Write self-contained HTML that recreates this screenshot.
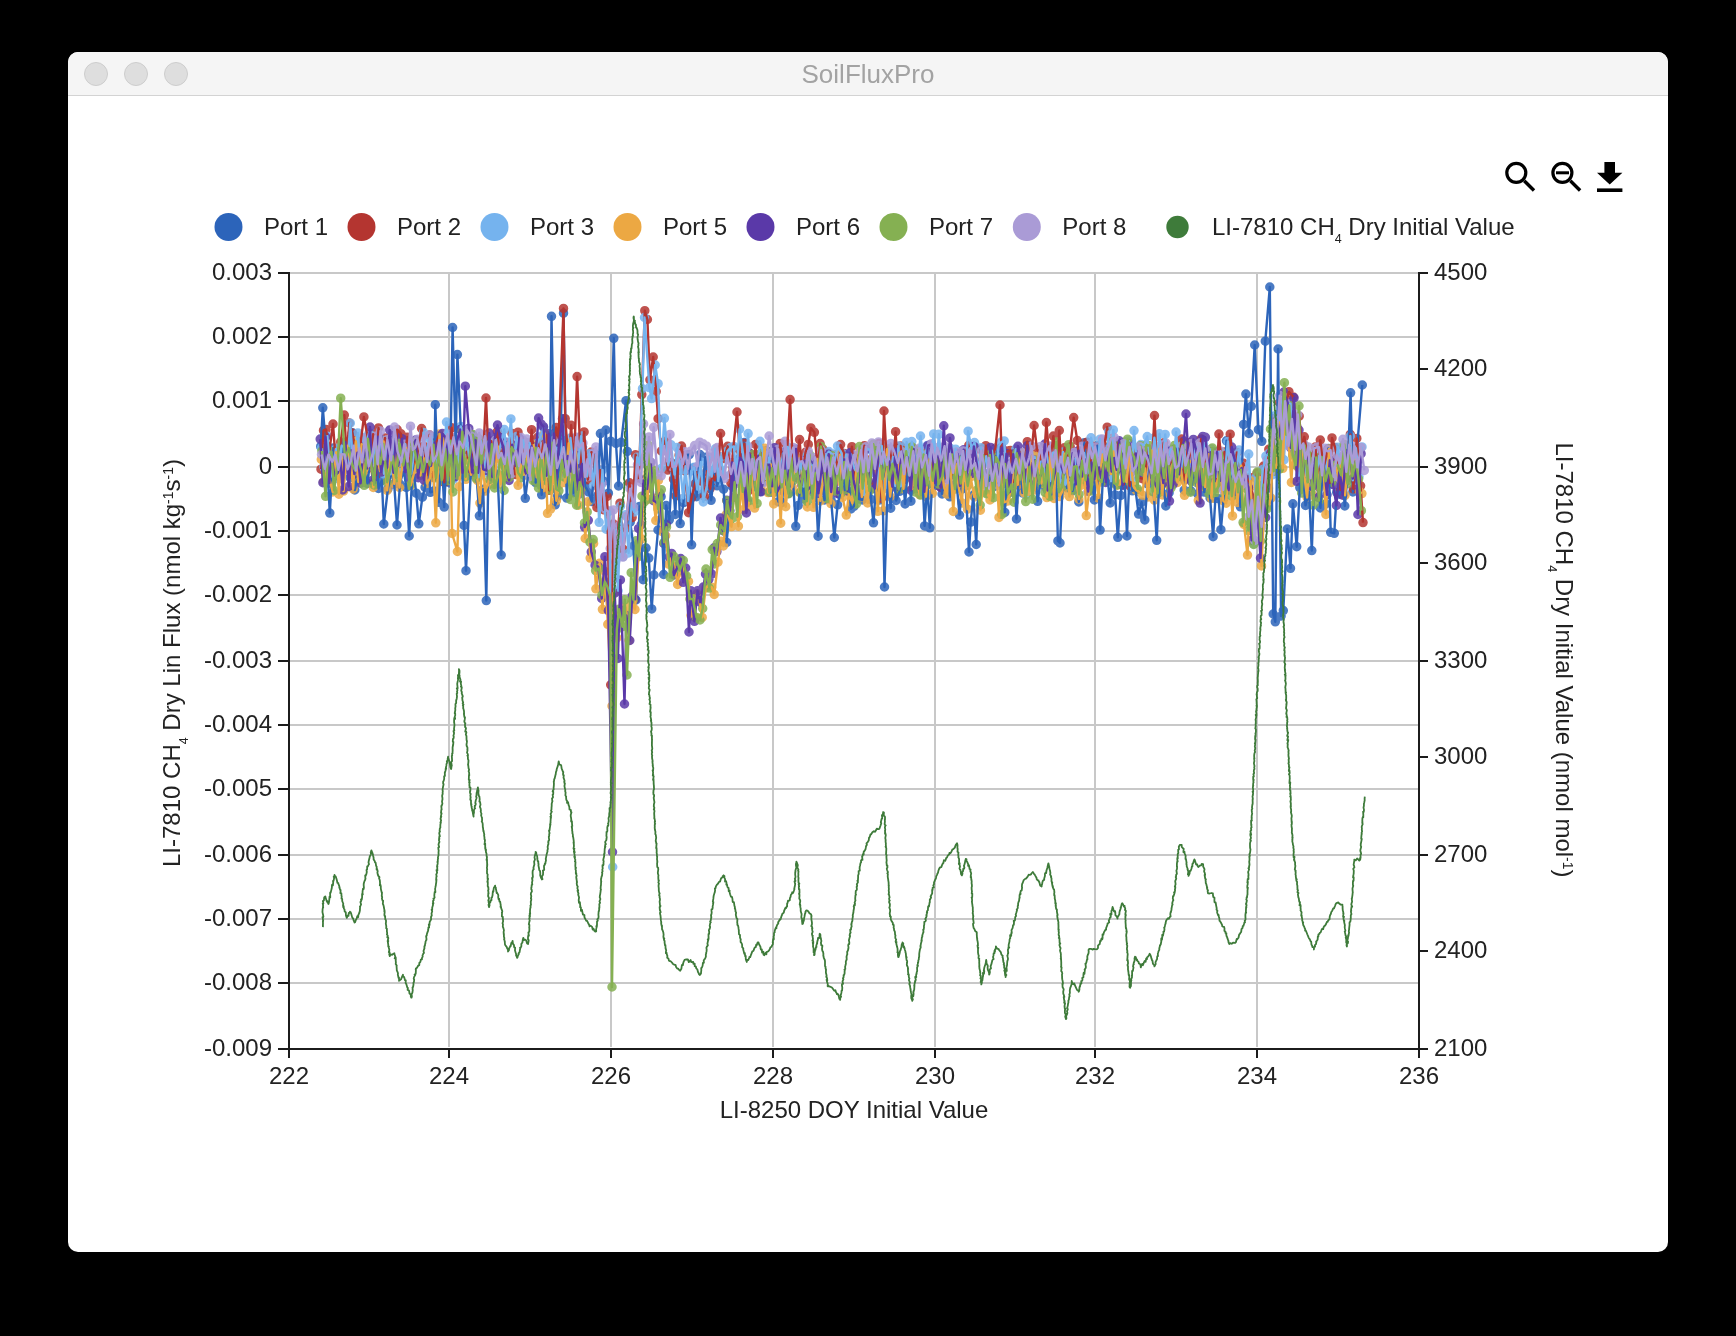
<!DOCTYPE html>
<html><head><meta charset="utf-8"><style>
html,body{margin:0;padding:0;background:#000;width:1736px;height:1336px;overflow:hidden}
#win{position:absolute;left:68px;top:52px;width:1600px;height:1200px;background:#fff;border-radius:10px;overflow:hidden}
#tb{position:absolute;left:0;top:0;width:1600px;height:43px;background:#f5f5f5;border-bottom:1px solid #d3d3d3;box-sizing:content-box}
.dot{position:absolute;top:10px;width:22px;height:22px;border-radius:50%;background:#dedede;border:1px solid #cdcdcd}
#title{position:absolute;left:0;width:1600px;top:7px;text-align:center;font:26px "Liberation Sans", sans-serif;color:#a3a3a3;line-height:30px;will-change:transform}
svg{position:absolute;left:0;top:0;will-change:transform}
text{font-family:"Liberation Sans", sans-serif}
</style></head><body>
<div id="win"><div id="tb"><div class="dot" style="left:16px"></div><div class="dot" style="left:56px"></div><div class="dot" style="left:96px"></div><div id="title">SoilFluxPro</div></div></div>
<svg width="1736" height="1336" viewBox="0 0 1736 1336">
<path d="M290 273H1418M290 337H1418M290 401H1418M290 467H1418M290 531H1418M290 595H1418M290 661H1418M290 725H1418M290 789H1418M290 855H1418M290 919H1418M290 983H1418M449 274V1047M611 274V1047M773 274V1047M935 274V1047M1095 274V1047M1257 274V1047" stroke="#c8c8c8" stroke-width="2" fill="none"/>
<path d="M320.7 446.4h0M322.8 407.8h0M326.6 454.6h0M329.8 513.1h0M333.4 447.9h0M337.1 475.9h0M340.0 460.9h0M343.2 447.3h0M346.9 463.4h0M350.1 477.6h0M352.4 432.8h0M354.8 490.0h0M357.1 480.5h0M360.9 466.1h0M363.7 461.6h0M367.5 483.4h0M370.6 456.3h0M374.0 483.5h0M376.2 450.9h0M378.5 488.5h0M381.9 480.5h0M383.8 524.0h0M387.9 488.9h0M391.3 470.3h0M394.2 483.8h0M397.0 525.0h0M400.0 484.3h0M403.6 469.2h0M406.3 487.4h0M409.2 536.0h0M412.8 464.0h0M416.2 493.2h0M418.8 523.8h0M422.4 497.2h0M425.1 487.4h0M427.8 450.1h0M430.3 492.3h0M433.8 491.1h0M435.3 404.7h0M438.8 502.3h0M441.5 452.1h0M444.2 507.1h0M447.0 448.8h0M449.9 483.0h0M452.6 327.5h0M455.7 445.8h0M457.4 354.6h0M461.8 450.8h0M464.0 525.5h0M466.0 570.7h0M470.7 474.3h0M473.0 435.2h0M476.6 477.4h0M479.4 515.8h0M483.2 489.2h0M486.3 600.6h0M488.8 445.6h0M491.3 475.5h0M494.6 457.8h0M497.7 478.1h0M501.2 555.1h0M503.2 478.2h0M506.1 442.3h0M509.1 471.6h0M512.7 455.7h0M516.2 471.1h0M519.6 457.3h0M522.7 465.5h0M525.3 498.3h0M528.9 468.3h0M532.3 446.0h0M535.7 482.6h0M538.5 447.6h0M541.7 494.8h0M544.1 443.8h0M547.0 481.2h0M550.1 455.6h0M551.5 316.3h0M555.2 504.8h0M557.6 496.3h0M560.4 445.4h0M563.5 313.2h0M566.7 498.1h0M569.8 451.1h0M573.4 492.8h0M576.6 454.5h0M578.9 494.2h0M582.5 447.1h0M585.1 486.4h0M588.4 491.9h0M591.8 501.6h0M595.2 454.0h0M597.7 495.5h0M600.4 433.6h0M603.7 481.2h0M605.9 430.0h0M608.4 493.2h0M610.7 441.2h0M613.8 338.3h0M616.0 443.4h0M618.6 486.0h0M621.2 442.3h0M626.0 400.7h0M627.3 451.4h0M630.2 522.2h0M633.4 546.0h0M636.0 600.0h0M639.7 506.4h0M643.1 579.7h0M646.0 548.0h0M648.8 558.1h0M651.7 608.9h0M654.0 575.0h0M658.0 530.0h0M661.1 496.7h0M663.6 574.5h0M666.2 505.5h0M669.3 519.8h0M672.2 469.7h0M675.3 514.4h0M677.6 462.8h0M680.2 523.6h0M683.5 502.6h0M686.4 454.9h0M689.3 454.6h0M691.6 544.8h0M694.2 467.7h0M696.6 496.7h0M699.9 454.6h0M702.6 494.0h0M705.3 457.2h0M708.8 486.0h0M711.1 500.3h0M714.8 470.0h0M717.1 485.8h0M720.0 476.8h0M723.6 489.2h0M726.7 542.4h0M729.6 503.6h0M732.6 486.7h0M735.5 466.2h0M737.9 464.2h0M741.6 481.5h0M744.3 442.6h0M747.3 500.6h0M749.8 454.7h0M753.5 486.9h0M757.3 466.7h0M760.6 491.4h0M764.4 465.6h0M766.7 450.5h0M770.5 492.3h0M772.9 454.4h0M776.0 470.8h0M778.4 501.7h0M782.1 502.5h0M785.1 464.1h0M788.5 493.4h0M792.1 465.3h0M795.8 526.3h0M798.2 505.4h0M801.2 479.0h0M804.4 498.9h0M807.5 461.6h0M811.3 491.2h0M814.5 461.3h0M818.1 536.2h0M821.7 480.9h0M824.5 500.0h0M827.8 474.9h0M831.1 500.0h0M834.3 537.5h0M837.6 504.8h0M840.0 494.6h0M842.5 458.9h0M844.7 490.1h0M847.6 465.6h0M850.9 508.9h0M853.9 506.4h0M857.0 476.7h0M859.3 499.1h0M862.2 500.0h0M865.3 476.2h0M868.5 466.5h0M871.0 499.4h0M873.5 522.8h0M876.1 483.9h0M879.6 499.9h0M882.2 472.5h0M884.5 587.0h0M887.8 476.5h0M890.7 508.2h0M893.4 469.3h0M896.1 500.5h0M899.5 491.3h0M902.5 472.2h0M905.1 503.9h0M908.7 458.1h0M910.9 501.2h0M913.5 465.8h0M916.2 487.0h0M919.3 475.0h0M921.8 463.7h0M924.6 525.9h0M927.3 484.4h0M929.8 527.8h0M933.2 463.5h0M935.7 485.4h0M939.1 458.4h0M942.1 493.9h0M944.7 462.8h0M947.5 461.9h0M949.9 496.8h0M953.0 461.6h0M956.6 483.1h0M959.5 515.1h0M961.8 489.2h0M964.6 466.3h0M969.0 552.0h0M970.7 522.1h0M973.3 495.3h0M976.2 544.5h0M979.3 465.7h0M982.1 483.6h0M985.8 474.0h0M989.4 480.7h0M992.0 470.2h0M994.3 486.5h0M997.7 449.9h0M1001.5 470.2h0M1004.8 512.4h0M1007.8 463.3h0M1010.7 489.8h0M1013.9 463.8h0M1016.5 519.0h0M1019.9 456.3h0M1022.4 492.9h0M1025.4 462.4h0M1028.6 454.3h0M1032.0 472.4h0M1035.1 469.9h0M1037.6 501.3h0M1041.2 477.6h0M1045.0 486.7h0M1048.7 459.5h0M1051.8 494.4h0M1055.5 451.2h0M1057.9 540.9h0M1060.0 543.0h0M1063.8 459.6h0M1067.0 487.8h0M1069.7 466.4h0M1072.6 490.7h0M1076.0 475.2h0M1078.8 502.0h0M1081.0 466.6h0M1084.4 442.8h0M1087.8 484.2h0M1091.4 475.2h0M1094.4 499.9h0M1097.4 445.7h0M1100.1 530.1h0M1103.8 461.8h0M1107.1 473.6h0M1110.2 503.0h0M1112.7 461.2h0M1115.1 494.9h0M1117.8 537.3h0M1120.7 495.5h0M1123.8 459.5h0M1127.0 536.0h0M1129.5 473.9h0M1132.4 490.8h0M1135.5 489.9h0M1138.6 514.1h0M1141.6 502.2h0M1144.8 519.9h0M1147.5 483.9h0M1150.6 460.4h0M1153.2 484.3h0M1156.7 540.3h0M1160.3 457.4h0M1163.0 482.0h0M1165.8 505.9h0M1169.1 492.8h0M1172.1 452.1h0M1174.6 475.8h0M1177.8 448.4h0M1181.4 451.4h0M1184.2 490.2h0M1187.7 463.6h0M1190.8 490.9h0M1194.4 465.3h0M1197.7 493.9h0M1200.6 456.1h0M1204.3 492.1h0M1207.5 467.1h0M1210.1 498.0h0M1213.1 536.7h0M1215.4 498.3h0M1218.6 498.7h0M1220.9 529.7h0M1223.6 498.7h0M1226.5 440.8h0M1230.0 483.7h0M1232.9 455.6h0M1235.5 494.8h0M1238.0 481.0h0M1240.4 506.8h0M1243.6 424.4h0M1245.9 394.1h0M1248.9 433.5h0M1251.3 406.3h0M1254.7 345.0h0M1258.4 429.7h0M1261.8 441.3h0M1265.3 341.2h0M1269.8 287.0h0M1273.2 614.0h0M1275.3 621.8h0M1278.1 349.0h0M1281.1 616.0h0M1283.3 610.6h0M1287.3 529.0h0M1290.5 568.3h0M1292.9 503.8h0M1296.7 546.7h0M1299.8 487.6h0M1302.9 471.4h0M1305.5 505.4h0M1309.1 492.0h0M1311.8 550.6h0M1314.3 479.4h0M1318.0 481.2h0M1320.4 507.9h0M1323.1 464.2h0M1325.8 503.9h0M1328.3 448.5h0M1330.7 532.3h0M1334.3 533.3h0M1336.7 492.3h0M1339.6 494.2h0M1342.0 473.8h0M1344.8 506.0h0M1347.3 478.1h0M1350.6 392.8h0M1352.9 492.0h0M1356.0 460.4h0M1362.3 385.0h0" stroke="#2c64ba" stroke-opacity="0.85" stroke-width="9.5" stroke-linecap="round" fill="none"/>
<path d="M321.0 469.2h0M323.5 430.4h0M326.0 429.4h0M329.3 451.2h0M333.0 424.0h0M335.4 456.4h0M338.1 451.0h0M340.7 441.9h0M344.3 415.1h0M346.6 454.4h0M349.3 423.0h0M352.3 433.3h0M354.8 445.1h0M357.8 474.2h0M360.8 441.6h0M363.9 416.9h0M367.7 437.2h0M370.5 467.4h0M373.1 434.2h0M376.0 474.9h0M378.5 427.9h0M381.8 463.1h0M385.0 438.0h0M388.5 458.1h0M391.3 443.6h0M394.4 474.1h0M397.2 429.6h0M401.0 433.8h0M403.6 465.2h0M407.2 437.3h0M409.6 467.7h0M412.5 447.4h0M415.9 465.3h0M418.5 445.9h0M421.6 428.5h0M424.3 446.5h0M427.0 475.6h0M429.6 435.0h0M433.3 477.5h0M436.2 442.6h0M438.6 435.9h0M441.0 437.3h0M444.3 482.3h0M446.5 445.2h0M449.3 475.6h0M451.6 427.8h0M454.5 469.1h0M457.4 449.2h0M461.0 439.1h0M464.0 453.3h0M467.0 451.8h0M470.2 472.6h0M473.9 443.9h0M477.3 464.8h0M479.6 444.2h0M482.7 463.2h0M486.0 398.0h0M489.0 465.6h0M491.3 441.3h0M493.9 475.2h0M497.3 431.6h0M500.4 458.8h0M503.6 446.2h0M507.3 465.9h0M509.8 443.1h0M512.0 433.4h0M515.2 474.5h0M518.0 432.2h0M521.0 460.4h0M523.3 448.3h0M525.7 463.6h0M529.3 466.4h0M531.6 429.7h0M534.2 458.5h0M537.5 437.5h0M540.7 461.3h0M543.7 440.6h0M546.6 435.2h0M549.2 490.3h0M552.9 469.0h0M556.2 427.4h0M558.6 438.0h0M563.5 308.4h0M565.2 418.7h0M568.8 463.9h0M571.1 425.2h0M573.8 467.8h0M577.1 376.6h0M580.8 464.2h0M584.1 431.9h0M587.8 479.7h0M591.4 452.1h0M594.1 455.4h0M596.9 507.4h0M600.3 470.3h0M603.9 509.8h0M607.1 496.4h0M610.7 684.8h0M613.5 524.1h0M616.8 549.4h0M620.0 503.2h0M623.3 549.3h0M626.0 528.4h0M629.5 482.8h0M632.1 517.6h0M635.6 454.7h0M638.9 478.1h0M641.8 394.6h0M644.8 310.7h0M647.4 319.5h0M649.9 379.8h0M653.2 357.0h0M656.2 391.5h0M658.1 418.7h0M661.3 451.0h0M664.8 441.3h0M667.7 470.1h0M671.0 462.5h0M673.5 479.2h0M675.9 496.0h0M679.1 455.2h0M681.5 446.0h0M685.0 471.0h0M688.6 512.7h0M691.5 497.9h0M695.1 483.8h0M697.9 475.2h0M701.4 481.2h0M704.5 496.3h0M707.0 471.3h0M710.0 488.7h0M712.2 474.2h0M714.8 480.3h0M718.1 468.1h0M720.6 433.5h0M723.9 458.6h0M727.7 446.3h0M730.9 482.9h0M733.3 448.0h0M737.0 412.0h0M739.6 450.1h0M742.2 471.6h0M744.4 443.6h0M748.0 491.2h0M750.2 453.5h0M753.0 472.9h0M755.6 444.4h0M758.2 481.5h0M761.8 453.1h0M765.3 479.7h0M768.6 458.8h0M770.9 481.2h0M774.2 450.9h0M777.6 475.1h0M780.2 443.4h0M783.3 472.1h0M787.0 453.3h0M790.1 399.6h0M792.9 467.9h0M795.9 466.9h0M799.6 439.6h0M802.5 479.0h0M805.5 452.3h0M808.3 444.4h0M810.9 427.9h0M814.4 432.3h0M817.7 468.1h0M820.1 443.5h0M823.0 449.3h0M826.6 481.1h0M829.0 453.3h0M832.1 464.7h0M835.3 455.0h0M838.2 471.2h0M840.6 444.6h0M844.1 453.4h0M846.7 479.2h0M849.5 474.5h0M851.9 446.7h0M854.8 484.3h0M858.3 455.4h0M860.8 470.8h0M864.4 445.7h0M867.1 477.7h0M870.5 459.7h0M873.0 450.6h0M875.7 483.8h0M878.8 443.5h0M881.5 498.3h0M884.0 411.0h0M887.2 468.7h0M890.0 450.2h0M892.8 470.0h0M895.6 431.7h0M898.1 474.7h0M900.6 446.0h0M904.3 479.9h0M907.8 457.3h0M910.5 462.4h0M914.0 477.0h0M917.8 462.8h0M920.1 486.3h0M922.7 458.0h0M925.3 492.4h0M927.8 450.0h0M931.3 473.5h0M933.8 453.3h0M936.0 479.2h0M938.7 451.2h0M941.0 487.5h0M943.9 453.2h0M946.6 478.7h0M949.3 464.4h0M952.9 474.6h0M956.5 455.1h0M958.8 474.3h0M962.1 484.1h0M965.7 451.5h0M968.8 445.3h0M971.7 446.5h0M975.4 447.4h0M978.0 471.5h0M980.9 449.3h0M983.5 481.6h0M985.8 445.7h0M989.3 474.4h0M992.9 454.9h0M995.4 448.2h0M1000.0 405.0h0M1001.4 449.0h0M1004.6 470.0h0M1007.6 451.1h0M1010.5 450.4h0M1013.4 481.7h0M1015.7 455.4h0M1017.9 484.9h0M1020.1 452.4h0M1023.8 468.6h0M1027.3 441.7h0M1030.5 463.0h0M1034.1 425.5h0M1037.0 449.4h0M1039.4 452.2h0M1042.9 475.3h0M1046.4 422.5h0M1049.8 463.2h0M1053.4 436.1h0M1056.7 473.2h0M1059.3 430.5h0M1061.8 475.8h0M1064.4 447.8h0M1067.5 460.7h0M1070.2 446.7h0M1073.7 417.6h0M1077.3 440.5h0M1080.2 471.6h0M1083.8 449.8h0M1087.0 442.2h0M1089.3 476.0h0M1092.1 446.0h0M1094.6 452.7h0M1097.9 480.6h0M1101.1 444.5h0M1104.2 446.4h0M1107.2 427.2h0M1110.4 472.0h0M1112.6 459.4h0M1115.5 467.9h0M1118.3 442.7h0M1120.9 456.1h0M1123.8 484.3h0M1127.4 446.0h0M1129.8 485.8h0M1132.9 448.9h0M1136.0 469.4h0M1139.0 477.8h0M1142.4 478.7h0M1144.9 479.7h0M1147.8 448.6h0M1151.4 474.1h0M1154.5 415.6h0M1157.1 472.3h0M1160.6 470.7h0M1163.7 442.8h0M1167.2 479.7h0M1170.8 454.6h0M1173.2 469.9h0M1176.0 449.8h0M1179.3 464.3h0M1181.5 439.1h0M1184.5 479.9h0M1188.3 442.7h0M1191.9 474.5h0M1194.9 450.5h0M1197.6 468.3h0M1201.2 438.9h0M1204.1 471.5h0M1206.7 452.7h0M1210.0 477.4h0M1212.6 451.6h0M1215.7 487.7h0M1218.9 434.1h0M1222.2 470.0h0M1224.5 452.0h0M1227.2 470.1h0M1230.2 434.2h0M1233.6 472.1h0M1237.0 452.5h0M1240.4 467.1h0M1243.5 463.3h0M1246.7 484.0h0M1249.8 477.5h0M1253.5 503.5h0M1257.0 473.3h0M1260.7 512.5h0M1263.6 466.1h0M1266.2 502.2h0M1268.8 449.3h0M1271.0 461.7h0M1274.0 418.8h0M1277.1 457.1h0M1279.7 402.7h0M1282.3 431.5h0M1286.1 403.1h0M1288.9 391.7h0M1293.4 397.0h0M1296.7 435.4h0M1299.2 416.2h0M1301.7 446.2h0M1304.3 436.8h0M1308.1 458.2h0M1311.7 455.6h0M1315.3 447.0h0M1318.0 473.3h0M1320.3 440.1h0M1323.7 469.4h0M1327.4 450.3h0M1329.7 482.9h0M1332.0 437.9h0M1335.1 447.6h0M1337.3 457.4h0M1340.5 490.0h0M1344.2 447.6h0M1346.8 480.8h0M1350.3 434.4h0M1353.3 488.8h0M1356.8 438.4h0M1360.6 485.8h0M1363.0 522.6h0" stroke="#b43530" stroke-opacity="0.85" stroke-width="9.5" stroke-linecap="round" fill="none"/>
<path d="M321.4 448.1h0M323.9 466.9h0M327.4 436.2h0M330.4 477.1h0M333.2 467.0h0M335.9 448.9h0M338.5 478.8h0M341.6 445.7h0M345.1 447.1h0M347.5 463.7h0M350.3 423.2h0M353.1 468.9h0M355.3 447.3h0M357.9 432.9h0M361.5 477.3h0M364.0 437.5h0M366.5 442.9h0M369.1 432.9h0M372.6 463.0h0M375.4 440.0h0M379.0 464.5h0M381.7 439.9h0M384.1 473.9h0M387.5 441.6h0M390.7 474.3h0M394.2 439.7h0M397.9 475.6h0M400.2 469.0h0M402.5 470.0h0M405.3 444.3h0M407.9 467.7h0M411.3 473.5h0M414.7 447.1h0M418.2 466.7h0M420.5 473.0h0M423.5 432.4h0M426.1 455.3h0M429.3 438.2h0M431.5 437.3h0M435.1 469.5h0M438.4 454.5h0M441.3 437.4h0M443.5 451.1h0M446.5 422.1h0M449.9 468.1h0M453.6 479.1h0M457.2 461.0h0M460.8 426.4h0M463.7 456.9h0M466.4 434.7h0M469.0 456.3h0M471.6 438.5h0M474.9 444.1h0M478.5 477.4h0M480.7 440.6h0M484.3 472.4h0M487.8 441.8h0M490.9 459.4h0M493.2 465.0h0M495.9 439.1h0M498.5 453.8h0M500.9 443.4h0M504.3 429.5h0M507.2 466.6h0M510.9 418.9h0M513.6 463.5h0M516.7 436.5h0M519.5 467.7h0M522.9 440.2h0M526.2 457.3h0M529.6 442.8h0M533.4 459.7h0M537.1 443.5h0M540.6 436.2h0M543.6 427.9h0M546.8 476.8h0M549.7 451.0h0M553.4 464.8h0M556.7 451.5h0M560.2 462.2h0M562.8 440.4h0M565.1 469.8h0M567.9 464.6h0M570.5 438.0h0M573.2 466.1h0M575.9 450.9h0M578.2 463.1h0M581.1 436.1h0M584.4 472.0h0M587.1 476.4h0M589.7 453.8h0M593.5 485.5h0M595.9 455.0h0M599.2 522.3h0M602.5 469.9h0M606.1 529.2h0M609.4 511.1h0M612.7 867.0h0M614.9 529.9h0M618.1 590.8h0M620.5 506.2h0M623.2 556.6h0M625.7 514.7h0M628.6 553.0h0M631.7 502.8h0M634.2 512.0h0M637.1 457.2h0M639.4 465.0h0M642.5 388.7h0M644.5 317.5h0M649.4 387.6h0M651.6 398.6h0M655.2 365.0h0M658.1 383.7h0M661.2 468.6h0M664.4 418.3h0M668.2 465.2h0M670.9 444.7h0M674.5 474.5h0M677.1 447.6h0M680.5 470.5h0M683.2 498.4h0M685.5 466.2h0M688.0 501.0h0M691.2 471.0h0M694.2 467.2h0M697.3 489.5h0M700.8 461.9h0M703.3 501.9h0M706.8 485.9h0M709.4 457.3h0M711.7 476.5h0M715.5 448.7h0M718.3 481.1h0M720.8 456.7h0M723.9 475.4h0M727.5 451.1h0M730.6 447.6h0M733.9 446.4h0M736.1 473.8h0M739.6 429.1h0M743.1 454.1h0M745.7 482.7h0M748.1 433.6h0M750.3 478.9h0M753.3 457.0h0M756.3 475.6h0M760.0 441.3h0M762.6 450.5h0M765.6 479.4h0M769.1 457.7h0M771.5 483.0h0M774.0 450.4h0M776.3 472.3h0M779.8 479.7h0M783.0 453.5h0M785.4 485.1h0M787.7 447.0h0M791.5 477.8h0M795.0 454.6h0M797.6 475.3h0M800.8 462.3h0M803.7 486.6h0M807.3 455.2h0M810.4 485.5h0M813.7 465.9h0M816.1 482.4h0M819.1 463.3h0M822.6 482.9h0M826.0 456.0h0M828.9 451.5h0M831.5 453.6h0M834.6 460.9h0M837.5 446.1h0M841.2 452.7h0M843.4 475.3h0M846.1 454.6h0M848.6 478.8h0M851.2 454.5h0M854.2 468.4h0M857.2 472.7h0M860.4 460.4h0M863.7 495.0h0M866.1 448.4h0M869.7 449.8h0M873.2 472.5h0M875.6 451.8h0M878.5 487.8h0M881.7 445.9h0M885.3 488.3h0M887.9 448.8h0M890.7 475.8h0M893.0 456.9h0M895.2 486.0h0M898.4 445.9h0M900.7 486.3h0M904.4 473.7h0M906.6 442.2h0M909.3 474.3h0M911.8 441.6h0M914.4 454.6h0M917.5 467.2h0M920.5 436.0h0M924.1 463.6h0M927.3 445.4h0M930.2 461.7h0M933.7 433.9h0M936.5 467.2h0M938.8 434.3h0M942.4 470.6h0M944.7 452.9h0M947.9 471.9h0M950.6 448.6h0M953.3 465.3h0M955.6 449.2h0M958.6 467.3h0M962.3 454.3h0M965.1 481.1h0M968.1 431.2h0M971.7 448.8h0M974.5 442.5h0M978.3 471.4h0M981.0 447.8h0M983.3 484.1h0M986.2 456.1h0M988.9 473.6h0M992.0 450.8h0M995.7 478.4h0M998.5 446.1h0M1001.3 442.0h0M1004.2 440.9h0M1006.6 478.8h0M1009.8 466.8h0M1012.4 478.3h0M1015.8 449.1h0M1019.5 475.9h0M1023.2 458.0h0M1025.7 495.0h0M1028.8 453.0h0M1031.3 469.8h0M1034.6 456.9h0M1038.2 477.8h0M1041.2 461.5h0M1043.9 480.0h0M1046.7 453.6h0M1050.3 481.0h0M1052.6 453.0h0M1056.0 451.2h0M1059.6 482.8h0M1063.0 451.9h0M1065.4 484.7h0M1068.0 478.3h0M1070.7 460.7h0M1073.6 482.3h0M1076.1 459.1h0M1078.9 471.2h0M1081.6 476.4h0M1084.1 452.9h0M1087.6 473.5h0M1091.0 437.8h0M1094.2 454.3h0M1097.5 467.6h0M1100.1 439.2h0M1102.3 454.8h0M1105.5 480.8h0M1108.7 431.4h0M1111.0 481.2h0M1113.3 429.9h0M1116.5 472.0h0M1120.2 452.4h0M1122.6 469.1h0M1126.1 441.5h0M1128.9 440.9h0M1131.3 480.1h0M1134.0 430.6h0M1137.5 471.4h0M1140.8 444.5h0M1144.2 445.1h0M1147.2 436.5h0M1150.9 471.0h0M1154.4 437.7h0M1157.3 463.7h0M1159.5 433.8h0M1161.8 472.5h0M1165.2 434.4h0M1167.4 460.4h0M1170.8 449.2h0M1173.5 464.3h0M1176.1 432.1h0M1178.6 465.9h0M1181.3 468.3h0M1183.6 448.4h0M1187.2 467.0h0M1189.9 469.4h0M1193.4 448.0h0M1195.8 460.3h0M1198.3 447.2h0M1200.5 469.2h0M1203.5 443.8h0M1206.3 453.5h0M1208.9 477.7h0M1211.2 449.1h0M1213.7 467.0h0M1216.1 476.9h0M1218.3 451.8h0M1221.8 453.2h0M1224.6 475.6h0M1227.9 441.4h0M1230.6 474.9h0M1233.8 453.1h0M1236.1 475.0h0M1239.0 450.0h0M1242.1 482.2h0M1245.4 471.4h0M1248.7 454.1h0M1253.6 544.0h0M1255.6 477.8h0M1259.3 514.7h0M1262.8 469.4h0M1265.9 456.2h0M1269.0 453.3h0M1272.4 474.8h0M1275.0 415.7h0M1277.5 447.0h0M1281.3 401.6h0M1284.0 459.8h0M1286.8 405.3h0M1290.5 403.5h0M1293.9 443.5h0M1296.9 426.5h0M1299.8 475.5h0M1302.8 448.1h0M1305.7 475.7h0M1309.1 459.5h0M1311.4 483.9h0M1314.0 466.6h0M1316.5 473.9h0M1319.2 455.7h0M1322.2 474.9h0M1325.5 470.3h0M1328.2 458.4h0M1331.7 472.6h0M1334.5 473.1h0M1337.8 447.3h0M1341.0 478.7h0M1344.5 447.3h0M1348.0 473.0h0M1350.3 436.0h0M1352.8 480.3h0M1355.9 448.1h0M1359.0 476.8h0M1362.0 446.9h0" stroke="#75b3ee" stroke-opacity="0.85" stroke-width="9.5" stroke-linecap="round" fill="none"/>
<path d="M321.3 459.5h0M323.5 481.8h0M327.0 471.1h0M330.1 481.7h0M332.7 491.9h0M336.1 452.3h0M338.9 494.2h0M341.3 454.8h0M343.6 491.1h0M347.3 445.7h0M350.9 463.1h0M353.2 488.9h0M355.8 441.3h0M358.2 482.0h0M361.6 444.1h0M364.7 477.1h0M367.5 469.0h0M370.1 453.7h0M373.3 487.4h0M376.5 450.8h0M380.0 471.1h0M383.6 441.4h0M387.2 490.3h0M390.9 452.0h0M394.2 483.9h0M396.8 448.0h0M399.5 487.5h0M403.2 458.2h0M406.0 447.9h0M408.2 461.5h0M411.0 485.3h0M413.7 474.2h0M417.4 460.8h0M420.1 475.5h0M423.6 458.3h0M427.0 483.5h0M429.9 478.4h0M432.8 456.5h0M435.8 522.8h0M439.5 433.9h0M442.2 478.9h0M444.5 436.1h0M447.6 466.0h0M450.4 453.2h0M452.1 533.5h0M457.4 551.5h0M459.2 486.7h0M462.7 439.9h0M465.9 479.3h0M468.3 459.8h0M471.0 474.7h0M474.0 457.8h0M477.4 480.3h0M479.9 503.1h0M482.4 459.8h0M485.2 491.1h0M488.1 484.8h0M490.6 454.3h0M494.3 484.4h0M497.8 446.4h0M500.6 484.1h0M504.1 465.7h0M507.4 477.7h0M511.0 448.9h0M514.6 451.7h0M518.1 485.3h0M520.9 464.1h0M523.9 474.8h0M527.5 455.6h0M530.7 475.4h0M533.6 445.1h0M536.7 477.3h0M539.6 459.2h0M542.5 487.8h0M544.7 433.5h0M547.5 513.3h0M550.6 509.1h0M553.5 467.3h0M556.4 500.7h0M559.0 485.3h0M562.4 462.5h0M565.3 482.6h0M568.7 443.3h0M572.3 480.7h0M575.8 448.4h0M578.6 505.2h0M582.4 472.9h0M585.2 538.5h0M587.9 501.7h0M590.2 558.1h0M593.6 543.5h0M595.9 588.8h0M599.6 563.2h0M602.4 609.3h0M605.0 571.5h0M607.8 624.3h0M612.0 706.0h0M613.5 592.9h0M616.8 637.9h0M619.7 616.3h0M622.9 608.5h0M625.9 607.4h0M629.0 640.3h0M631.5 602.2h0M635.0 609.5h0M638.5 555.7h0M641.7 538.9h0M645.4 456.6h0M647.6 499.5h0M650.2 466.3h0M653.4 498.3h0M655.8 520.5h0M658.4 480.5h0M661.9 531.4h0M665.6 535.7h0M668.6 564.2h0M671.6 556.8h0M674.9 568.2h0M677.6 584.4h0M681.1 563.3h0M684.8 575.3h0M688.5 581.4h0M691.0 615.5h0M694.3 616.9h0M696.9 593.8h0M699.4 600.2h0M702.2 617.4h0M705.7 588.0h0M708.5 585.5h0M711.7 587.2h0M714.2 594.4h0M718.0 562.1h0M720.8 541.3h0M723.4 546.0h0M726.2 514.6h0M728.4 516.6h0M731.5 526.6h0M734.7 482.8h0M738.4 526.2h0M741.3 484.3h0M743.7 509.6h0M746.0 476.8h0M748.5 506.1h0M751.0 468.8h0M754.6 508.1h0M757.7 468.3h0M761.0 487.2h0M764.7 448.3h0M768.1 492.6h0M770.8 464.4h0M773.7 503.9h0M777.4 457.3h0M780.7 523.2h0M783.5 455.1h0M785.7 506.7h0M789.5 471.8h0M792.3 487.2h0M796.1 457.0h0M799.5 492.5h0M802.6 471.8h0M805.1 462.4h0M807.4 507.0h0M810.4 470.4h0M813.6 507.3h0M817.2 459.0h0M820.4 500.9h0M823.7 474.0h0M827.2 475.6h0M830.9 503.6h0M833.7 471.4h0M837.3 481.3h0M839.8 454.8h0M842.6 497.5h0M846.3 515.1h0M848.8 494.3h0M852.4 503.4h0M855.4 478.9h0M858.8 453.6h0M861.9 497.0h0M864.7 464.4h0M867.6 503.0h0M870.7 462.9h0M874.3 459.8h0M877.8 511.3h0M880.4 467.9h0M883.4 510.8h0M887.0 449.2h0M890.1 496.6h0M893.6 470.4h0M896.0 483.3h0M899.7 452.6h0M903.5 488.8h0M905.8 457.4h0M908.8 470.4h0M912.1 489.1h0M914.3 464.5h0M917.1 480.9h0M919.6 494.6h0M922.3 461.8h0M925.9 496.7h0M929.5 459.7h0M932.4 493.3h0M934.8 463.1h0M938.6 480.2h0M941.0 465.5h0M944.4 488.2h0M946.8 494.1h0M949.9 456.1h0M953.3 511.4h0M956.0 464.2h0M958.8 487.7h0M962.0 502.9h0M964.3 457.7h0M967.5 509.2h0M970.5 476.8h0M974.3 497.0h0M977.6 477.7h0M980.4 510.2h0M984.0 476.1h0M987.4 493.5h0M990.0 499.9h0M993.1 467.7h0M996.5 470.7h0M999.0 517.4h0M1001.4 461.3h0M1004.0 502.4h0M1007.5 501.1h0M1010.7 491.7h0M1014.1 463.5h0M1017.8 484.7h0M1020.5 452.8h0M1024.0 492.8h0M1026.9 451.7h0M1029.3 491.4h0M1032.0 455.4h0M1034.6 490.1h0M1037.8 456.5h0M1041.5 483.5h0M1043.7 473.6h0M1046.9 497.6h0M1050.6 453.4h0M1054.0 498.4h0M1056.3 454.6h0M1059.8 496.6h0M1062.3 491.4h0M1064.5 453.8h0M1067.1 468.8h0M1069.4 496.6h0M1072.9 466.6h0M1075.2 476.6h0M1078.9 499.1h0M1081.3 485.2h0M1084.1 464.9h0M1086.3 515.6h0M1089.8 485.8h0M1092.9 463.3h0M1095.8 475.0h0M1098.5 498.1h0M1102.0 454.5h0M1105.2 479.7h0M1108.3 446.8h0M1111.0 474.1h0M1113.7 451.5h0M1116.6 485.2h0M1119.9 484.5h0M1122.9 465.9h0M1126.4 482.0h0M1129.8 453.7h0M1133.4 486.2h0M1136.2 490.3h0M1138.7 491.6h0M1142.4 495.1h0M1145.2 468.5h0M1148.0 497.0h0M1151.6 450.5h0M1154.3 500.1h0M1156.7 482.1h0M1159.6 448.7h0M1162.4 494.9h0M1164.8 452.0h0M1168.2 484.6h0M1171.6 466.1h0M1174.0 461.4h0M1177.5 482.5h0M1180.9 468.3h0M1184.5 495.3h0M1187.8 458.3h0M1190.2 462.1h0M1192.6 460.2h0M1195.5 462.1h0M1198.3 500.3h0M1201.7 455.7h0M1205.1 487.1h0M1208.8 454.3h0M1211.4 498.5h0M1214.0 472.9h0M1216.4 488.5h0M1220.0 466.0h0M1223.3 500.9h0M1226.2 503.2h0M1228.8 462.5h0M1232.5 515.9h0M1235.0 466.5h0M1237.4 502.5h0M1241.2 465.7h0M1244.0 524.3h0M1247.5 555.1h0M1250.6 481.0h0M1252.0 528.0h0M1256.3 486.7h0M1259.0 480.5h0M1261.5 565.9h0M1264.8 495.7h0M1268.2 505.9h0M1271.0 498.1h0M1273.6 431.5h0M1276.4 467.9h0M1279.8 422.4h0M1282.8 468.3h0M1285.3 393.6h0M1288.7 443.2h0M1291.4 482.4h0M1294.3 424.5h0M1298.0 467.1h0M1301.2 449.2h0M1303.5 469.1h0M1307.1 497.5h0M1310.1 457.7h0M1312.7 495.1h0M1315.7 458.8h0M1319.3 487.5h0M1323.0 458.1h0M1325.9 514.4h0M1329.0 449.0h0M1331.8 480.6h0M1335.2 464.1h0M1338.5 476.8h0M1341.4 461.7h0M1345.0 495.4h0M1348.7 459.0h0M1352.2 475.8h0M1356.0 458.3h0M1359.6 491.5h0M1361.9 493.6h0" stroke="#eca843" stroke-opacity="0.85" stroke-width="9.5" stroke-linecap="round" fill="none"/>
<path d="M320.2 439.1h0M322.9 482.7h0M325.6 436.9h0M329.3 483.2h0M331.5 454.0h0M334.3 475.8h0M338.0 472.7h0M340.4 460.7h0M342.7 489.9h0M345.4 442.2h0M348.7 486.5h0M351.6 450.5h0M354.4 474.1h0M357.4 452.8h0M360.6 483.2h0M363.8 445.8h0M367.1 468.5h0M370.0 427.0h0M372.4 480.6h0M375.6 473.2h0M378.2 436.8h0M381.1 472.1h0M384.0 457.6h0M387.0 467.7h0M389.7 430.1h0M393.4 472.7h0M395.9 436.0h0M398.3 465.7h0M402.0 438.7h0M404.8 472.1h0M407.2 451.8h0M409.6 478.7h0M412.1 447.7h0M415.7 440.1h0M418.2 477.7h0M421.2 452.4h0M424.0 480.1h0M427.3 453.3h0M431.0 465.9h0M434.8 442.6h0M437.2 453.9h0M439.5 465.5h0M442.5 433.5h0M445.3 437.3h0M449.0 466.8h0M451.8 445.0h0M454.6 476.8h0M456.9 441.8h0M460.1 429.5h0M462.5 472.9h0M465.3 386.2h0M468.8 428.4h0M472.0 472.5h0M475.6 440.3h0M478.2 472.9h0M480.9 447.1h0M483.2 469.3h0M486.5 470.5h0M489.2 433.1h0M492.3 477.0h0M494.8 437.7h0M497.5 425.1h0M500.1 437.6h0M503.1 446.6h0M506.4 472.0h0M509.1 480.4h0M512.2 444.7h0M515.9 466.0h0M519.5 438.3h0M522.4 462.6h0M525.8 473.5h0M529.1 461.9h0M531.6 446.1h0M535.2 458.5h0M538.6 418.1h0M541.2 424.1h0M543.5 426.7h0M546.5 475.8h0M548.9 433.8h0M551.7 463.1h0M554.1 433.5h0M556.4 480.0h0M559.0 442.2h0M562.5 418.7h0M564.7 472.4h0M567.8 455.9h0M571.2 471.7h0M574.6 450.0h0M578.1 490.2h0M581.8 464.0h0M584.6 527.1h0M588.3 520.3h0M591.3 551.9h0M595.1 565.2h0M598.2 566.5h0M601.7 598.5h0M604.9 556.7h0M608.3 610.6h0M612.5 852.0h0M614.7 593.2h0M617.9 658.5h0M620.4 579.9h0M624.5 704.0h0M626.4 615.5h0M629.8 640.5h0M632.2 596.0h0M635.1 599.3h0M638.6 528.4h0M641.1 524.8h0M643.4 480.5h0M647.1 489.0h0M650.7 462.3h0M653.6 500.7h0M657.2 502.7h0M659.9 493.3h0M663.7 543.5h0M666.4 524.3h0M669.3 556.9h0M671.6 553.4h0M674.0 575.0h0M677.8 566.0h0M680.7 558.6h0M683.2 582.3h0M685.7 568.0h0M689.0 632.0h0M690.7 590.7h0M694.4 621.3h0M697.5 590.8h0M700.1 602.2h0M703.3 587.0h0M705.5 574.1h0M708.9 579.3h0M711.7 574.1h0M714.1 547.8h0M716.9 551.6h0M720.6 518.0h0M722.9 530.7h0M726.7 500.3h0M729.9 510.8h0M732.1 462.4h0M734.4 497.6h0M737.0 478.5h0M740.1 457.7h0M742.9 462.1h0M746.4 513.0h0M748.6 452.7h0M752.4 459.1h0M755.0 480.3h0M758.3 455.7h0M760.9 491.8h0M764.0 476.8h0M766.7 464.7h0M769.3 464.6h0M772.1 486.3h0M774.6 447.7h0M777.3 491.8h0M780.7 485.0h0M784.0 452.2h0M786.5 484.8h0M790.0 462.6h0M792.8 471.7h0M796.0 448.9h0M798.3 478.3h0M801.8 485.2h0M804.4 460.6h0M807.8 489.7h0M811.6 486.1h0M814.9 460.1h0M818.4 493.3h0M822.2 463.5h0M825.6 490.2h0M828.6 454.3h0M831.1 492.0h0M834.5 466.1h0M837.3 493.5h0M841.0 490.7h0M844.4 459.4h0M847.5 491.0h0M850.1 452.7h0M853.4 479.4h0M857.1 496.3h0M860.1 459.8h0M863.3 480.8h0M865.6 449.4h0M868.4 480.7h0M871.9 447.7h0M874.8 488.7h0M877.9 460.2h0M880.6 453.0h0M883.2 477.0h0M885.8 462.2h0M889.3 461.4h0M892.3 486.7h0M895.7 448.8h0M898.0 489.9h0M901.6 451.5h0M904.1 459.7h0M907.4 456.8h0M911.0 490.3h0M913.6 448.9h0M915.9 474.2h0M918.8 488.5h0M921.3 463.7h0M924.3 491.9h0M927.8 445.7h0M930.0 444.8h0M932.6 452.4h0M935.2 483.3h0M938.3 455.6h0M940.6 487.1h0M943.8 425.8h0M946.8 475.3h0M950.0 437.9h0M953.8 465.6h0M957.4 453.6h0M960.0 485.9h0M963.8 449.7h0M966.9 473.4h0M969.2 454.3h0M971.6 473.4h0M973.9 446.4h0M977.6 468.8h0M980.9 476.8h0M983.4 458.7h0M987.0 482.4h0M990.5 447.4h0M993.0 482.0h0M995.6 456.5h0M998.5 483.0h0M1001.7 447.6h0M1004.0 483.4h0M1006.5 453.6h0M1009.7 492.2h0M1013.2 454.1h0M1015.8 475.1h0M1018.0 446.3h0M1021.4 460.0h0M1024.5 482.1h0M1027.3 445.8h0M1030.4 481.5h0M1032.7 462.8h0M1034.9 460.2h0M1038.3 480.7h0M1041.7 472.8h0M1044.9 444.1h0M1047.5 490.5h0M1050.9 488.7h0M1053.1 480.2h0M1056.9 464.5h0M1060.2 462.1h0M1064.0 474.9h0M1067.3 457.6h0M1070.2 476.8h0M1072.6 453.3h0M1075.8 484.5h0M1078.5 450.7h0M1082.0 476.5h0M1084.5 459.1h0M1088.2 491.5h0M1091.5 462.4h0M1094.4 479.1h0M1097.4 458.1h0M1100.9 477.9h0M1103.6 464.0h0M1105.8 482.4h0M1108.8 447.3h0M1111.6 471.6h0M1114.1 458.0h0M1116.7 469.9h0M1119.1 440.7h0M1122.7 485.5h0M1126.1 455.9h0M1129.6 443.4h0M1132.7 468.1h0M1135.9 453.4h0M1138.7 473.3h0M1141.3 449.3h0M1144.7 460.6h0M1148.0 455.7h0M1151.3 477.9h0M1154.9 483.1h0M1158.0 490.3h0M1160.5 462.2h0M1163.3 483.1h0M1166.7 450.2h0M1169.5 501.1h0M1173.1 484.3h0M1175.5 448.5h0M1179.2 474.3h0M1181.6 448.7h0M1183.9 441.1h0M1186.0 414.0h0M1189.0 466.9h0M1191.2 481.1h0M1193.4 439.4h0M1197.0 453.8h0M1200.1 503.1h0M1202.8 436.4h0M1205.4 437.3h0M1208.7 472.1h0M1211.0 452.1h0M1214.8 481.4h0M1217.1 452.0h0M1220.0 480.8h0M1223.0 460.2h0M1225.9 480.9h0M1228.7 489.9h0M1231.7 447.0h0M1234.4 458.4h0M1237.9 472.9h0M1241.6 467.9h0M1245.2 479.0h0M1248.4 487.3h0M1251.6 540.4h0M1254.5 515.8h0M1257.9 519.1h0M1260.5 558.1h0M1263.4 487.8h0M1265.7 517.5h0M1268.4 488.1h0M1270.6 453.6h0M1274.2 463.0h0M1277.0 419.1h0M1280.7 438.8h0M1283.9 392.0h0M1287.6 402.3h0M1290.8 447.8h0M1294.1 397.8h0M1296.8 481.3h0M1299.0 430.0h0M1302.5 479.7h0M1305.5 454.1h0M1309.0 466.2h0M1312.3 486.5h0M1315.2 458.3h0M1318.3 497.5h0M1320.8 473.0h0M1323.3 460.7h0M1327.0 494.8h0M1329.8 460.1h0M1333.1 484.6h0M1336.4 505.4h0M1339.5 469.1h0M1342.7 495.2h0M1345.9 454.8h0M1349.0 450.1h0M1352.8 478.6h0M1355.7 461.3h0M1357.9 514.5h0M1361.1 453.7h0" stroke="#5a39a8" stroke-opacity="0.85" stroke-width="9.5" stroke-linecap="round" fill="none"/>
<path d="M321.9 451.0h0M325.6 496.3h0M327.8 456.3h0M331.5 451.7h0M334.1 490.5h0M337.8 462.0h0M340.7 398.2h0M345.0 458.7h0M348.8 448.1h0M352.5 465.1h0M355.5 470.9h0M358.2 460.1h0M361.5 471.0h0M364.2 485.3h0M367.9 438.7h0M371.6 466.8h0M374.0 484.9h0M376.6 446.2h0M380.4 464.0h0M383.5 444.0h0M387.1 482.2h0M389.6 472.4h0M392.8 456.2h0M396.0 477.7h0M399.6 443.6h0M403.2 465.5h0M406.1 449.9h0M409.7 485.5h0M412.1 442.1h0M415.2 452.8h0M417.8 467.7h0M420.2 455.0h0M423.1 472.0h0M426.5 456.8h0M429.9 465.5h0M433.5 444.6h0M436.1 477.8h0M438.9 450.4h0M441.7 480.3h0M445.3 448.9h0M447.9 480.5h0M450.5 440.6h0M452.9 492.0h0M455.4 451.7h0M458.8 475.3h0M462.3 431.7h0M465.7 476.7h0M468.9 460.9h0M472.7 434.6h0M476.0 478.3h0M478.3 438.4h0M481.3 463.6h0M483.6 443.3h0M487.3 453.2h0M489.6 479.5h0M491.9 444.1h0M494.6 487.9h0M498.4 474.7h0M500.9 453.0h0M504.1 490.4h0M506.3 456.7h0M509.1 477.5h0M511.8 447.2h0M515.3 453.8h0M518.0 472.6h0M521.4 477.7h0M524.6 458.7h0M527.9 473.1h0M530.5 458.1h0M533.2 480.7h0M535.8 447.8h0M538.5 487.9h0M541.0 454.1h0M544.3 480.1h0M546.8 448.5h0M550.3 490.0h0M552.7 442.6h0M556.1 488.9h0M558.9 490.8h0M561.8 459.6h0M564.6 477.1h0M567.1 461.3h0M570.7 499.6h0M573.4 460.6h0M576.6 505.2h0M579.6 482.3h0M582.0 487.6h0M584.5 522.9h0M587.2 511.9h0M590.0 542.2h0M593.2 539.6h0M595.6 570.6h0M599.0 568.6h0M601.9 595.0h0M604.9 581.6h0M607.2 586.4h0M610.3 596.4h0M612.0 987.0h0M616.8 629.6h0M619.0 609.2h0M622.4 626.7h0M624.8 599.8h0M627.0 675.0h0M631.2 572.7h0M633.4 599.9h0M636.2 540.8h0M638.5 556.7h0M642.0 496.2h0M644.6 501.6h0M648.2 445.2h0M651.6 499.0h0M654.5 470.2h0M658.0 508.9h0M661.3 489.7h0M664.0 542.3h0M666.5 527.2h0M670.1 577.3h0M673.7 556.3h0M677.1 561.4h0M679.8 570.6h0M683.3 560.4h0M686.6 576.0h0M689.9 599.0h0M692.9 598.9h0M696.5 617.4h0M700.0 620.0h0M702.7 608.5h0M706.0 569.1h0M709.4 588.1h0M712.2 549.6h0M714.5 563.9h0M717.3 543.6h0M720.7 524.9h0M724.3 531.1h0M727.0 500.7h0M729.8 515.7h0M732.2 518.5h0M734.6 482.3h0M737.4 516.7h0M740.2 465.6h0M742.7 491.9h0M746.3 473.2h0M749.2 500.7h0M752.6 454.5h0M754.9 482.2h0M757.1 503.4h0M760.3 453.5h0M763.6 481.4h0M766.0 463.1h0M769.3 492.0h0M772.0 468.3h0M775.7 492.1h0M778.2 463.1h0M781.7 487.3h0M785.1 470.7h0M788.5 493.8h0M791.2 457.9h0M793.5 480.3h0M797.1 471.2h0M800.4 492.3h0M804.0 466.0h0M806.9 501.3h0M809.4 454.4h0M812.4 498.5h0M814.9 474.0h0M818.6 469.9h0M820.9 446.4h0M824.4 469.5h0M827.1 498.4h0M829.3 468.7h0M831.6 455.6h0M834.9 490.9h0M838.2 466.0h0M841.2 493.0h0M844.3 461.9h0M846.8 489.6h0M849.4 465.0h0M852.7 491.1h0M856.4 504.0h0M859.5 446.5h0M862.7 488.7h0M865.9 460.6h0M869.5 491.1h0M873.3 444.3h0M876.1 459.2h0M879.7 447.5h0M882.5 479.3h0M886.2 457.1h0M889.4 480.1h0M892.4 463.8h0M896.2 477.8h0M898.6 489.5h0M901.7 465.0h0M904.0 467.2h0M906.2 451.2h0M908.9 475.1h0M911.8 446.9h0M915.5 492.1h0M918.2 450.0h0M920.6 495.1h0M923.6 454.5h0M927.0 485.3h0M929.8 459.6h0M932.8 480.7h0M936.2 458.3h0M938.8 484.1h0M942.3 476.5h0M945.3 452.6h0M948.4 476.7h0M952.0 454.4h0M955.1 489.1h0M958.4 459.9h0M960.7 483.6h0M964.1 460.7h0M967.7 485.7h0M971.3 466.4h0M974.0 466.6h0M976.5 490.5h0M980.2 505.0h0M983.3 455.4h0M986.3 493.7h0M989.8 454.9h0M993.6 497.7h0M995.9 456.9h0M999.6 463.9h0M1001.9 514.3h0M1005.1 464.0h0M1008.0 493.8h0M1011.3 484.6h0M1014.0 502.2h0M1016.8 453.1h0M1020.1 479.7h0M1022.6 455.9h0M1025.7 501.6h0M1029.5 466.8h0M1032.5 499.2h0M1035.7 460.6h0M1039.2 483.9h0M1042.4 464.0h0M1045.0 492.5h0M1047.3 464.4h0M1050.0 496.3h0M1052.7 482.5h0M1056.2 441.9h0M1058.9 492.3h0M1062.4 486.6h0M1065.7 455.2h0M1068.7 444.7h0M1071.8 490.0h0M1074.0 466.7h0M1076.8 466.3h0M1079.1 494.3h0M1081.9 460.6h0M1085.6 480.2h0M1088.4 455.1h0M1091.3 490.9h0M1095.0 454.4h0M1098.0 478.5h0M1101.6 482.1h0M1104.7 455.9h0M1108.2 470.7h0M1110.5 438.7h0M1114.1 483.2h0M1117.4 484.9h0M1120.1 444.8h0M1123.8 481.7h0M1127.6 439.2h0M1130.8 450.7h0M1134.3 457.3h0M1137.5 488.9h0M1140.5 445.8h0M1143.1 472.0h0M1146.5 444.9h0M1149.9 445.8h0M1152.7 491.6h0M1155.2 453.3h0M1157.6 493.5h0M1160.7 450.1h0M1163.9 478.1h0M1167.4 455.0h0M1171.0 488.0h0M1174.4 445.5h0M1177.2 477.2h0M1179.9 454.2h0M1182.8 444.9h0M1185.4 472.7h0M1188.2 460.2h0M1190.5 492.2h0M1193.5 462.3h0M1196.3 482.4h0M1199.8 452.9h0M1203.0 485.2h0M1205.9 463.4h0M1209.0 493.7h0M1212.4 448.0h0M1214.6 493.4h0M1218.4 486.3h0M1221.8 452.5h0M1225.0 494.0h0M1228.6 459.4h0M1231.9 496.2h0M1235.3 463.0h0M1238.0 492.4h0M1240.9 469.8h0M1243.1 522.4h0M1246.1 488.4h0M1248.4 530.6h0M1250.8 500.3h0M1253.7 544.4h0M1257.2 472.0h0M1260.7 541.0h0M1263.7 484.7h0M1267.2 508.6h0M1270.5 429.2h0M1273.8 471.3h0M1277.0 418.6h0M1279.4 469.1h0M1284.4 382.7h0M1286.1 434.8h0M1289.2 405.4h0M1292.7 455.2h0M1295.7 465.1h0M1299.0 406.0h0M1301.7 493.1h0M1304.8 445.5h0M1307.8 482.4h0M1310.0 454.3h0M1313.3 505.1h0M1316.2 457.5h0M1318.9 500.7h0M1321.8 457.0h0M1325.5 481.2h0M1328.7 468.1h0M1331.7 482.3h0M1334.0 465.7h0M1337.5 465.0h0M1341.2 475.3h0M1344.2 444.4h0M1347.4 483.6h0M1349.7 446.0h0M1352.4 476.3h0M1355.8 461.5h0M1358.6 479.0h0M1361.4 510.7h0" stroke="#85b052" stroke-opacity="0.85" stroke-width="9.5" stroke-linecap="round" fill="none"/>
<path d="M321.5 454.5h0M324.8 468.7h0M328.5 454.4h0M332.2 461.7h0M335.3 455.1h0M338.4 469.8h0M341.6 454.1h0M344.6 454.4h0M347.6 469.4h0M351.0 460.7h0M353.6 445.7h0M355.9 470.5h0M359.4 448.2h0M362.1 462.4h0M365.0 438.3h0M368.7 466.5h0M372.4 454.4h0M375.3 436.3h0M377.6 464.2h0M380.5 430.9h0M384.2 459.6h0M387.3 439.7h0M391.1 460.4h0M394.5 427.0h0M397.5 451.4h0M401.2 462.2h0M404.3 444.2h0M407.6 461.6h0M410.5 426.2h0M412.8 450.0h0M415.4 447.3h0M417.6 439.2h0M421.2 455.3h0M423.5 435.7h0M427.1 461.8h0M430.2 435.1h0M433.2 461.5h0M436.8 455.0h0M439.3 440.2h0M441.6 465.2h0M444.3 448.3h0M447.5 434.1h0M450.5 453.3h0M453.5 437.2h0M456.8 454.3h0M459.8 441.6h0M463.2 447.8h0M467.0 429.9h0M470.8 436.0h0M473.3 450.2h0M476.5 465.0h0M479.2 432.9h0M481.5 453.6h0M484.9 436.1h0M488.7 468.7h0M492.0 464.5h0M495.5 440.2h0M498.5 458.3h0M501.4 452.9h0M504.6 464.1h0M507.6 442.7h0M511.2 473.6h0M513.6 458.1h0M516.0 450.7h0M519.0 465.9h0M521.2 437.6h0M523.4 464.3h0M526.8 439.0h0M529.6 476.4h0M531.9 447.6h0M535.2 466.6h0M538.4 448.3h0M542.0 458.2h0M545.4 444.3h0M548.0 459.9h0M550.7 474.9h0M554.1 440.3h0M557.1 468.0h0M560.0 459.4h0M563.6 447.2h0M567.3 475.3h0M570.5 451.1h0M573.9 473.1h0M576.1 437.3h0M579.7 447.0h0M582.9 443.0h0M585.1 477.0h0M587.4 459.2h0M590.0 476.1h0M593.3 453.8h0M595.9 446.9h0M599.4 503.1h0M602.3 483.4h0M605.4 509.1h0M607.8 511.6h0M610.2 548.6h0M613.5 509.9h0M615.7 561.7h0M619.4 525.4h0M622.9 557.1h0M626.3 516.4h0M630.1 488.7h0M633.9 507.6h0M637.5 464.5h0M641.1 482.5h0M643.6 423.9h0M646.7 464.8h0M649.0 436.9h0M651.3 462.4h0M653.7 427.3h0M657.5 474.9h0M661.2 475.8h0M664.1 445.9h0M666.9 461.2h0M670.0 434.4h0M672.4 467.0h0M676.2 466.1h0M679.3 451.2h0M683.0 464.0h0M685.2 451.7h0M687.9 468.8h0M690.9 451.1h0M694.6 445.6h0M697.6 466.3h0M699.8 442.2h0M703.2 443.8h0M706.4 445.9h0M709.1 471.5h0M712.6 452.7h0M714.8 471.9h0M717.2 447.5h0M720.9 474.5h0M724.1 478.7h0M727.3 456.3h0M731.0 474.0h0M733.9 462.9h0M737.4 483.2h0M740.9 461.9h0M744.4 486.1h0M747.7 446.2h0M750.1 473.7h0M752.4 458.9h0M754.6 479.8h0M756.9 460.1h0M760.1 457.0h0M763.0 483.0h0M766.4 458.1h0M769.1 436.0h0M772.0 452.8h0M775.5 474.3h0M778.2 449.2h0M781.9 482.2h0M785.1 441.2h0M788.5 468.3h0M790.8 454.7h0M793.4 447.5h0M795.8 471.9h0M799.1 461.9h0M802.4 461.2h0M805.6 469.2h0M808.3 451.2h0M811.9 483.5h0M815.1 457.4h0M818.2 479.8h0M821.2 450.1h0M824.8 471.4h0M827.2 457.4h0M830.1 476.3h0M833.1 457.6h0M836.9 473.8h0M840.4 456.7h0M843.7 478.3h0M846.9 458.0h0M850.2 470.1h0M853.9 455.0h0M857.4 471.3h0M861.1 450.3h0M863.4 472.4h0M865.9 446.7h0M868.4 471.2h0M871.8 443.1h0M874.9 468.9h0M878.5 441.9h0M881.4 463.8h0M883.7 452.0h0M887.1 464.8h0M890.8 443.4h0M894.3 451.5h0M897.8 462.9h0M901.3 451.4h0M904.0 474.1h0M906.6 457.1h0M909.5 475.6h0M913.3 451.2h0M915.7 473.1h0M919.1 448.2h0M922.1 467.5h0M925.9 454.9h0M929.2 475.8h0M931.6 443.7h0M935.1 462.4h0M937.3 447.8h0M941.1 460.5h0M944.6 446.1h0M947.5 483.4h0M950.2 453.6h0M953.1 472.9h0M956.5 451.9h0M960.0 474.9h0M963.0 450.9h0M965.4 469.8h0M969.0 449.8h0M971.4 468.5h0M975.0 463.0h0M978.6 479.1h0M981.2 450.9h0M983.6 462.9h0M986.2 486.0h0M988.8 457.9h0M992.4 480.8h0M995.7 464.0h0M998.8 485.6h0M1002.2 456.5h0M1006.0 477.7h0M1008.8 462.3h0M1012.3 472.8h0M1015.9 458.9h0M1019.5 473.3h0M1022.4 452.7h0M1025.9 467.5h0M1029.2 457.3h0M1031.6 446.0h0M1034.5 476.2h0M1037.2 464.0h0M1040.6 446.4h0M1044.0 466.5h0M1046.3 453.6h0M1049.4 445.9h0M1052.9 467.3h0M1055.6 450.2h0M1058.0 471.4h0M1060.9 456.7h0M1064.4 472.7h0M1068.0 457.8h0M1070.2 475.6h0M1073.8 452.6h0M1076.2 453.0h0M1078.5 465.3h0M1082.1 446.2h0M1085.9 473.2h0M1089.3 444.5h0M1092.1 458.2h0M1095.2 447.0h0M1098.9 465.3h0M1102.5 439.0h0M1105.3 460.3h0M1108.0 449.0h0M1110.9 438.8h0M1114.3 437.5h0M1117.3 467.4h0M1120.6 446.1h0M1123.4 443.7h0M1125.7 468.4h0M1129.4 446.9h0M1132.7 471.0h0M1136.4 465.7h0M1139.7 446.5h0M1142.2 463.2h0M1144.6 452.3h0M1147.9 460.2h0M1151.5 473.3h0M1154.5 447.9h0M1157.8 472.2h0M1160.5 445.1h0M1163.1 466.2h0M1166.0 443.0h0M1168.8 464.0h0M1172.4 451.1h0M1175.5 468.0h0M1178.6 465.8h0M1182.3 446.1h0M1185.6 465.5h0M1189.0 453.2h0M1191.2 443.6h0M1193.9 470.8h0M1196.9 454.1h0M1199.7 443.1h0M1202.9 467.0h0M1205.3 448.5h0M1208.9 474.5h0M1212.3 473.6h0M1215.1 454.9h0M1217.8 470.0h0M1220.5 451.1h0M1223.2 490.0h0M1225.6 463.5h0M1228.1 461.8h0M1230.7 454.3h0M1233.2 474.0h0M1235.7 482.0h0M1238.9 471.5h0M1242.3 484.4h0M1245.1 467.1h0M1248.7 516.7h0M1251.9 500.1h0M1254.7 540.5h0M1258.1 496.8h0M1261.6 526.9h0M1264.7 491.2h0M1267.0 460.1h0M1270.3 472.7h0M1273.8 419.7h0M1276.2 444.4h0M1279.7 395.6h0M1282.3 439.2h0M1285.1 401.3h0M1288.6 445.8h0M1291.9 418.9h0M1295.2 449.7h0M1297.8 414.5h0M1300.2 448.8h0M1303.3 443.4h0M1305.5 458.9h0M1308.2 446.9h0M1310.6 478.2h0M1314.1 448.4h0M1316.5 447.3h0M1319.0 447.1h0M1322.1 475.3h0M1325.0 448.3h0M1327.5 451.4h0M1330.6 450.1h0M1333.6 476.7h0M1337.0 455.0h0M1339.8 463.7h0M1343.0 439.3h0M1346.3 471.9h0M1349.3 444.8h0M1352.5 463.0h0M1354.9 446.5h0M1357.3 467.4h0M1361.1 447.4h0M1364.3 470.4h0" stroke="#aa9bd6" stroke-opacity="0.85" stroke-width="9.5" stroke-linecap="round" fill="none"/>
<path d="M320.7 446.4L322.8 407.8L326.6 454.6L329.8 513.1L333.4 447.9L337.1 475.9L340.0 460.9L343.2 447.3L346.9 463.4L350.1 477.6L352.4 432.8L354.8 490.0L357.1 480.5L360.9 466.1L363.7 461.6L367.5 483.4L370.6 456.3L374.0 483.5L376.2 450.9L378.5 488.5L381.9 480.5L383.8 524.0L387.9 488.9L391.3 470.3L394.2 483.8L397.0 525.0L400.0 484.3L403.6 469.2L406.3 487.4L409.2 536.0L412.8 464.0L416.2 493.2L418.8 523.8L422.4 497.2L425.1 487.4L427.8 450.1L430.3 492.3L433.8 491.1L435.3 404.7L438.8 502.3L441.5 452.1L444.2 507.1L447.0 448.8L449.9 483.0L452.6 327.5L455.7 445.8L457.4 354.6L461.8 450.8L464.0 525.5L466.0 570.7L470.7 474.3L473.0 435.2L476.6 477.4L479.4 515.8L483.2 489.2L486.3 600.6L488.8 445.6L491.3 475.5L494.6 457.8L497.7 478.1L501.2 555.1L503.2 478.2L506.1 442.3L509.1 471.6L512.7 455.7L516.2 471.1L519.6 457.3L522.7 465.5L525.3 498.3L528.9 468.3L532.3 446.0L535.7 482.6L538.5 447.6L541.7 494.8L544.1 443.8L547.0 481.2L550.1 455.6L551.5 316.3L555.2 504.8L557.6 496.3L560.4 445.4L563.5 313.2L566.7 498.1L569.8 451.1L573.4 492.8L576.6 454.5L578.9 494.2L582.5 447.1L585.1 486.4L588.4 491.9L591.8 501.6L595.2 454.0L597.7 495.5L600.4 433.6L603.7 481.2L605.9 430.0L608.4 493.2L610.7 441.2L613.8 338.3L616.0 443.4L618.6 486.0L621.2 442.3L626.0 400.7L627.3 451.4L630.2 522.2L633.4 546.0L636.0 600.0L639.7 506.4L643.1 579.7L646.0 548.0L648.8 558.1L651.7 608.9L654.0 575.0L658.0 530.0L661.1 496.7L663.6 574.5L666.2 505.5L669.3 519.8L672.2 469.7L675.3 514.4L677.6 462.8L680.2 523.6L683.5 502.6L686.4 454.9L689.3 454.6L691.6 544.8L694.2 467.7L696.6 496.7L699.9 454.6L702.6 494.0L705.3 457.2L708.8 486.0L711.1 500.3L714.8 470.0L717.1 485.8L720.0 476.8L723.6 489.2L726.7 542.4L729.6 503.6L732.6 486.7L735.5 466.2L737.9 464.2L741.6 481.5L744.3 442.6L747.3 500.6L749.8 454.7L753.5 486.9L757.3 466.7L760.6 491.4L764.4 465.6L766.7 450.5L770.5 492.3L772.9 454.4L776.0 470.8L778.4 501.7L782.1 502.5L785.1 464.1L788.5 493.4L792.1 465.3L795.8 526.3L798.2 505.4L801.2 479.0L804.4 498.9L807.5 461.6L811.3 491.2L814.5 461.3L818.1 536.2L821.7 480.9L824.5 500.0L827.8 474.9L831.1 500.0L834.3 537.5L837.6 504.8L840.0 494.6L842.5 458.9L844.7 490.1L847.6 465.6L850.9 508.9L853.9 506.4L857.0 476.7L859.3 499.1L862.2 500.0L865.3 476.2L868.5 466.5L871.0 499.4L873.5 522.8L876.1 483.9L879.6 499.9L882.2 472.5L884.5 587.0L887.8 476.5L890.7 508.2L893.4 469.3L896.1 500.5L899.5 491.3L902.5 472.2L905.1 503.9L908.7 458.1L910.9 501.2L913.5 465.8L916.2 487.0L919.3 475.0L921.8 463.7L924.6 525.9L927.3 484.4L929.8 527.8L933.2 463.5L935.7 485.4L939.1 458.4L942.1 493.9L944.7 462.8L947.5 461.9L949.9 496.8L953.0 461.6L956.6 483.1L959.5 515.1L961.8 489.2L964.6 466.3L969.0 552.0L970.7 522.1L973.3 495.3L976.2 544.5L979.3 465.7L982.1 483.6L985.8 474.0L989.4 480.7L992.0 470.2L994.3 486.5L997.7 449.9L1001.5 470.2L1004.8 512.4L1007.8 463.3L1010.7 489.8L1013.9 463.8L1016.5 519.0L1019.9 456.3L1022.4 492.9L1025.4 462.4L1028.6 454.3L1032.0 472.4L1035.1 469.9L1037.6 501.3L1041.2 477.6L1045.0 486.7L1048.7 459.5L1051.8 494.4L1055.5 451.2L1057.9 540.9L1060.0 543.0L1063.8 459.6L1067.0 487.8L1069.7 466.4L1072.6 490.7L1076.0 475.2L1078.8 502.0L1081.0 466.6L1084.4 442.8L1087.8 484.2L1091.4 475.2L1094.4 499.9L1097.4 445.7L1100.1 530.1L1103.8 461.8L1107.1 473.6L1110.2 503.0L1112.7 461.2L1115.1 494.9L1117.8 537.3L1120.7 495.5L1123.8 459.5L1127.0 536.0L1129.5 473.9L1132.4 490.8L1135.5 489.9L1138.6 514.1L1141.6 502.2L1144.8 519.9L1147.5 483.9L1150.6 460.4L1153.2 484.3L1156.7 540.3L1160.3 457.4L1163.0 482.0L1165.8 505.9L1169.1 492.8L1172.1 452.1L1174.6 475.8L1177.8 448.4L1181.4 451.4L1184.2 490.2L1187.7 463.6L1190.8 490.9L1194.4 465.3L1197.7 493.9L1200.6 456.1L1204.3 492.1L1207.5 467.1L1210.1 498.0L1213.1 536.7L1215.4 498.3L1218.6 498.7L1220.9 529.7L1223.6 498.7L1226.5 440.8L1230.0 483.7L1232.9 455.6L1235.5 494.8L1238.0 481.0L1240.4 506.8L1243.6 424.4L1245.9 394.1L1248.9 433.5L1251.3 406.3L1254.7 345.0L1258.4 429.7L1261.8 441.3L1265.3 341.2L1269.8 287.0L1273.2 614.0L1275.3 621.8L1278.1 349.0L1281.1 616.0L1283.3 610.6L1287.3 529.0L1290.5 568.3L1292.9 503.8L1296.7 546.7L1299.8 487.6L1302.9 471.4L1305.5 505.4L1309.1 492.0L1311.8 550.6L1314.3 479.4L1318.0 481.2L1320.4 507.9L1323.1 464.2L1325.8 503.9L1328.3 448.5L1330.7 532.3L1334.3 533.3L1336.7 492.3L1339.6 494.2L1342.0 473.8L1344.8 506.0L1347.3 478.1L1350.6 392.8L1352.9 492.0L1356.0 460.4L1362.3 385.0" stroke="#2c64ba" stroke-width="2.4" fill="none" stroke-linejoin="round"/>
<path d="M321.0 469.2L323.5 430.4L326.0 429.4L329.3 451.2L333.0 424.0L335.4 456.4L338.1 451.0L340.7 441.9L344.3 415.1L346.6 454.4L349.3 423.0L352.3 433.3L354.8 445.1L357.8 474.2L360.8 441.6L363.9 416.9L367.7 437.2L370.5 467.4L373.1 434.2L376.0 474.9L378.5 427.9L381.8 463.1L385.0 438.0L388.5 458.1L391.3 443.6L394.4 474.1L397.2 429.6L401.0 433.8L403.6 465.2L407.2 437.3L409.6 467.7L412.5 447.4L415.9 465.3L418.5 445.9L421.6 428.5L424.3 446.5L427.0 475.6L429.6 435.0L433.3 477.5L436.2 442.6L438.6 435.9L441.0 437.3L444.3 482.3L446.5 445.2L449.3 475.6L451.6 427.8L454.5 469.1L457.4 449.2L461.0 439.1L464.0 453.3L467.0 451.8L470.2 472.6L473.9 443.9L477.3 464.8L479.6 444.2L482.7 463.2L486.0 398.0L489.0 465.6L491.3 441.3L493.9 475.2L497.3 431.6L500.4 458.8L503.6 446.2L507.3 465.9L509.8 443.1L512.0 433.4L515.2 474.5L518.0 432.2L521.0 460.4L523.3 448.3L525.7 463.6L529.3 466.4L531.6 429.7L534.2 458.5L537.5 437.5L540.7 461.3L543.7 440.6L546.6 435.2L549.2 490.3L552.9 469.0L556.2 427.4L558.6 438.0L563.5 308.4L565.2 418.7L568.8 463.9L571.1 425.2L573.8 467.8L577.1 376.6L580.8 464.2L584.1 431.9L587.8 479.7L591.4 452.1L594.1 455.4L596.9 507.4L600.3 470.3L603.9 509.8L607.1 496.4L610.7 684.8L613.5 524.1L616.8 549.4L620.0 503.2L623.3 549.3L626.0 528.4L629.5 482.8L632.1 517.6L635.6 454.7L638.9 478.1L641.8 394.6L644.8 310.7L647.4 319.5L649.9 379.8L653.2 357.0L656.2 391.5L658.1 418.7L661.3 451.0L664.8 441.3L667.7 470.1L671.0 462.5L673.5 479.2L675.9 496.0L679.1 455.2L681.5 446.0L685.0 471.0L688.6 512.7L691.5 497.9L695.1 483.8L697.9 475.2L701.4 481.2L704.5 496.3L707.0 471.3L710.0 488.7L712.2 474.2L714.8 480.3L718.1 468.1L720.6 433.5L723.9 458.6L727.7 446.3L730.9 482.9L733.3 448.0L737.0 412.0L739.6 450.1L742.2 471.6L744.4 443.6L748.0 491.2L750.2 453.5L753.0 472.9L755.6 444.4L758.2 481.5L761.8 453.1L765.3 479.7L768.6 458.8L770.9 481.2L774.2 450.9L777.6 475.1L780.2 443.4L783.3 472.1L787.0 453.3L790.1 399.6L792.9 467.9L795.9 466.9L799.6 439.6L802.5 479.0L805.5 452.3L808.3 444.4L810.9 427.9L814.4 432.3L817.7 468.1L820.1 443.5L823.0 449.3L826.6 481.1L829.0 453.3L832.1 464.7L835.3 455.0L838.2 471.2L840.6 444.6L844.1 453.4L846.7 479.2L849.5 474.5L851.9 446.7L854.8 484.3L858.3 455.4L860.8 470.8L864.4 445.7L867.1 477.7L870.5 459.7L873.0 450.6L875.7 483.8L878.8 443.5L881.5 498.3L884.0 411.0L887.2 468.7L890.0 450.2L892.8 470.0L895.6 431.7L898.1 474.7L900.6 446.0L904.3 479.9L907.8 457.3L910.5 462.4L914.0 477.0L917.8 462.8L920.1 486.3L922.7 458.0L925.3 492.4L927.8 450.0L931.3 473.5L933.8 453.3L936.0 479.2L938.7 451.2L941.0 487.5L943.9 453.2L946.6 478.7L949.3 464.4L952.9 474.6L956.5 455.1L958.8 474.3L962.1 484.1L965.7 451.5L968.8 445.3L971.7 446.5L975.4 447.4L978.0 471.5L980.9 449.3L983.5 481.6L985.8 445.7L989.3 474.4L992.9 454.9L995.4 448.2L1000.0 405.0L1001.4 449.0L1004.6 470.0L1007.6 451.1L1010.5 450.4L1013.4 481.7L1015.7 455.4L1017.9 484.9L1020.1 452.4L1023.8 468.6L1027.3 441.7L1030.5 463.0L1034.1 425.5L1037.0 449.4L1039.4 452.2L1042.9 475.3L1046.4 422.5L1049.8 463.2L1053.4 436.1L1056.7 473.2L1059.3 430.5L1061.8 475.8L1064.4 447.8L1067.5 460.7L1070.2 446.7L1073.7 417.6L1077.3 440.5L1080.2 471.6L1083.8 449.8L1087.0 442.2L1089.3 476.0L1092.1 446.0L1094.6 452.7L1097.9 480.6L1101.1 444.5L1104.2 446.4L1107.2 427.2L1110.4 472.0L1112.6 459.4L1115.5 467.9L1118.3 442.7L1120.9 456.1L1123.8 484.3L1127.4 446.0L1129.8 485.8L1132.9 448.9L1136.0 469.4L1139.0 477.8L1142.4 478.7L1144.9 479.7L1147.8 448.6L1151.4 474.1L1154.5 415.6L1157.1 472.3L1160.6 470.7L1163.7 442.8L1167.2 479.7L1170.8 454.6L1173.2 469.9L1176.0 449.8L1179.3 464.3L1181.5 439.1L1184.5 479.9L1188.3 442.7L1191.9 474.5L1194.9 450.5L1197.6 468.3L1201.2 438.9L1204.1 471.5L1206.7 452.7L1210.0 477.4L1212.6 451.6L1215.7 487.7L1218.9 434.1L1222.2 470.0L1224.5 452.0L1227.2 470.1L1230.2 434.2L1233.6 472.1L1237.0 452.5L1240.4 467.1L1243.5 463.3L1246.7 484.0L1249.8 477.5L1253.5 503.5L1257.0 473.3L1260.7 512.5L1263.6 466.1L1266.2 502.2L1268.8 449.3L1271.0 461.7L1274.0 418.8L1277.1 457.1L1279.7 402.7L1282.3 431.5L1286.1 403.1L1288.9 391.7L1293.4 397.0L1296.7 435.4L1299.2 416.2L1301.7 446.2L1304.3 436.8L1308.1 458.2L1311.7 455.6L1315.3 447.0L1318.0 473.3L1320.3 440.1L1323.7 469.4L1327.4 450.3L1329.7 482.9L1332.0 437.9L1335.1 447.6L1337.3 457.4L1340.5 490.0L1344.2 447.6L1346.8 480.8L1350.3 434.4L1353.3 488.8L1356.8 438.4L1360.6 485.8L1363.0 522.6" stroke="#b43530" stroke-width="2.4" fill="none" stroke-linejoin="round"/>
<path d="M321.4 448.1L323.9 466.9L327.4 436.2L330.4 477.1L333.2 467.0L335.9 448.9L338.5 478.8L341.6 445.7L345.1 447.1L347.5 463.7L350.3 423.2L353.1 468.9L355.3 447.3L357.9 432.9L361.5 477.3L364.0 437.5L366.5 442.9L369.1 432.9L372.6 463.0L375.4 440.0L379.0 464.5L381.7 439.9L384.1 473.9L387.5 441.6L390.7 474.3L394.2 439.7L397.9 475.6L400.2 469.0L402.5 470.0L405.3 444.3L407.9 467.7L411.3 473.5L414.7 447.1L418.2 466.7L420.5 473.0L423.5 432.4L426.1 455.3L429.3 438.2L431.5 437.3L435.1 469.5L438.4 454.5L441.3 437.4L443.5 451.1L446.5 422.1L449.9 468.1L453.6 479.1L457.2 461.0L460.8 426.4L463.7 456.9L466.4 434.7L469.0 456.3L471.6 438.5L474.9 444.1L478.5 477.4L480.7 440.6L484.3 472.4L487.8 441.8L490.9 459.4L493.2 465.0L495.9 439.1L498.5 453.8L500.9 443.4L504.3 429.5L507.2 466.6L510.9 418.9L513.6 463.5L516.7 436.5L519.5 467.7L522.9 440.2L526.2 457.3L529.6 442.8L533.4 459.7L537.1 443.5L540.6 436.2L543.6 427.9L546.8 476.8L549.7 451.0L553.4 464.8L556.7 451.5L560.2 462.2L562.8 440.4L565.1 469.8L567.9 464.6L570.5 438.0L573.2 466.1L575.9 450.9L578.2 463.1L581.1 436.1L584.4 472.0L587.1 476.4L589.7 453.8L593.5 485.5L595.9 455.0L599.2 522.3L602.5 469.9L606.1 529.2L609.4 511.1L612.7 867.0L614.9 529.9L618.1 590.8L620.5 506.2L623.2 556.6L625.7 514.7L628.6 553.0L631.7 502.8L634.2 512.0L637.1 457.2L639.4 465.0L642.5 388.7L644.5 317.5L649.4 387.6L651.6 398.6L655.2 365.0L658.1 383.7L661.2 468.6L664.4 418.3L668.2 465.2L670.9 444.7L674.5 474.5L677.1 447.6L680.5 470.5L683.2 498.4L685.5 466.2L688.0 501.0L691.2 471.0L694.2 467.2L697.3 489.5L700.8 461.9L703.3 501.9L706.8 485.9L709.4 457.3L711.7 476.5L715.5 448.7L718.3 481.1L720.8 456.7L723.9 475.4L727.5 451.1L730.6 447.6L733.9 446.4L736.1 473.8L739.6 429.1L743.1 454.1L745.7 482.7L748.1 433.6L750.3 478.9L753.3 457.0L756.3 475.6L760.0 441.3L762.6 450.5L765.6 479.4L769.1 457.7L771.5 483.0L774.0 450.4L776.3 472.3L779.8 479.7L783.0 453.5L785.4 485.1L787.7 447.0L791.5 477.8L795.0 454.6L797.6 475.3L800.8 462.3L803.7 486.6L807.3 455.2L810.4 485.5L813.7 465.9L816.1 482.4L819.1 463.3L822.6 482.9L826.0 456.0L828.9 451.5L831.5 453.6L834.6 460.9L837.5 446.1L841.2 452.7L843.4 475.3L846.1 454.6L848.6 478.8L851.2 454.5L854.2 468.4L857.2 472.7L860.4 460.4L863.7 495.0L866.1 448.4L869.7 449.8L873.2 472.5L875.6 451.8L878.5 487.8L881.7 445.9L885.3 488.3L887.9 448.8L890.7 475.8L893.0 456.9L895.2 486.0L898.4 445.9L900.7 486.3L904.4 473.7L906.6 442.2L909.3 474.3L911.8 441.6L914.4 454.6L917.5 467.2L920.5 436.0L924.1 463.6L927.3 445.4L930.2 461.7L933.7 433.9L936.5 467.2L938.8 434.3L942.4 470.6L944.7 452.9L947.9 471.9L950.6 448.6L953.3 465.3L955.6 449.2L958.6 467.3L962.3 454.3L965.1 481.1L968.1 431.2L971.7 448.8L974.5 442.5L978.3 471.4L981.0 447.8L983.3 484.1L986.2 456.1L988.9 473.6L992.0 450.8L995.7 478.4L998.5 446.1L1001.3 442.0L1004.2 440.9L1006.6 478.8L1009.8 466.8L1012.4 478.3L1015.8 449.1L1019.5 475.9L1023.2 458.0L1025.7 495.0L1028.8 453.0L1031.3 469.8L1034.6 456.9L1038.2 477.8L1041.2 461.5L1043.9 480.0L1046.7 453.6L1050.3 481.0L1052.6 453.0L1056.0 451.2L1059.6 482.8L1063.0 451.9L1065.4 484.7L1068.0 478.3L1070.7 460.7L1073.6 482.3L1076.1 459.1L1078.9 471.2L1081.6 476.4L1084.1 452.9L1087.6 473.5L1091.0 437.8L1094.2 454.3L1097.5 467.6L1100.1 439.2L1102.3 454.8L1105.5 480.8L1108.7 431.4L1111.0 481.2L1113.3 429.9L1116.5 472.0L1120.2 452.4L1122.6 469.1L1126.1 441.5L1128.9 440.9L1131.3 480.1L1134.0 430.6L1137.5 471.4L1140.8 444.5L1144.2 445.1L1147.2 436.5L1150.9 471.0L1154.4 437.7L1157.3 463.7L1159.5 433.8L1161.8 472.5L1165.2 434.4L1167.4 460.4L1170.8 449.2L1173.5 464.3L1176.1 432.1L1178.6 465.9L1181.3 468.3L1183.6 448.4L1187.2 467.0L1189.9 469.4L1193.4 448.0L1195.8 460.3L1198.3 447.2L1200.5 469.2L1203.5 443.8L1206.3 453.5L1208.9 477.7L1211.2 449.1L1213.7 467.0L1216.1 476.9L1218.3 451.8L1221.8 453.2L1224.6 475.6L1227.9 441.4L1230.6 474.9L1233.8 453.1L1236.1 475.0L1239.0 450.0L1242.1 482.2L1245.4 471.4L1248.7 454.1L1253.6 544.0L1255.6 477.8L1259.3 514.7L1262.8 469.4L1265.9 456.2L1269.0 453.3L1272.4 474.8L1275.0 415.7L1277.5 447.0L1281.3 401.6L1284.0 459.8L1286.8 405.3L1290.5 403.5L1293.9 443.5L1296.9 426.5L1299.8 475.5L1302.8 448.1L1305.7 475.7L1309.1 459.5L1311.4 483.9L1314.0 466.6L1316.5 473.9L1319.2 455.7L1322.2 474.9L1325.5 470.3L1328.2 458.4L1331.7 472.6L1334.5 473.1L1337.8 447.3L1341.0 478.7L1344.5 447.3L1348.0 473.0L1350.3 436.0L1352.8 480.3L1355.9 448.1L1359.0 476.8L1362.0 446.9" stroke="#75b3ee" stroke-width="2.4" fill="none" stroke-linejoin="round"/>
<path d="M321.3 459.5L323.5 481.8L327.0 471.1L330.1 481.7L332.7 491.9L336.1 452.3L338.9 494.2L341.3 454.8L343.6 491.1L347.3 445.7L350.9 463.1L353.2 488.9L355.8 441.3L358.2 482.0L361.6 444.1L364.7 477.1L367.5 469.0L370.1 453.7L373.3 487.4L376.5 450.8L380.0 471.1L383.6 441.4L387.2 490.3L390.9 452.0L394.2 483.9L396.8 448.0L399.5 487.5L403.2 458.2L406.0 447.9L408.2 461.5L411.0 485.3L413.7 474.2L417.4 460.8L420.1 475.5L423.6 458.3L427.0 483.5L429.9 478.4L432.8 456.5L435.8 522.8L439.5 433.9L442.2 478.9L444.5 436.1L447.6 466.0L450.4 453.2L452.1 533.5L457.4 551.5L459.2 486.7L462.7 439.9L465.9 479.3L468.3 459.8L471.0 474.7L474.0 457.8L477.4 480.3L479.9 503.1L482.4 459.8L485.2 491.1L488.1 484.8L490.6 454.3L494.3 484.4L497.8 446.4L500.6 484.1L504.1 465.7L507.4 477.7L511.0 448.9L514.6 451.7L518.1 485.3L520.9 464.1L523.9 474.8L527.5 455.6L530.7 475.4L533.6 445.1L536.7 477.3L539.6 459.2L542.5 487.8L544.7 433.5L547.5 513.3L550.6 509.1L553.5 467.3L556.4 500.7L559.0 485.3L562.4 462.5L565.3 482.6L568.7 443.3L572.3 480.7L575.8 448.4L578.6 505.2L582.4 472.9L585.2 538.5L587.9 501.7L590.2 558.1L593.6 543.5L595.9 588.8L599.6 563.2L602.4 609.3L605.0 571.5L607.8 624.3L612.0 706.0L613.5 592.9L616.8 637.9L619.7 616.3L622.9 608.5L625.9 607.4L629.0 640.3L631.5 602.2L635.0 609.5L638.5 555.7L641.7 538.9L645.4 456.6L647.6 499.5L650.2 466.3L653.4 498.3L655.8 520.5L658.4 480.5L661.9 531.4L665.6 535.7L668.6 564.2L671.6 556.8L674.9 568.2L677.6 584.4L681.1 563.3L684.8 575.3L688.5 581.4L691.0 615.5L694.3 616.9L696.9 593.8L699.4 600.2L702.2 617.4L705.7 588.0L708.5 585.5L711.7 587.2L714.2 594.4L718.0 562.1L720.8 541.3L723.4 546.0L726.2 514.6L728.4 516.6L731.5 526.6L734.7 482.8L738.4 526.2L741.3 484.3L743.7 509.6L746.0 476.8L748.5 506.1L751.0 468.8L754.6 508.1L757.7 468.3L761.0 487.2L764.7 448.3L768.1 492.6L770.8 464.4L773.7 503.9L777.4 457.3L780.7 523.2L783.5 455.1L785.7 506.7L789.5 471.8L792.3 487.2L796.1 457.0L799.5 492.5L802.6 471.8L805.1 462.4L807.4 507.0L810.4 470.4L813.6 507.3L817.2 459.0L820.4 500.9L823.7 474.0L827.2 475.6L830.9 503.6L833.7 471.4L837.3 481.3L839.8 454.8L842.6 497.5L846.3 515.1L848.8 494.3L852.4 503.4L855.4 478.9L858.8 453.6L861.9 497.0L864.7 464.4L867.6 503.0L870.7 462.9L874.3 459.8L877.8 511.3L880.4 467.9L883.4 510.8L887.0 449.2L890.1 496.6L893.6 470.4L896.0 483.3L899.7 452.6L903.5 488.8L905.8 457.4L908.8 470.4L912.1 489.1L914.3 464.5L917.1 480.9L919.6 494.6L922.3 461.8L925.9 496.7L929.5 459.7L932.4 493.3L934.8 463.1L938.6 480.2L941.0 465.5L944.4 488.2L946.8 494.1L949.9 456.1L953.3 511.4L956.0 464.2L958.8 487.7L962.0 502.9L964.3 457.7L967.5 509.2L970.5 476.8L974.3 497.0L977.6 477.7L980.4 510.2L984.0 476.1L987.4 493.5L990.0 499.9L993.1 467.7L996.5 470.7L999.0 517.4L1001.4 461.3L1004.0 502.4L1007.5 501.1L1010.7 491.7L1014.1 463.5L1017.8 484.7L1020.5 452.8L1024.0 492.8L1026.9 451.7L1029.3 491.4L1032.0 455.4L1034.6 490.1L1037.8 456.5L1041.5 483.5L1043.7 473.6L1046.9 497.6L1050.6 453.4L1054.0 498.4L1056.3 454.6L1059.8 496.6L1062.3 491.4L1064.5 453.8L1067.1 468.8L1069.4 496.6L1072.9 466.6L1075.2 476.6L1078.9 499.1L1081.3 485.2L1084.1 464.9L1086.3 515.6L1089.8 485.8L1092.9 463.3L1095.8 475.0L1098.5 498.1L1102.0 454.5L1105.2 479.7L1108.3 446.8L1111.0 474.1L1113.7 451.5L1116.6 485.2L1119.9 484.5L1122.9 465.9L1126.4 482.0L1129.8 453.7L1133.4 486.2L1136.2 490.3L1138.7 491.6L1142.4 495.1L1145.2 468.5L1148.0 497.0L1151.6 450.5L1154.3 500.1L1156.7 482.1L1159.6 448.7L1162.4 494.9L1164.8 452.0L1168.2 484.6L1171.6 466.1L1174.0 461.4L1177.5 482.5L1180.9 468.3L1184.5 495.3L1187.8 458.3L1190.2 462.1L1192.6 460.2L1195.5 462.1L1198.3 500.3L1201.7 455.7L1205.1 487.1L1208.8 454.3L1211.4 498.5L1214.0 472.9L1216.4 488.5L1220.0 466.0L1223.3 500.9L1226.2 503.2L1228.8 462.5L1232.5 515.9L1235.0 466.5L1237.4 502.5L1241.2 465.7L1244.0 524.3L1247.5 555.1L1250.6 481.0L1252.0 528.0L1256.3 486.7L1259.0 480.5L1261.5 565.9L1264.8 495.7L1268.2 505.9L1271.0 498.1L1273.6 431.5L1276.4 467.9L1279.8 422.4L1282.8 468.3L1285.3 393.6L1288.7 443.2L1291.4 482.4L1294.3 424.5L1298.0 467.1L1301.2 449.2L1303.5 469.1L1307.1 497.5L1310.1 457.7L1312.7 495.1L1315.7 458.8L1319.3 487.5L1323.0 458.1L1325.9 514.4L1329.0 449.0L1331.8 480.6L1335.2 464.1L1338.5 476.8L1341.4 461.7L1345.0 495.4L1348.7 459.0L1352.2 475.8L1356.0 458.3L1359.6 491.5L1361.9 493.6" stroke="#eca843" stroke-width="2.4" fill="none" stroke-linejoin="round"/>
<path d="M320.2 439.1L322.9 482.7L325.6 436.9L329.3 483.2L331.5 454.0L334.3 475.8L338.0 472.7L340.4 460.7L342.7 489.9L345.4 442.2L348.7 486.5L351.6 450.5L354.4 474.1L357.4 452.8L360.6 483.2L363.8 445.8L367.1 468.5L370.0 427.0L372.4 480.6L375.6 473.2L378.2 436.8L381.1 472.1L384.0 457.6L387.0 467.7L389.7 430.1L393.4 472.7L395.9 436.0L398.3 465.7L402.0 438.7L404.8 472.1L407.2 451.8L409.6 478.7L412.1 447.7L415.7 440.1L418.2 477.7L421.2 452.4L424.0 480.1L427.3 453.3L431.0 465.9L434.8 442.6L437.2 453.9L439.5 465.5L442.5 433.5L445.3 437.3L449.0 466.8L451.8 445.0L454.6 476.8L456.9 441.8L460.1 429.5L462.5 472.9L465.3 386.2L468.8 428.4L472.0 472.5L475.6 440.3L478.2 472.9L480.9 447.1L483.2 469.3L486.5 470.5L489.2 433.1L492.3 477.0L494.8 437.7L497.5 425.1L500.1 437.6L503.1 446.6L506.4 472.0L509.1 480.4L512.2 444.7L515.9 466.0L519.5 438.3L522.4 462.6L525.8 473.5L529.1 461.9L531.6 446.1L535.2 458.5L538.6 418.1L541.2 424.1L543.5 426.7L546.5 475.8L548.9 433.8L551.7 463.1L554.1 433.5L556.4 480.0L559.0 442.2L562.5 418.7L564.7 472.4L567.8 455.9L571.2 471.7L574.6 450.0L578.1 490.2L581.8 464.0L584.6 527.1L588.3 520.3L591.3 551.9L595.1 565.2L598.2 566.5L601.7 598.5L604.9 556.7L608.3 610.6L612.5 852.0L614.7 593.2L617.9 658.5L620.4 579.9L624.5 704.0L626.4 615.5L629.8 640.5L632.2 596.0L635.1 599.3L638.6 528.4L641.1 524.8L643.4 480.5L647.1 489.0L650.7 462.3L653.6 500.7L657.2 502.7L659.9 493.3L663.7 543.5L666.4 524.3L669.3 556.9L671.6 553.4L674.0 575.0L677.8 566.0L680.7 558.6L683.2 582.3L685.7 568.0L689.0 632.0L690.7 590.7L694.4 621.3L697.5 590.8L700.1 602.2L703.3 587.0L705.5 574.1L708.9 579.3L711.7 574.1L714.1 547.8L716.9 551.6L720.6 518.0L722.9 530.7L726.7 500.3L729.9 510.8L732.1 462.4L734.4 497.6L737.0 478.5L740.1 457.7L742.9 462.1L746.4 513.0L748.6 452.7L752.4 459.1L755.0 480.3L758.3 455.7L760.9 491.8L764.0 476.8L766.7 464.7L769.3 464.6L772.1 486.3L774.6 447.7L777.3 491.8L780.7 485.0L784.0 452.2L786.5 484.8L790.0 462.6L792.8 471.7L796.0 448.9L798.3 478.3L801.8 485.2L804.4 460.6L807.8 489.7L811.6 486.1L814.9 460.1L818.4 493.3L822.2 463.5L825.6 490.2L828.6 454.3L831.1 492.0L834.5 466.1L837.3 493.5L841.0 490.7L844.4 459.4L847.5 491.0L850.1 452.7L853.4 479.4L857.1 496.3L860.1 459.8L863.3 480.8L865.6 449.4L868.4 480.7L871.9 447.7L874.8 488.7L877.9 460.2L880.6 453.0L883.2 477.0L885.8 462.2L889.3 461.4L892.3 486.7L895.7 448.8L898.0 489.9L901.6 451.5L904.1 459.7L907.4 456.8L911.0 490.3L913.6 448.9L915.9 474.2L918.8 488.5L921.3 463.7L924.3 491.9L927.8 445.7L930.0 444.8L932.6 452.4L935.2 483.3L938.3 455.6L940.6 487.1L943.8 425.8L946.8 475.3L950.0 437.9L953.8 465.6L957.4 453.6L960.0 485.9L963.8 449.7L966.9 473.4L969.2 454.3L971.6 473.4L973.9 446.4L977.6 468.8L980.9 476.8L983.4 458.7L987.0 482.4L990.5 447.4L993.0 482.0L995.6 456.5L998.5 483.0L1001.7 447.6L1004.0 483.4L1006.5 453.6L1009.7 492.2L1013.2 454.1L1015.8 475.1L1018.0 446.3L1021.4 460.0L1024.5 482.1L1027.3 445.8L1030.4 481.5L1032.7 462.8L1034.9 460.2L1038.3 480.7L1041.7 472.8L1044.9 444.1L1047.5 490.5L1050.9 488.7L1053.1 480.2L1056.9 464.5L1060.2 462.1L1064.0 474.9L1067.3 457.6L1070.2 476.8L1072.6 453.3L1075.8 484.5L1078.5 450.7L1082.0 476.5L1084.5 459.1L1088.2 491.5L1091.5 462.4L1094.4 479.1L1097.4 458.1L1100.9 477.9L1103.6 464.0L1105.8 482.4L1108.8 447.3L1111.6 471.6L1114.1 458.0L1116.7 469.9L1119.1 440.7L1122.7 485.5L1126.1 455.9L1129.6 443.4L1132.7 468.1L1135.9 453.4L1138.7 473.3L1141.3 449.3L1144.7 460.6L1148.0 455.7L1151.3 477.9L1154.9 483.1L1158.0 490.3L1160.5 462.2L1163.3 483.1L1166.7 450.2L1169.5 501.1L1173.1 484.3L1175.5 448.5L1179.2 474.3L1181.6 448.7L1183.9 441.1L1186.0 414.0L1189.0 466.9L1191.2 481.1L1193.4 439.4L1197.0 453.8L1200.1 503.1L1202.8 436.4L1205.4 437.3L1208.7 472.1L1211.0 452.1L1214.8 481.4L1217.1 452.0L1220.0 480.8L1223.0 460.2L1225.9 480.9L1228.7 489.9L1231.7 447.0L1234.4 458.4L1237.9 472.9L1241.6 467.9L1245.2 479.0L1248.4 487.3L1251.6 540.4L1254.5 515.8L1257.9 519.1L1260.5 558.1L1263.4 487.8L1265.7 517.5L1268.4 488.1L1270.6 453.6L1274.2 463.0L1277.0 419.1L1280.7 438.8L1283.9 392.0L1287.6 402.3L1290.8 447.8L1294.1 397.8L1296.8 481.3L1299.0 430.0L1302.5 479.7L1305.5 454.1L1309.0 466.2L1312.3 486.5L1315.2 458.3L1318.3 497.5L1320.8 473.0L1323.3 460.7L1327.0 494.8L1329.8 460.1L1333.1 484.6L1336.4 505.4L1339.5 469.1L1342.7 495.2L1345.9 454.8L1349.0 450.1L1352.8 478.6L1355.7 461.3L1357.9 514.5L1361.1 453.7" stroke="#5a39a8" stroke-width="2.4" fill="none" stroke-linejoin="round"/>
<path d="M321.9 451.0L325.6 496.3L327.8 456.3L331.5 451.7L334.1 490.5L337.8 462.0L340.7 398.2L345.0 458.7L348.8 448.1L352.5 465.1L355.5 470.9L358.2 460.1L361.5 471.0L364.2 485.3L367.9 438.7L371.6 466.8L374.0 484.9L376.6 446.2L380.4 464.0L383.5 444.0L387.1 482.2L389.6 472.4L392.8 456.2L396.0 477.7L399.6 443.6L403.2 465.5L406.1 449.9L409.7 485.5L412.1 442.1L415.2 452.8L417.8 467.7L420.2 455.0L423.1 472.0L426.5 456.8L429.9 465.5L433.5 444.6L436.1 477.8L438.9 450.4L441.7 480.3L445.3 448.9L447.9 480.5L450.5 440.6L452.9 492.0L455.4 451.7L458.8 475.3L462.3 431.7L465.7 476.7L468.9 460.9L472.7 434.6L476.0 478.3L478.3 438.4L481.3 463.6L483.6 443.3L487.3 453.2L489.6 479.5L491.9 444.1L494.6 487.9L498.4 474.7L500.9 453.0L504.1 490.4L506.3 456.7L509.1 477.5L511.8 447.2L515.3 453.8L518.0 472.6L521.4 477.7L524.6 458.7L527.9 473.1L530.5 458.1L533.2 480.7L535.8 447.8L538.5 487.9L541.0 454.1L544.3 480.1L546.8 448.5L550.3 490.0L552.7 442.6L556.1 488.9L558.9 490.8L561.8 459.6L564.6 477.1L567.1 461.3L570.7 499.6L573.4 460.6L576.6 505.2L579.6 482.3L582.0 487.6L584.5 522.9L587.2 511.9L590.0 542.2L593.2 539.6L595.6 570.6L599.0 568.6L601.9 595.0L604.9 581.6L607.2 586.4L610.3 596.4L612.0 987.0L616.8 629.6L619.0 609.2L622.4 626.7L624.8 599.8L627.0 675.0L631.2 572.7L633.4 599.9L636.2 540.8L638.5 556.7L642.0 496.2L644.6 501.6L648.2 445.2L651.6 499.0L654.5 470.2L658.0 508.9L661.3 489.7L664.0 542.3L666.5 527.2L670.1 577.3L673.7 556.3L677.1 561.4L679.8 570.6L683.3 560.4L686.6 576.0L689.9 599.0L692.9 598.9L696.5 617.4L700.0 620.0L702.7 608.5L706.0 569.1L709.4 588.1L712.2 549.6L714.5 563.9L717.3 543.6L720.7 524.9L724.3 531.1L727.0 500.7L729.8 515.7L732.2 518.5L734.6 482.3L737.4 516.7L740.2 465.6L742.7 491.9L746.3 473.2L749.2 500.7L752.6 454.5L754.9 482.2L757.1 503.4L760.3 453.5L763.6 481.4L766.0 463.1L769.3 492.0L772.0 468.3L775.7 492.1L778.2 463.1L781.7 487.3L785.1 470.7L788.5 493.8L791.2 457.9L793.5 480.3L797.1 471.2L800.4 492.3L804.0 466.0L806.9 501.3L809.4 454.4L812.4 498.5L814.9 474.0L818.6 469.9L820.9 446.4L824.4 469.5L827.1 498.4L829.3 468.7L831.6 455.6L834.9 490.9L838.2 466.0L841.2 493.0L844.3 461.9L846.8 489.6L849.4 465.0L852.7 491.1L856.4 504.0L859.5 446.5L862.7 488.7L865.9 460.6L869.5 491.1L873.3 444.3L876.1 459.2L879.7 447.5L882.5 479.3L886.2 457.1L889.4 480.1L892.4 463.8L896.2 477.8L898.6 489.5L901.7 465.0L904.0 467.2L906.2 451.2L908.9 475.1L911.8 446.9L915.5 492.1L918.2 450.0L920.6 495.1L923.6 454.5L927.0 485.3L929.8 459.6L932.8 480.7L936.2 458.3L938.8 484.1L942.3 476.5L945.3 452.6L948.4 476.7L952.0 454.4L955.1 489.1L958.4 459.9L960.7 483.6L964.1 460.7L967.7 485.7L971.3 466.4L974.0 466.6L976.5 490.5L980.2 505.0L983.3 455.4L986.3 493.7L989.8 454.9L993.6 497.7L995.9 456.9L999.6 463.9L1001.9 514.3L1005.1 464.0L1008.0 493.8L1011.3 484.6L1014.0 502.2L1016.8 453.1L1020.1 479.7L1022.6 455.9L1025.7 501.6L1029.5 466.8L1032.5 499.2L1035.7 460.6L1039.2 483.9L1042.4 464.0L1045.0 492.5L1047.3 464.4L1050.0 496.3L1052.7 482.5L1056.2 441.9L1058.9 492.3L1062.4 486.6L1065.7 455.2L1068.7 444.7L1071.8 490.0L1074.0 466.7L1076.8 466.3L1079.1 494.3L1081.9 460.6L1085.6 480.2L1088.4 455.1L1091.3 490.9L1095.0 454.4L1098.0 478.5L1101.6 482.1L1104.7 455.9L1108.2 470.7L1110.5 438.7L1114.1 483.2L1117.4 484.9L1120.1 444.8L1123.8 481.7L1127.6 439.2L1130.8 450.7L1134.3 457.3L1137.5 488.9L1140.5 445.8L1143.1 472.0L1146.5 444.9L1149.9 445.8L1152.7 491.6L1155.2 453.3L1157.6 493.5L1160.7 450.1L1163.9 478.1L1167.4 455.0L1171.0 488.0L1174.4 445.5L1177.2 477.2L1179.9 454.2L1182.8 444.9L1185.4 472.7L1188.2 460.2L1190.5 492.2L1193.5 462.3L1196.3 482.4L1199.8 452.9L1203.0 485.2L1205.9 463.4L1209.0 493.7L1212.4 448.0L1214.6 493.4L1218.4 486.3L1221.8 452.5L1225.0 494.0L1228.6 459.4L1231.9 496.2L1235.3 463.0L1238.0 492.4L1240.9 469.8L1243.1 522.4L1246.1 488.4L1248.4 530.6L1250.8 500.3L1253.7 544.4L1257.2 472.0L1260.7 541.0L1263.7 484.7L1267.2 508.6L1270.5 429.2L1273.8 471.3L1277.0 418.6L1279.4 469.1L1284.4 382.7L1286.1 434.8L1289.2 405.4L1292.7 455.2L1295.7 465.1L1299.0 406.0L1301.7 493.1L1304.8 445.5L1307.8 482.4L1310.0 454.3L1313.3 505.1L1316.2 457.5L1318.9 500.7L1321.8 457.0L1325.5 481.2L1328.7 468.1L1331.7 482.3L1334.0 465.7L1337.5 465.0L1341.2 475.3L1344.2 444.4L1347.4 483.6L1349.7 446.0L1352.4 476.3L1355.8 461.5L1358.6 479.0L1361.4 510.7" stroke="#85b052" stroke-width="2.4" fill="none" stroke-linejoin="round"/>
<path d="M321.5 454.5L324.8 468.7L328.5 454.4L332.2 461.7L335.3 455.1L338.4 469.8L341.6 454.1L344.6 454.4L347.6 469.4L351.0 460.7L353.6 445.7L355.9 470.5L359.4 448.2L362.1 462.4L365.0 438.3L368.7 466.5L372.4 454.4L375.3 436.3L377.6 464.2L380.5 430.9L384.2 459.6L387.3 439.7L391.1 460.4L394.5 427.0L397.5 451.4L401.2 462.2L404.3 444.2L407.6 461.6L410.5 426.2L412.8 450.0L415.4 447.3L417.6 439.2L421.2 455.3L423.5 435.7L427.1 461.8L430.2 435.1L433.2 461.5L436.8 455.0L439.3 440.2L441.6 465.2L444.3 448.3L447.5 434.1L450.5 453.3L453.5 437.2L456.8 454.3L459.8 441.6L463.2 447.8L467.0 429.9L470.8 436.0L473.3 450.2L476.5 465.0L479.2 432.9L481.5 453.6L484.9 436.1L488.7 468.7L492.0 464.5L495.5 440.2L498.5 458.3L501.4 452.9L504.6 464.1L507.6 442.7L511.2 473.6L513.6 458.1L516.0 450.7L519.0 465.9L521.2 437.6L523.4 464.3L526.8 439.0L529.6 476.4L531.9 447.6L535.2 466.6L538.4 448.3L542.0 458.2L545.4 444.3L548.0 459.9L550.7 474.9L554.1 440.3L557.1 468.0L560.0 459.4L563.6 447.2L567.3 475.3L570.5 451.1L573.9 473.1L576.1 437.3L579.7 447.0L582.9 443.0L585.1 477.0L587.4 459.2L590.0 476.1L593.3 453.8L595.9 446.9L599.4 503.1L602.3 483.4L605.4 509.1L607.8 511.6L610.2 548.6L613.5 509.9L615.7 561.7L619.4 525.4L622.9 557.1L626.3 516.4L630.1 488.7L633.9 507.6L637.5 464.5L641.1 482.5L643.6 423.9L646.7 464.8L649.0 436.9L651.3 462.4L653.7 427.3L657.5 474.9L661.2 475.8L664.1 445.9L666.9 461.2L670.0 434.4L672.4 467.0L676.2 466.1L679.3 451.2L683.0 464.0L685.2 451.7L687.9 468.8L690.9 451.1L694.6 445.6L697.6 466.3L699.8 442.2L703.2 443.8L706.4 445.9L709.1 471.5L712.6 452.7L714.8 471.9L717.2 447.5L720.9 474.5L724.1 478.7L727.3 456.3L731.0 474.0L733.9 462.9L737.4 483.2L740.9 461.9L744.4 486.1L747.7 446.2L750.1 473.7L752.4 458.9L754.6 479.8L756.9 460.1L760.1 457.0L763.0 483.0L766.4 458.1L769.1 436.0L772.0 452.8L775.5 474.3L778.2 449.2L781.9 482.2L785.1 441.2L788.5 468.3L790.8 454.7L793.4 447.5L795.8 471.9L799.1 461.9L802.4 461.2L805.6 469.2L808.3 451.2L811.9 483.5L815.1 457.4L818.2 479.8L821.2 450.1L824.8 471.4L827.2 457.4L830.1 476.3L833.1 457.6L836.9 473.8L840.4 456.7L843.7 478.3L846.9 458.0L850.2 470.1L853.9 455.0L857.4 471.3L861.1 450.3L863.4 472.4L865.9 446.7L868.4 471.2L871.8 443.1L874.9 468.9L878.5 441.9L881.4 463.8L883.7 452.0L887.1 464.8L890.8 443.4L894.3 451.5L897.8 462.9L901.3 451.4L904.0 474.1L906.6 457.1L909.5 475.6L913.3 451.2L915.7 473.1L919.1 448.2L922.1 467.5L925.9 454.9L929.2 475.8L931.6 443.7L935.1 462.4L937.3 447.8L941.1 460.5L944.6 446.1L947.5 483.4L950.2 453.6L953.1 472.9L956.5 451.9L960.0 474.9L963.0 450.9L965.4 469.8L969.0 449.8L971.4 468.5L975.0 463.0L978.6 479.1L981.2 450.9L983.6 462.9L986.2 486.0L988.8 457.9L992.4 480.8L995.7 464.0L998.8 485.6L1002.2 456.5L1006.0 477.7L1008.8 462.3L1012.3 472.8L1015.9 458.9L1019.5 473.3L1022.4 452.7L1025.9 467.5L1029.2 457.3L1031.6 446.0L1034.5 476.2L1037.2 464.0L1040.6 446.4L1044.0 466.5L1046.3 453.6L1049.4 445.9L1052.9 467.3L1055.6 450.2L1058.0 471.4L1060.9 456.7L1064.4 472.7L1068.0 457.8L1070.2 475.6L1073.8 452.6L1076.2 453.0L1078.5 465.3L1082.1 446.2L1085.9 473.2L1089.3 444.5L1092.1 458.2L1095.2 447.0L1098.9 465.3L1102.5 439.0L1105.3 460.3L1108.0 449.0L1110.9 438.8L1114.3 437.5L1117.3 467.4L1120.6 446.1L1123.4 443.7L1125.7 468.4L1129.4 446.9L1132.7 471.0L1136.4 465.7L1139.7 446.5L1142.2 463.2L1144.6 452.3L1147.9 460.2L1151.5 473.3L1154.5 447.9L1157.8 472.2L1160.5 445.1L1163.1 466.2L1166.0 443.0L1168.8 464.0L1172.4 451.1L1175.5 468.0L1178.6 465.8L1182.3 446.1L1185.6 465.5L1189.0 453.2L1191.2 443.6L1193.9 470.8L1196.9 454.1L1199.7 443.1L1202.9 467.0L1205.3 448.5L1208.9 474.5L1212.3 473.6L1215.1 454.9L1217.8 470.0L1220.5 451.1L1223.2 490.0L1225.6 463.5L1228.1 461.8L1230.7 454.3L1233.2 474.0L1235.7 482.0L1238.9 471.5L1242.3 484.4L1245.1 467.1L1248.7 516.7L1251.9 500.1L1254.7 540.5L1258.1 496.8L1261.6 526.9L1264.7 491.2L1267.0 460.1L1270.3 472.7L1273.8 419.7L1276.2 444.4L1279.7 395.6L1282.3 439.2L1285.1 401.3L1288.6 445.8L1291.9 418.9L1295.2 449.7L1297.8 414.5L1300.2 448.8L1303.3 443.4L1305.5 458.9L1308.2 446.9L1310.6 478.2L1314.1 448.4L1316.5 447.3L1319.0 447.1L1322.1 475.3L1325.0 448.3L1327.5 451.4L1330.6 450.1L1333.6 476.7L1337.0 455.0L1339.8 463.7L1343.0 439.3L1346.3 471.9L1349.3 444.8L1352.5 463.0L1354.9 446.5L1357.3 467.4L1361.1 447.4L1364.3 470.4" stroke="#aa9bd6" stroke-width="2.4" fill="none" stroke-linejoin="round"/>
<path d="M322.9 927.1L323.0 925.7L322.9 925.6L323.0 923.2L322.9 921.1L323.2 920.9L322.7 918.2L323.2 916.9L322.4 917.2L323.4 916.6L323.0 914.5L322.4 911.9L322.5 911.5L322.6 909.3L322.9 907.6L323.2 907.4L323.0 906.3L323.1 904.9L322.7 903.5L323.4 903.6L322.9 901.0L323.9 900.4L324.2 897.5L325.3 896.4L325.4 897.1L326.2 899.6L326.7 901.1L327.7 902.7L327.6 901.4L328.4 904.0L328.6 903.7L328.9 902.6L329.4 898.9L329.3 899.4L329.6 896.3L330.3 897.3L330.1 893.7L330.2 892.4L330.6 892.9L331.1 890.9L331.7 888.6L331.9 887.2L331.9 885.8L332.1 884.7L332.9 885.4L333.2 882.3L333.0 880.8L333.5 881.1L334.2 877.8L333.7 876.8L334.1 876.9L334.5 874.9L334.6 875.7L335.7 876.5L336.3 878.2L336.8 879.9L337.4 882.8L338.3 883.1L338.2 883.4L339.1 885.6L339.7 887.9L339.3 887.5L340.3 890.1L340.6 889.9L340.5 893.0L340.3 893.1L341.4 893.4L341.4 895.2L341.7 896.5L341.5 898.7L342.2 898.9L342.2 901.0L342.3 901.2L343.3 903.8L343.0 905.2L343.3 907.3L343.7 906.2L343.9 908.7L344.5 909.3L344.7 911.6L345.8 912.3L345.9 915.2L346.2 915.8L346.0 915.7L346.8 917.9L347.8 915.4L348.5 915.9L348.8 912.9L349.5 912.9L349.9 911.7L350.9 912.4L351.0 913.0L351.8 915.9L352.1 917.1L352.9 918.5L353.2 918.5L353.8 921.1L354.3 921.1L354.5 922.5L355.2 922.1L355.7 920.2L356.6 918.8L357.3 916.2L358.2 917.2L358.3 915.2L359.1 913.3L359.4 912.6L359.9 910.5L360.0 908.3L360.1 906.8L359.9 906.7L360.4 905.9L361.1 904.4L360.4 902.1L361.2 900.9L361.0 899.3L361.7 899.8L362.1 897.3L362.1 895.7L362.1 894.0L362.8 894.3L362.5 893.2L362.6 891.1L363.0 888.6L363.6 889.1L363.9 887.5L363.7 885.6L363.7 883.7L364.0 882.9L364.5 880.9L364.8 880.7L365.5 878.6L365.4 879.0L365.2 875.3L365.5 876.1L366.3 874.4L366.8 872.0L366.5 870.0L366.6 869.8L367.1 869.5L367.2 866.4L367.9 866.3L368.4 865.0L369.0 864.2L368.5 862.5L368.8 860.7L369.4 858.2L369.4 858.7L369.8 856.2L370.3 856.0L370.8 854.5L371.1 852.6L370.7 852.7L371.4 850.3L372.0 852.7L372.1 851.9L372.9 854.5L373.0 855.2L373.6 857.8L373.6 859.3L373.8 859.8L374.8 861.3L375.0 862.4L375.6 862.6L376.1 865.9L376.3 866.1L376.7 866.8L376.6 869.5L377.0 868.8L377.7 871.3L377.4 872.5L377.8 874.6L378.3 875.9L379.0 876.4L379.5 877.3L379.0 878.0L379.8 880.3L380.0 882.4L380.0 884.0L379.8 885.3L380.4 884.7L380.8 886.2L380.8 888.3L381.1 890.2L381.1 890.1L381.8 892.7L382.0 892.4L381.8 895.6L381.7 895.9L382.2 897.1L381.9 898.6L382.6 900.8L383.1 900.6L383.0 902.3L382.8 903.9L383.3 904.8L384.0 907.2L383.8 906.7L383.9 907.6L384.6 910.7L384.2 911.1L384.7 911.6L384.4 914.8L384.5 915.7L385.2 916.3L385.1 916.8L385.3 919.4L385.8 919.9L386.0 920.6L386.0 922.0L385.8 923.6L386.2 925.7L386.3 926.6L386.2 928.3L386.9 928.8L386.9 931.3L387.2 933.2L386.9 934.5L387.7 935.5L387.3 937.3L388.1 937.1L388.3 938.2L387.6 941.2L388.3 940.9L387.9 942.3L388.3 945.1L388.2 946.3L388.9 946.6L388.6 947.0L389.4 950.0L388.8 952.1L389.6 952.2L389.7 953.5L389.2 954.1L389.8 956.2L390.5 954.4L392.1 954.8L392.9 954.1L394.4 953.2L394.3 953.7L395.3 956.7L394.7 958.3L395.7 957.3L395.8 959.7L395.7 960.6L395.9 962.4L395.7 964.0L396.7 965.6L396.5 965.5L396.7 968.3L396.7 968.2L396.8 970.3L397.8 972.6L398.0 973.4L397.8 974.6L398.1 975.8L398.6 978.1L399.0 977.5L399.1 980.1L399.0 980.8L399.7 980.4L401.0 979.4L401.7 977.6L402.1 976.6L403.0 974.7L403.0 976.6L403.9 976.8L404.2 977.3L405.0 980.2L405.8 980.4L405.6 982.8L406.3 984.1L406.6 985.0L407.3 987.5L407.9 988.0L407.6 990.0L408.8 990.3L408.9 990.7L409.2 991.4L409.5 993.5L410.8 994.5L410.8 996.6L411.3 997.7L411.6 997.6L411.9 996.3L411.5 994.5L412.4 992.6L412.8 989.9L412.5 988.9L412.8 987.5L412.5 987.4L413.1 986.9L413.5 984.5L413.4 982.8L413.9 982.2L414.2 979.9L413.7 978.6L414.0 977.1L414.9 975.6L415.3 974.9L414.6 974.5L415.7 973.8L415.9 970.0L415.7 969.6L415.9 968.5L416.4 968.6L417.9 966.3L418.2 965.6L419.3 965.1L419.3 963.0L420.4 961.9L420.8 959.7L422.0 959.3L421.9 958.1L422.7 956.6L422.5 955.4L423.0 954.4L423.3 953.6L424.0 952.9L423.5 951.0L424.5 948.1L424.4 948.6L424.4 946.2L424.9 945.8L425.1 944.0L425.5 942.9L425.4 942.0L426.5 939.4L426.6 939.8L426.1 936.2L426.8 935.5L426.7 935.1L427.0 933.6L427.9 931.1L428.1 930.9L428.3 929.2L428.4 927.4L429.2 927.5L428.8 924.4L429.6 925.0L429.5 923.6L429.8 921.4L430.2 921.1L431.1 919.3L431.0 917.2L431.2 916.3L431.8 915.6L431.5 913.4L432.2 911.2L431.6 909.9L432.2 909.8L432.2 908.8L432.2 907.7L433.0 904.9L432.8 903.2L433.4 903.5L433.0 901.1L433.8 899.9L433.4 898.6L434.1 898.2L434.6 897.4L434.3 896.0L434.4 894.4L434.7 891.8L435.4 892.1L435.1 888.9L435.3 887.9L435.5 886.7L435.8 885.6L436.0 883.5L436.0 883.8L436.2 882.6L436.5 879.5L436.1 880.1L436.4 876.5L436.6 876.6L436.7 876.4L436.2 874.6L437.1 872.7L436.5 870.1L437.4 870.5L437.2 867.5L437.4 866.4L437.0 866.4L437.6 864.0L437.7 863.4L437.4 861.8L437.8 862.0L437.8 859.5L438.1 858.7L437.9 857.9L438.2 856.4L438.5 855.2L438.6 853.8L438.5 852.8L438.7 850.4L438.5 849.8L438.3 847.5L439.2 847.0L438.5 844.8L438.9 843.0L439.5 841.9L438.9 840.0L439.4 838.9L439.0 839.3L439.4 836.1L439.9 836.2L439.2 833.4L439.4 832.5L440.0 831.4L439.6 831.0L439.8 828.6L440.4 827.3L440.3 826.3L440.3 826.3L440.4 824.2L440.9 822.3L440.4 822.7L441.1 820.4L440.5 818.9L441.3 816.5L440.8 817.2L441.1 815.2L441.6 813.2L441.0 812.9L441.3 809.9L441.7 809.5L441.6 809.1L441.3 806.4L441.5 805.5L441.8 805.6L442.4 803.7L442.0 801.4L442.4 799.8L442.5 798.1L442.6 799.0L442.1 795.8L442.1 796.1L442.5 794.2L442.7 794.1L442.6 792.6L442.8 791.1L442.5 790.1L442.7 788.6L443.1 786.5L443.6 784.2L443.1 783.3L443.2 781.4L443.5 781.2L444.0 779.8L444.2 778.3L444.1 776.3L444.9 775.9L444.9 775.6L444.8 772.2L444.9 772.7L445.4 771.1L446.2 768.3L445.6 769.1L446.0 767.3L446.4 765.4L446.5 763.9L447.1 762.9L446.8 761.2L447.2 761.2L447.7 760.4L447.7 758.6L448.1 756.7L448.0 758.9L448.4 758.5L449.3 761.3L449.4 761.3L449.9 764.4L449.9 763.8L450.1 765.4L450.4 767.4L451.2 769.0L451.2 768.8L451.5 766.4L451.8 765.7L451.4 763.4L451.2 762.2L451.9 760.8L452.1 761.0L452.0 758.9L451.8 755.9L452.2 755.4L452.1 753.5L452.6 753.2L452.5 752.7L452.7 749.7L452.6 750.3L452.6 747.5L452.9 745.7L452.8 746.6L453.2 744.5L453.4 741.9L452.8 741.7L452.9 738.9L453.4 738.9L453.8 736.9L453.4 735.7L454.0 733.8L454.0 732.5L453.7 732.2L453.5 731.0L454.3 730.5L454.0 729.0L454.4 725.9L454.5 725.0L454.3 723.5L454.3 722.9L454.1 722.5L454.1 720.4L454.3 717.8L455.2 718.9L454.7 716.8L455.2 715.5L455.2 713.4L454.7 713.2L455.3 710.3L455.3 708.9L455.2 708.7L455.4 707.2L455.6 706.1L455.4 704.9L455.6 703.7L456.2 703.1L456.1 700.6L456.5 699.6L456.7 698.7L457.0 696.7L457.0 696.3L456.7 693.8L457.3 692.9L457.0 691.5L457.5 690.0L456.8 688.4L457.7 688.1L457.5 686.8L457.4 685.6L457.2 683.9L457.7 681.3L457.8 681.0L458.2 678.5L457.9 678.4L458.1 676.6L457.9 675.1L458.9 675.5L458.9 673.6L459.0 671.6L459.0 669.8L458.9 669.2L459.5 670.7L459.5 670.9L459.5 672.3L459.1 675.8L459.6 675.3L459.5 676.9L460.5 679.7L460.2 679.8L460.0 681.6L461.1 681.5L460.8 683.6L461.5 686.6L460.9 686.7L461.8 687.6L461.2 690.5L461.6 691.7L461.9 692.2L461.7 693.4L462.7 695.8L462.4 695.4L462.8 696.7L462.2 697.6L462.5 700.7L463.2 702.5L462.6 703.3L463.5 704.6L462.8 705.2L463.2 706.0L463.2 708.6L463.3 708.5L464.0 711.1L464.0 711.6L464.1 714.3L463.9 713.9L464.4 717.0L464.5 716.6L465.0 717.5L464.7 719.7L464.3 721.3L464.7 722.8L465.4 723.2L465.0 724.1L465.1 727.1L465.5 727.2L466.0 728.3L465.2 731.7L466.1 731.6L466.4 732.7L465.8 734.3L466.4 735.8L466.5 736.6L466.5 738.3L466.6 740.3L467.0 740.9L466.8 742.7L466.5 744.7L466.6 745.5L466.8 746.4L467.4 747.2L467.5 749.4L467.3 749.3L467.5 750.6L467.0 752.6L467.8 754.1L468.0 755.4L467.4 755.6L467.9 756.5L467.9 758.9L468.3 759.8L468.5 760.6L468.3 763.1L468.0 765.0L468.2 764.6L468.3 765.7L468.6 768.5L468.8 768.8L469.1 769.7L468.6 771.2L469.1 772.5L469.3 775.5L469.0 774.8L468.9 776.9L468.8 779.8L469.7 779.8L469.1 782.4L469.8 782.3L469.4 782.5L469.4 786.0L469.6 786.1L469.5 787.4L470.5 787.7L470.3 790.9L470.0 790.8L470.0 793.0L470.8 794.0L470.3 795.1L470.7 798.0L470.6 796.8L470.3 799.7L471.0 800.2L471.0 802.9L471.0 804.2L471.5 804.2L471.2 805.8L471.8 806.8L471.6 807.7L472.1 809.0L472.1 810.3L472.7 811.7L472.9 813.3L473.5 816.4L473.6 816.5L473.5 816.1L473.6 813.6L474.0 813.0L473.9 810.6L474.3 809.1L475.2 808.3L474.7 807.8L474.8 805.6L475.2 805.7L475.8 804.0L475.3 803.0L475.8 800.2L476.5 798.2L476.6 797.5L476.1 796.7L476.5 795.1L476.6 792.8L476.6 792.9L477.2 790.9L477.1 790.2L477.5 789.3L477.9 787.4L478.2 789.3L477.9 789.1L478.6 790.7L478.4 792.3L478.5 794.8L478.7 794.6L478.6 795.7L479.4 796.5L479.7 799.3L479.4 801.6L480.1 802.1L480.1 802.2L480.5 804.7L479.9 806.5L480.0 807.2L480.4 808.0L480.6 808.3L480.9 810.3L480.7 811.5L481.2 813.1L481.5 813.8L481.1 815.3L481.6 816.8L482.0 817.6L482.1 820.4L481.7 821.7L482.2 822.2L482.4 822.6L482.7 823.9L482.8 826.6L482.8 827.2L483.0 827.7L483.4 831.3L483.7 830.9L483.7 832.0L484.3 834.4L484.1 835.1L484.5 837.9L484.5 838.4L484.4 839.1L485.0 840.0L484.7 842.9L484.5 844.3L485.2 843.6L485.2 845.3L485.2 848.4L485.4 847.6L485.6 850.2L486.0 849.7L485.9 852.0L486.5 853.6L486.5 854.9L486.7 856.3L487.0 857.7L486.5 860.0L487.1 859.7L487.0 860.9L487.1 863.2L487.3 865.2L487.1 864.5L487.1 866.6L486.9 867.6L487.2 869.9L487.0 869.9L487.0 871.4L487.0 873.2L487.0 873.3L487.7 874.7L487.5 876.1L487.6 879.1L488.1 878.8L487.3 882.0L487.8 881.7L487.8 884.4L487.7 885.5L487.8 886.8L488.3 887.1L488.5 889.7L488.1 890.3L488.4 892.0L488.6 893.6L488.3 893.1L488.2 895.8L488.0 895.8L489.0 898.2L488.3 900.5L488.6 901.1L488.6 902.2L489.3 904.3L489.1 903.3L488.5 904.8L489.0 907.1L489.6 905.3L489.3 905.9L489.6 902.9L490.4 902.2L490.6 900.4L491.5 900.3L491.4 897.7L492.1 897.3L492.1 897.0L492.6 895.0L492.6 894.0L492.9 891.1L493.4 891.8L493.6 889.4L493.9 887.7L494.4 887.0L495.1 885.6L495.2 887.2L495.8 887.5L495.9 889.1L496.1 889.6L496.7 893.1L496.9 892.3L498.1 894.6L498.3 895.2L498.2 897.2L498.6 899.3L499.1 898.7L499.5 901.5L500.2 901.9L500.6 904.7L500.8 904.9L500.5 906.9L500.9 906.4L501.1 907.9L501.9 910.2L502.3 911.1L502.1 912.3L502.0 912.8L501.9 916.6L502.8 916.8L502.8 918.8L503.0 919.0L503.1 921.5L502.5 923.2L503.0 924.4L502.9 925.0L502.8 926.9L503.1 927.3L503.4 928.1L503.9 930.1L503.9 930.6L503.6 931.9L503.8 934.7L503.9 933.8L503.9 936.8L504.4 938.1L504.1 939.3L504.2 939.1L504.6 941.0L504.8 941.4L504.9 944.0L505.2 945.0L506.4 946.6L506.8 947.0L507.2 948.6L508.0 949.3L508.0 951.6L509.0 950.1L509.1 948.2L509.4 948.1L510.5 945.7L510.7 946.1L511.3 942.8L511.7 943.5L512.6 940.9L512.8 942.6L513.0 943.9L514.0 945.1L514.1 947.0L514.4 947.4L515.1 947.7L515.0 950.5L515.4 951.7L515.5 952.3L516.2 954.2L516.0 955.2L516.8 956.8L517.2 957.8L517.7 956.8L517.6 956.4L518.8 954.0L518.5 953.4L519.6 952.2L519.9 950.0L520.4 948.1L520.0 947.8L520.8 947.4L521.3 946.4L521.4 944.8L521.3 944.1L522.4 942.5L522.8 939.7L523.0 938.9L523.3 937.8L523.9 940.0L525.3 939.7L526.2 940.4L527.1 943.5L528.0 944.0L528.4 942.0L528.4 942.3L528.7 940.2L528.0 939.5L528.0 937.1L528.4 934.9L528.9 935.8L528.4 932.5L529.1 931.9L529.3 931.2L529.4 928.5L529.2 927.5L529.3 928.0L529.4 924.9L528.8 924.2L529.2 922.6L529.2 922.1L529.7 920.7L529.2 918.3L529.7 918.3L529.4 915.5L530.0 916.3L529.7 913.5L530.2 913.9L530.0 911.9L530.1 909.5L530.4 907.7L530.7 907.1L530.4 905.8L531.0 904.7L530.8 903.0L530.8 901.4L531.2 900.2L531.3 898.9L530.9 898.6L531.0 898.0L531.3 896.2L530.8 894.1L531.1 892.7L531.9 891.5L531.7 889.8L531.3 889.5L531.3 887.5L531.5 887.4L531.7 884.9L532.3 884.6L532.0 882.7L532.5 880.1L532.0 878.8L532.5 878.2L532.2 877.7L532.9 877.0L532.6 873.4L532.6 873.3L532.6 871.9L532.8 870.5L533.3 869.7L533.8 869.2L533.4 867.9L533.9 866.1L534.4 864.5L534.1 861.5L534.4 861.0L535.0 859.2L534.5 857.8L534.7 856.3L534.6 856.5L535.4 853.7L535.7 853.6L535.6 851.9L536.2 852.6L536.5 855.1L536.5 854.9L537.1 855.9L537.5 859.6L537.2 858.5L537.7 861.2L538.3 861.4L538.3 863.2L538.6 864.1L538.4 865.4L538.9 867.7L539.2 869.7L539.3 870.1L540.0 870.9L540.3 873.1L540.2 875.2L540.6 876.5L541.2 878.1L541.6 877.9L541.8 879.5L542.5 879.2L541.8 876.7L542.9 874.8L543.0 875.0L543.1 872.2L542.9 870.6L544.0 870.0L544.2 869.6L544.0 866.8L544.1 865.6L545.0 864.4L544.8 863.7L545.5 863.3L545.4 862.8L546.0 860.3L545.7 858.8L545.9 858.4L546.3 856.1L546.5 855.1L546.8 853.7L547.5 851.5L547.4 850.2L547.5 850.2L547.9 848.8L547.6 846.8L547.9 845.9L548.0 844.9L548.4 844.2L548.4 841.0L548.1 842.2L549.2 839.9L548.9 838.1L548.8 836.8L549.2 836.1L549.2 834.0L549.6 833.2L549.0 830.7L549.3 830.0L549.6 830.1L549.7 828.9L550.1 826.1L550.5 824.3L550.0 825.0L550.6 822.3L550.5 822.2L550.7 819.0L550.7 817.7L551.1 817.7L550.4 816.7L551.2 816.1L550.6 813.9L551.1 813.0L551.8 811.6L551.0 810.9L551.5 809.2L551.5 807.9L551.7 805.8L551.7 803.6L551.6 803.9L552.5 801.0L552.3 801.1L552.0 798.4L552.9 797.6L553.0 797.0L552.6 794.7L553.2 794.3L553.3 791.9L552.6 791.5L553.1 790.1L553.7 789.5L553.6 787.7L553.8 786.1L553.9 784.1L553.9 782.9L553.7 781.7L554.0 781.2L554.2 779.0L554.6 778.8L555.0 776.9L555.1 776.8L555.5 774.8L555.7 774.5L555.9 772.4L556.7 770.0L556.6 769.5L557.5 766.8L557.7 766.3L557.9 765.1L558.5 764.1L558.3 763.7L558.7 761.3L559.0 762.6L559.5 764.6L560.8 764.8L561.2 765.4L561.6 768.2L561.8 768.9L563.0 771.8L563.3 772.0L563.0 774.1L563.3 775.4L563.8 775.2L563.5 777.6L564.1 779.3L564.6 781.0L564.2 781.7L564.7 783.7L564.9 783.3L564.5 785.8L564.4 785.9L564.8 787.9L564.9 788.6L565.3 789.5L565.2 791.2L565.6 792.5L565.4 795.4L566.2 796.7L566.1 797.3L566.2 799.0L566.3 799.7L567.2 801.3L567.0 802.9L568.1 802.2L568.4 804.2L568.6 805.1L569.3 806.7L569.5 809.4L569.8 809.6L570.9 810.0L570.9 811.9L571.5 812.2L570.7 814.9L570.8 816.9L571.0 817.3L571.3 819.8L571.1 820.8L571.2 821.5L571.9 821.2L572.1 825.0L572.3 826.0L571.7 826.4L571.9 827.8L572.2 829.1L572.1 830.3L572.5 832.2L572.3 832.9L572.8 834.2L573.0 836.8L572.8 836.0L573.3 837.8L573.7 840.7L573.8 842.0L573.9 843.1L573.5 842.2L573.9 845.0L573.9 846.4L573.5 848.6L574.5 848.8L573.7 848.8L574.7 852.3L573.9 851.5L574.6 854.9L574.6 855.4L575.0 857.3L574.3 856.7L575.4 860.0L574.9 861.5L575.0 861.5L575.5 862.0L575.4 863.9L575.3 865.9L575.5 867.6L576.0 867.8L575.4 869.0L575.9 870.5L575.8 873.2L576.3 873.1L576.2 874.4L576.7 875.8L576.2 876.9L576.4 878.5L576.8 880.9L576.8 882.4L577.1 881.9L576.7 883.6L577.1 885.6L577.8 886.7L577.3 888.0L578.2 890.7L577.5 890.7L578.3 893.1L578.5 893.2L578.2 894.7L578.8 896.6L579.1 897.6L579.0 897.8L578.7 900.1L579.0 902.8L579.9 902.3L580.2 905.6L580.3 905.3L580.1 907.1L580.9 907.4L580.9 910.8L582.0 909.9L582.6 913.1L582.9 914.5L583.1 914.3L584.5 915.3L584.3 916.0L584.7 918.0L585.4 919.1L586.3 920.9L587.2 921.0L588.2 923.2L589.1 924.8L589.6 926.4L590.5 925.6L592.1 926.9L592.7 929.6L593.5 928.7L594.4 930.8L595.5 931.7L596.2 931.2L596.1 929.0L596.2 928.7L597.0 925.8L596.3 926.5L597.0 924.7L597.0 921.6L597.8 920.6L597.3 919.4L598.4 918.1L598.5 917.6L598.6 916.3L598.4 914.9L598.6 912.4L598.7 911.1L598.9 911.3L599.2 909.6L599.1 907.8L599.4 908.0L599.4 905.4L599.3 904.2L599.3 904.1L600.1 902.8L599.5 901.3L600.4 899.0L599.7 897.1L599.8 896.9L599.9 895.2L600.1 894.9L600.6 891.3L600.6 890.6L601.0 889.7L600.6 888.4L600.8 885.7L601.0 885.1L601.0 884.7L601.1 882.0L601.3 881.7L601.1 881.6L601.0 878.9L601.2 878.5L601.6 876.4L602.0 875.9L602.3 873.1L602.0 872.5L602.6 871.3L602.3 869.8L602.8 868.0L602.5 867.2L602.5 865.1L603.2 865.4L603.5 864.5L603.5 862.4L603.7 861.2L603.2 860.1L603.5 858.8L604.2 856.0L604.0 854.1L604.4 853.6L604.7 853.0L604.5 852.6L604.7 849.0L604.7 848.8L605.4 846.5L604.9 847.1L605.4 844.0L605.9 844.2L605.2 842.5L605.3 841.5L606.2 840.5L606.5 839.0L606.7 837.1L606.4 836.0L606.5 834.0L606.5 831.8L606.7 832.4L607.4 830.8L607.3 829.5L607.3 827.2L607.8 825.6L608.3 825.6L608.4 823.3L608.0 823.5L608.5 822.3L608.8 821.0L608.5 818.1L608.9 817.2L609.4 814.7L609.2 814.6L609.2 813.9L609.7 811.1L609.6 809.9L609.5 808.2L610.1 807.6L610.4 807.8L610.4 805.1L610.6 803.3L610.8 802.7L610.4 802.6L611.0 799.9L610.9 799.5L611.3 797.9L610.7 797.2L611.5 795.0L610.7 793.7L610.6 793.0L611.1 790.1L611.3 789.1L610.9 789.0L611.3 787.8L611.1 786.3L610.8 784.3L611.7 783.1L610.8 782.9L611.0 779.5L611.2 779.8L611.2 777.0L611.6 776.9L611.5 775.1L611.5 774.6L611.6 771.6L611.0 770.5L611.0 770.1L611.4 767.8L611.1 767.5L611.9 767.5L611.7 765.0L612.1 763.2L611.4 761.4L612.0 760.4L611.6 759.8L612.1 758.2L612.0 756.6L611.7 756.4L611.7 754.3L611.6 753.2L611.7 752.3L612.1 750.2L611.9 749.3L611.9 749.1L612.3 746.5L612.3 746.7L612.2 743.9L611.8 743.5L612.5 742.2L612.2 740.7L612.3 738.8L612.4 737.0L612.6 736.5L612.4 734.7L612.1 732.5L612.0 733.2L612.0 731.5L612.8 729.6L612.7 727.8L612.4 726.2L612.7 726.8L612.5 724.4L612.7 724.0L612.5 722.7L612.7 720.2L612.5 719.7L612.2 719.5L612.4 717.6L613.0 716.2L612.7 713.7L612.6 713.1L612.8 710.8L612.9 711.4L613.0 708.6L612.4 707.6L612.7 706.8L613.3 705.3L613.3 704.1L613.1 702.2L612.7 700.2L612.9 700.0L613.1 699.2L612.8 698.2L612.8 695.5L612.4 694.9L613.1 693.1L612.7 691.2L613.3 691.8L612.6 688.9L612.5 687.2L613.1 687.6L612.9 685.0L612.4 684.8L613.3 683.8L613.1 680.9L612.7 680.8L612.6 680.0L612.7 677.6L613.2 676.2L613.0 675.3L612.6 675.0L613.0 671.7L613.4 670.2L612.8 669.4L613.2 668.3L613.1 668.3L612.8 665.0L612.6 665.1L613.3 664.3L612.8 661.3L613.1 660.0L613.1 658.2L613.2 656.9L613.0 656.8L612.4 654.4L613.4 653.7L613.3 653.0L612.5 650.3L613.1 648.9L612.7 648.0L613.1 648.0L612.9 645.8L613.0 644.4L612.8 643.2L612.7 641.6L612.4 640.4L613.0 639.2L612.5 637.8L612.9 637.9L612.7 635.8L613.2 635.4L613.1 633.4L612.9 632.3L612.8 630.3L612.9 629.2L612.9 627.9L613.3 627.3L612.4 624.5L612.4 623.4L613.0 623.4L612.6 620.8L612.9 620.0L613.3 619.7L613.2 617.9L613.1 616.7L613.2 614.5L613.7 614.5L613.7 613.3L613.1 609.8L613.5 610.8L613.3 608.3L613.6 607.9L613.2 606.9L613.2 605.6L613.7 602.1L613.5 602.1L614.4 600.6L614.3 599.0L614.2 598.1L614.1 595.7L614.4 596.3L614.2 593.2L614.2 592.7L614.6 591.5L614.2 588.8L614.3 589.1L614.9 586.3L615.2 585.7L614.4 585.0L614.6 583.9L615.1 583.0L614.5 581.6L615.4 578.4L614.8 577.4L615.2 577.0L615.0 574.5L615.8 574.3L615.2 572.6L615.3 572.6L615.8 570.8L615.3 570.3L615.8 568.0L615.7 567.4L615.7 565.8L616.6 563.9L616.0 562.0L616.5 562.4L616.1 558.9L616.3 558.1L616.8 558.3L616.9 557.4L616.7 555.2L616.9 554.1L617.0 551.1L617.1 550.6L616.7 548.4L617.2 549.6L617.4 547.0L617.2 545.2L618.1 544.6L617.8 542.2L618.2 541.7L617.7 540.5L618.4 538.2L618.6 536.6L618.1 535.1L618.8 534.9L618.9 534.0L619.0 533.0L619.2 529.9L618.6 528.8L618.6 527.2L619.1 528.0L618.9 524.6L619.6 525.3L619.1 524.1L619.7 521.7L619.8 519.3L619.9 518.2L620.7 516.8L620.5 515.4L620.9 515.0L621.4 512.6L621.5 512.2L621.4 510.7L621.8 509.7L621.9 507.6L622.7 506.7L622.9 506.4L622.9 503.8L622.6 503.9L623.2 501.1L623.3 499.7L622.7 499.8L623.1 496.8L623.7 496.7L623.9 495.3L623.4 492.6L623.9 493.0L624.2 489.8L624.1 490.1L624.0 487.8L624.3 488.0L624.4 485.7L624.5 485.4L624.2 482.8L624.7 481.9L624.2 479.2L623.9 479.0L623.9 478.3L624.1 476.6L624.5 474.5L624.3 472.8L624.9 473.2L624.3 470.4L624.2 470.2L624.2 469.3L624.4 467.2L624.1 464.4L624.4 463.1L625.1 462.5L624.2 462.2L624.4 461.1L624.9 459.1L625.2 458.8L624.6 456.4L624.6 455.0L624.8 454.6L624.5 453.1L625.3 452.0L624.9 450.0L625.1 447.9L624.5 446.5L624.7 445.9L625.1 445.4L625.5 443.9L624.7 441.0L625.1 439.7L625.4 440.4L625.6 438.4L624.9 436.6L624.8 436.0L624.8 433.6L624.9 432.2L625.0 431.8L625.7 430.7L625.1 428.7L625.7 428.3L625.6 427.5L625.9 425.4L626.1 424.4L625.9 422.1L625.6 421.6L625.7 420.0L625.9 417.4L626.2 416.7L626.3 416.0L626.1 413.5L626.8 413.6L627.1 413.3L627.0 410.1L627.5 409.3L627.8 407.7L627.5 406.6L627.6 405.3L627.5 405.3L627.7 402.4L628.0 401.8L628.4 399.1L629.0 398.9L628.9 397.3L628.7 395.8L629.4 394.3L628.5 392.5L629.0 392.9L628.7 389.6L629.4 390.2L629.3 386.7L629.2 385.8L628.8 385.5L629.1 385.0L629.6 381.6L628.9 380.1L629.4 380.2L629.7 379.5L629.0 376.3L629.5 376.0L630.0 373.9L629.7 372.3L630.1 370.6L629.8 371.5L629.9 368.6L630.0 368.7L629.8 365.1L629.9 364.1L630.2 364.8L629.9 362.3L630.1 360.3L629.8 359.1L630.6 358.9L630.4 356.5L630.8 356.1L630.3 354.1L630.5 351.8L631.0 352.4L631.0 350.5L631.0 348.5L631.5 348.7L631.8 345.2L631.8 345.0L631.9 344.1L632.4 343.1L632.3 340.5L632.2 339.1L632.5 337.7L632.4 336.3L633.0 336.2L632.8 334.0L633.2 333.1L633.1 331.0L632.8 329.3L633.4 327.6L633.0 328.4L632.9 325.6L633.5 323.6L633.0 324.3L633.8 321.2L633.9 319.8L633.6 318.8L633.5 317.1L633.8 316.5L633.9 317.6L633.9 319.8L635.0 320.9L634.7 321.4L634.9 322.2L635.7 325.3L635.9 324.7L636.0 327.5L636.4 327.4L637.3 329.6L637.5 330.9L637.5 333.6L637.7 334.0L638.1 334.4L637.9 335.7L637.5 337.1L637.6 339.2L638.1 342.1L638.6 343.2L638.3 344.2L638.5 344.9L638.0 346.7L638.3 347.7L638.6 349.1L638.6 350.9L638.9 352.5L638.3 352.1L638.7 354.5L638.5 354.7L638.7 358.4L639.0 358.5L638.9 360.1L639.1 362.1L639.7 363.6L639.5 362.8L640.0 364.4L639.5 365.7L639.9 368.9L639.8 370.0L639.7 371.0L639.9 372.2L639.9 374.1L640.1 374.1L640.6 376.5L640.6 377.8L641.2 377.9L640.8 381.4L641.4 380.9L640.9 384.4L641.7 385.2L641.2 387.0L641.3 386.2L642.2 387.9L641.9 391.0L642.0 390.3L642.4 391.9L642.7 394.5L642.5 395.1L642.6 396.5L643.0 397.8L643.0 399.3L642.9 401.2L642.8 402.2L643.2 402.3L642.9 404.5L643.4 405.1L643.9 408.7L643.5 407.7L643.6 410.0L643.9 410.8L643.8 414.0L643.6 413.6L644.4 414.6L644.4 416.5L643.9 419.4L644.4 420.0L644.2 420.5L644.7 423.3L644.4 423.4L644.4 424.9L644.2 427.3L644.9 428.7L644.9 429.4L644.1 431.6L644.2 433.1L644.1 433.9L644.4 433.9L644.7 436.6L644.9 436.2L644.5 439.3L644.3 438.5L644.5 440.4L644.6 443.4L644.1 444.4L644.8 444.2L644.3 445.8L644.1 446.3L644.6 448.6L644.7 449.8L644.1 450.9L644.5 453.2L644.5 454.0L644.2 454.7L644.4 456.1L644.2 457.0L644.2 459.2L644.5 461.6L644.7 461.7L644.3 462.0L644.8 465.2L644.6 465.8L644.7 467.8L645.1 469.2L645.0 470.8L644.7 471.5L644.8 472.4L645.1 473.7L644.3 475.9L644.9 476.9L645.2 477.8L644.8 477.7L645.3 479.9L644.9 480.6L645.1 481.9L645.1 484.1L645.2 484.9L644.6 485.5L645.2 488.7L644.6 490.1L645.1 489.6L644.4 492.6L644.9 494.4L644.9 493.4L644.5 495.5L645.4 498.2L644.9 497.5L645.1 499.2L644.8 500.1L644.9 502.2L645.1 503.6L645.4 506.2L645.3 507.4L644.7 507.0L645.1 508.9L644.9 510.6L644.8 512.9L644.6 511.7L645.3 513.5L644.6 516.4L644.8 516.2L645.5 518.9L644.7 518.8L645.5 522.0L645.1 522.6L645.4 524.0L645.1 524.7L644.9 526.0L645.3 527.4L645.3 528.2L645.7 529.0L644.9 530.5L645.7 533.7L645.6 534.9L645.6 536.1L644.9 536.6L645.6 538.4L644.9 539.9L645.6 539.2L645.8 541.6L645.3 544.3L645.6 544.7L645.3 546.1L645.0 547.3L645.7 549.2L645.5 550.3L645.5 550.0L645.6 552.6L645.1 552.4L645.3 554.5L645.3 555.3L645.8 557.1L645.8 559.7L646.0 558.7L645.9 561.5L645.6 562.9L645.3 563.4L645.3 565.6L646.2 566.9L645.9 568.2L646.3 569.9L646.3 571.2L645.4 571.6L646.0 573.3L646.0 575.3L645.4 575.3L646.0 577.8L646.0 579.5L646.2 580.4L645.9 582.1L645.9 583.2L645.9 582.2L646.5 584.4L645.8 585.8L645.7 587.9L646.0 588.2L646.2 589.0L646.5 591.1L646.6 592.2L646.2 593.1L645.7 594.5L646.6 596.0L646.2 597.3L646.0 599.2L645.9 600.5L646.1 601.3L646.6 603.8L646.4 604.9L646.6 606.6L646.0 605.8L646.8 608.9L646.7 610.8L646.5 610.0L646.6 612.5L647.0 612.5L646.3 614.8L646.4 617.3L646.7 616.3L646.3 618.1L646.6 620.0L646.8 620.8L646.9 622.2L647.3 625.0L647.3 626.3L647.2 625.9L647.1 626.8L646.6 628.1L646.7 631.6L647.2 632.4L647.5 631.8L647.7 633.3L647.3 636.6L646.9 636.9L647.0 638.9L648.0 639.7L647.2 641.4L647.9 642.9L648.0 643.1L647.7 645.1L647.6 646.3L648.3 647.0L648.2 648.4L647.7 649.8L648.6 650.2L648.6 653.4L647.8 654.3L647.8 654.5L648.5 657.0L648.4 658.0L648.2 660.5L648.2 659.9L648.0 661.0L648.5 663.3L649.0 664.3L648.9 665.4L648.3 667.3L648.8 667.3L648.3 670.9L648.5 671.7L649.1 673.0L648.6 674.4L649.3 674.3L649.3 677.6L648.5 677.9L649.4 678.8L648.8 679.3L649.4 680.6L648.7 682.7L648.8 684.1L649.3 685.6L648.8 687.5L648.8 688.5L649.6 689.6L649.6 690.4L649.2 691.7L648.9 694.4L649.4 695.0L649.5 696.5L650.0 698.2L649.4 699.4L649.7 699.5L649.8 701.0L650.1 701.8L649.5 704.0L650.5 704.5L650.5 707.7L650.7 707.8L650.5 708.6L650.1 711.9L650.1 710.8L650.8 712.3L650.6 715.0L650.8 715.0L650.4 716.4L651.0 718.9L651.2 720.7L650.8 720.3L651.1 721.6L651.5 722.6L651.5 725.7L651.3 726.5L651.8 727.8L651.7 730.0L651.2 731.3L651.0 731.4L651.5 733.8L651.4 735.7L652.0 735.6L651.9 738.3L652.1 739.4L651.9 739.2L652.0 740.0L651.9 743.6L652.0 742.8L651.9 744.0L651.9 745.3L652.3 748.6L652.0 750.0L651.7 750.2L652.2 752.5L651.9 752.8L651.8 754.3L652.3 755.7L652.0 756.1L652.1 758.3L652.6 760.7L652.6 762.2L652.4 761.7L652.8 764.9L652.9 765.7L652.6 765.6L653.3 767.9L653.1 770.6L652.6 770.2L653.1 772.4L652.9 774.7L653.3 775.0L652.8 775.5L653.7 776.4L653.0 779.9L653.5 778.9L653.6 780.8L653.7 783.9L653.6 783.5L653.8 784.9L653.9 786.1L654.0 788.5L654.1 788.9L653.4 790.8L653.5 792.3L653.3 792.2L653.5 794.8L654.1 794.8L654.1 796.2L653.7 797.8L654.2 800.8L654.4 801.9L654.4 802.6L654.0 803.9L653.9 804.4L653.8 806.4L654.4 807.9L653.8 809.4L654.0 808.9L654.5 811.2L654.2 812.8L654.2 814.0L654.3 815.6L654.4 817.1L654.2 818.1L654.5 818.3L655.1 821.6L654.8 821.3L654.8 823.2L655.2 823.7L654.7 824.8L654.8 826.6L654.7 827.7L654.9 829.8L655.4 831.5L655.4 832.7L655.3 834.0L655.8 834.9L655.9 835.6L656.2 837.9L655.9 839.3L655.7 841.0L655.9 841.3L656.3 843.5L656.6 843.4L656.3 846.8L656.5 848.1L656.0 847.9L656.6 848.2L656.7 851.4L656.6 852.8L656.9 854.1L656.9 855.1L657.0 856.5L657.2 856.3L657.0 859.2L657.2 860.0L657.3 862.5L657.4 861.7L657.1 863.5L657.2 866.2L657.3 867.1L658.2 867.9L658.1 868.1L658.3 869.2L657.8 872.8L657.9 873.4L657.9 873.5L658.5 875.5L658.3 876.0L658.3 878.2L658.5 880.3L658.9 880.4L658.3 882.4L659.0 883.6L658.8 883.6L658.5 886.1L658.6 886.5L658.8 888.5L658.8 890.3L659.0 891.6L659.4 893.4L659.7 893.2L659.1 895.3L659.6 895.9L659.6 897.7L659.9 898.5L660.0 899.8L659.6 901.6L659.8 903.2L659.9 904.5L660.2 906.8L660.5 905.9L659.6 907.0L659.9 910.4L659.9 909.6L660.7 912.2L660.1 912.2L660.0 913.5L660.5 915.6L660.8 918.6L660.7 918.7L661.0 920.9L661.3 922.4L661.2 921.9L661.2 923.8L661.8 926.3L662.0 925.7L662.0 928.6L662.0 929.3L662.3 929.7L663.1 931.7L663.3 932.3L663.6 934.5L663.4 936.9L663.7 938.2L663.6 938.2L664.3 938.4L663.9 939.8L664.6 941.0L664.6 942.6L665.0 945.4L665.4 945.1L665.6 948.6L665.7 948.5L666.2 950.4L665.9 951.9L665.9 953.2L666.6 952.8L666.8 954.3L667.4 955.8L667.2 957.7L668.4 958.5L669.0 960.7L670.0 961.2L670.5 961.2L672.3 962.8L672.6 963.8L673.6 964.3L674.9 964.8L675.5 964.8L676.1 967.0L677.2 968.5L678.1 968.6L679.2 970.0L680.2 970.7L680.7 969.8L681.4 968.7L681.8 965.6L682.2 964.7L682.9 965.1L683.2 963.2L683.7 961.6L684.6 959.9L685.7 959.5L687.9 959.4L688.8 962.2L690.6 960.0L691.3 962.1L693.2 962.0L693.4 963.9L694.7 963.7L694.7 966.2L695.9 966.7L696.2 968.2L696.3 968.3L697.4 969.5L697.9 971.7L698.6 973.0L699.0 974.2L699.7 975.0L700.1 974.6L701.0 973.4L701.1 972.0L701.3 970.4L701.2 968.0L701.7 967.8L702.4 966.4L702.7 965.1L702.9 962.9L703.9 962.8L703.7 960.6L704.2 959.6L704.9 958.8L705.4 957.9L705.9 956.5L705.8 954.5L706.2 953.4L706.2 952.5L706.5 951.7L706.7 949.6L706.4 947.8L707.0 946.3L706.9 946.8L707.9 945.3L707.4 943.7L708.1 940.4L707.7 939.3L708.3 940.2L708.6 938.6L708.5 935.6L708.5 934.1L709.1 933.9L709.2 932.0L708.9 930.3L709.4 928.8L709.7 928.9L710.1 927.2L709.9 926.6L709.7 925.7L710.3 922.9L710.8 922.4L710.1 921.3L710.7 920.7L711.2 917.5L711.4 917.3L711.0 915.8L711.4 914.3L711.7 912.7L711.5 910.8L711.5 909.4L712.4 909.2L712.7 907.6L712.6 906.8L713.0 904.7L713.2 903.5L713.4 902.0L712.8 901.8L713.0 900.6L713.4 898.4L713.5 897.0L713.8 895.2L714.3 893.8L714.4 893.1L714.9 892.0L714.8 891.9L715.1 890.5L714.9 888.3L715.5 888.3L715.9 886.4L716.9 884.7L717.3 884.3L718.1 883.5L719.2 881.6L720.1 881.6L720.9 878.7L721.5 877.9L722.6 877.2L722.6 876.3L723.6 875.3L724.5 876.1L724.2 877.4L725.1 879.2L725.0 881.5L726.1 881.2L726.5 882.9L726.3 884.6L726.9 884.3L727.3 886.2L727.7 887.4L728.6 888.0L728.7 891.2L729.7 890.7L729.5 891.9L730.1 894.3L730.8 896.3L731.1 896.9L732.0 896.9L732.5 899.1L732.5 899.6L732.7 902.0L733.9 902.1L734.4 905.6L734.4 905.7L734.9 907.1L734.8 908.6L735.2 908.8L735.5 910.9L735.4 911.2L736.1 912.7L735.8 914.9L736.3 917.1L736.4 917.1L736.3 917.7L737.4 919.1L737.2 922.6L737.5 924.1L737.3 924.8L738.0 925.5L738.3 926.7L738.5 927.9L738.6 928.9L738.9 930.8L738.8 931.1L739.0 934.2L740.0 934.9L740.0 936.6L740.0 937.6L740.8 939.6L740.6 939.9L740.6 942.1L741.2 942.7L742.0 944.2L742.2 946.2L742.1 947.1L743.3 948.3L743.2 949.5L743.5 950.5L743.6 950.9L744.3 953.8L744.8 953.1L745.2 956.4L745.8 956.0L745.7 957.3L745.8 959.3L746.1 960.1L746.8 962.0L747.0 959.9L748.3 960.0L749.2 957.8L749.4 957.0L750.2 957.2L751.0 954.8L751.2 954.3L752.3 951.4L752.7 951.3L753.5 950.8L754.4 948.1L755.2 947.2L755.7 947.2L756.2 944.7L756.7 945.3L757.7 942.4L758.5 942.5L759.2 944.7L759.2 944.3L760.6 947.2L760.5 948.1L760.9 949.5L761.8 949.3L762.1 952.6L763.4 951.8L763.5 954.6L764.3 955.2L765.5 953.0L766.4 954.2L766.5 952.1L767.9 951.5L768.9 950.6L770.0 948.7L770.3 947.5L771.5 946.8L772.1 945.4L772.8 944.3L773.0 942.2L772.7 942.5L773.2 939.0L773.8 939.3L773.8 937.8L773.5 937.0L774.0 935.5L774.0 933.0L774.8 932.1L774.6 931.3L775.0 929.9L775.9 927.6L776.5 928.2L776.3 927.1L777.3 924.7L778.3 923.5L778.1 922.1L778.7 921.6L779.8 919.3L780.4 919.6L780.9 918.2L781.5 915.9L781.8 915.9L782.2 913.9L782.9 913.4L783.8 912.5L784.2 910.5L784.9 909.2L785.3 907.9L786.0 908.1L786.7 906.4L787.1 906.4L787.1 903.6L787.5 903.1L788.0 900.7L788.9 900.8L789.8 900.3L789.9 898.1L790.6 896.8L790.8 895.0L792.3 893.2L792.1 892.4L793.1 892.8L793.8 891.0L794.5 889.0L794.2 888.9L794.8 886.3L795.2 883.9L795.0 883.4L794.5 881.4L795.3 880.1L795.5 881.0L794.8 878.7L795.3 878.0L795.5 876.7L795.2 874.9L795.2 872.5L795.5 871.9L795.3 872.0L795.5 870.2L796.4 867.2L796.1 866.2L796.0 865.8L795.9 863.9L796.2 863.5L796.4 861.7L797.1 863.3L797.0 863.2L797.8 865.2L797.4 867.2L797.6 868.1L798.4 869.5L798.0 870.8L798.5 871.2L798.3 873.5L798.4 874.9L798.2 876.5L798.6 878.2L798.5 877.7L798.4 880.2L798.5 882.3L798.4 882.3L799.4 883.7L798.6 884.3L799.2 886.5L798.8 886.8L798.9 889.3L799.4 889.1L799.5 892.6L799.0 893.8L799.4 893.7L799.5 895.8L799.4 896.8L799.3 898.2L799.3 898.7L799.9 899.5L800.3 900.9L799.7 904.5L800.4 905.8L800.2 904.6L800.3 906.8L800.4 907.3L800.7 908.5L800.7 911.0L801.4 913.4L801.5 913.6L801.6 914.6L801.3 917.0L801.5 918.1L801.7 918.0L802.1 919.1L802.0 920.8L802.3 923.5L802.3 924.0L802.9 923.7L803.3 921.8L803.9 920.4L804.0 918.8L804.3 917.3L804.4 917.0L805.0 913.7L805.6 912.6L805.3 912.1L806.2 910.4L807.5 910.6L808.8 912.1L809.4 913.2L811.0 914.3L811.6 916.1L811.3 915.9L811.4 918.6L811.4 919.6L811.9 922.2L811.9 922.0L812.0 924.0L811.3 926.1L811.6 925.4L812.4 928.3L812.0 928.1L812.4 931.1L812.7 931.7L811.9 933.9L812.2 935.3L812.8 935.7L812.5 936.2L813.0 939.1L812.4 940.6L813.2 941.0L813.3 943.2L812.7 942.8L813.0 943.8L813.1 946.1L813.0 946.4L813.8 949.1L813.6 948.9L813.6 952.5L814.1 952.7L814.3 952.6L814.0 955.2L814.6 954.7L814.7 952.3L814.6 952.6L815.5 949.1L815.4 950.1L816.0 946.8L816.5 947.1L816.3 945.5L817.2 943.1L817.0 943.2L817.6 940.3L817.9 939.9L818.0 938.0L819.2 938.0L819.5 936.7L819.6 934.1L819.8 933.8L820.4 934.8L820.4 936.7L821.0 938.8L820.7 938.1L821.0 939.3L821.4 941.0L820.9 942.7L821.3 945.4L821.9 945.1L822.4 945.8L822.0 948.9L822.2 950.0L822.4 951.0L823.0 951.7L823.4 953.7L823.3 956.0L823.5 955.9L823.8 958.2L823.9 958.1L824.8 960.0L825.0 961.4L825.0 962.8L825.0 963.5L825.0 966.1L825.6 966.8L825.5 968.0L825.7 968.9L826.1 969.9L825.9 970.8L825.9 972.7L826.6 975.5L826.2 976.9L826.5 976.4L827.1 978.5L827.3 980.7L826.6 979.8L827.1 982.0L827.2 982.4L827.8 984.0L827.6 986.3L828.7 986.2L830.5 986.8L831.4 987.2L832.5 988.2L834.3 990.8L835.4 990.2L835.9 992.0L837.1 993.9L836.9 994.2L837.8 993.9L838.8 996.2L839.3 998.8L840.1 998.0L840.2 999.9L839.9 998.9L841.1 996.5L841.0 996.7L840.5 995.0L841.0 994.4L841.4 992.7L841.6 990.6L842.1 990.4L842.3 987.7L842.0 985.8L841.9 984.9L842.1 983.8L843.1 983.9L842.5 981.3L843.4 979.4L842.9 978.2L843.6 977.2L843.6 975.1L844.2 974.9L844.6 973.2L844.6 971.5L844.9 969.7L844.4 969.6L845.3 968.9L845.1 966.8L845.7 964.5L845.4 965.4L845.9 963.7L845.8 961.8L846.4 959.8L846.7 959.8L846.6 956.6L846.4 957.0L847.3 953.9L847.3 954.6L847.2 952.1L847.1 952.0L847.9 950.5L848.4 948.5L848.5 947.7L848.2 945.2L848.5 944.2L849.2 944.1L849.3 943.2L849.3 942.1L848.9 940.2L849.5 938.0L850.1 935.9L849.6 935.3L850.1 933.3L850.7 932.6L850.4 932.1L850.2 929.6L851.0 929.7L851.1 927.9L851.7 926.3L851.2 924.1L851.5 924.7L851.8 922.2L852.4 920.9L852.4 919.0L852.3 919.4L852.6 918.1L852.9 916.2L852.7 915.2L853.3 913.1L853.4 912.6L853.6 909.8L853.6 910.7L854.1 907.7L853.7 906.4L854.4 904.7L854.8 905.5L855.0 903.5L854.6 902.8L855.5 900.3L855.3 900.5L855.2 898.4L855.4 895.7L855.8 894.7L856.0 894.6L855.6 893.9L855.8 890.8L856.8 889.9L856.9 888.9L856.6 886.8L856.7 887.1L857.2 885.7L856.8 884.2L858.0 882.1L857.4 880.9L857.9 881.2L858.0 879.1L858.1 877.6L858.1 875.4L858.7 874.0L858.7 873.4L858.6 871.0L859.8 870.7L859.8 870.1L859.6 868.7L859.7 866.7L860.1 865.4L860.5 863.0L861.1 862.3L861.0 860.6L862.2 859.0L862.5 859.9L862.1 856.4L862.2 857.0L863.1 853.8L863.7 854.5L863.6 852.0L863.9 851.6L865.0 850.1L865.5 849.3L865.8 847.7L866.0 846.3L866.9 844.7L866.5 843.4L867.9 841.9L868.0 841.3L868.7 840.6L869.1 837.5L868.9 838.0L869.8 836.9L870.4 834.5L871.0 834.5L872.4 832.3L873.8 831.2L874.9 831.8L875.4 831.2L876.8 828.7L878.2 829.2L879.4 828.8L880.1 826.7L880.6 825.5L880.7 824.9L881.3 823.2L880.8 822.3L881.7 818.8L881.4 819.6L882.3 818.3L881.9 815.2L882.7 815.2L883.2 812.5L883.1 812.1L883.9 812.6L883.7 815.7L884.6 816.3L885.0 817.0L885.0 819.4L884.8 819.4L884.9 821.9L884.7 823.4L884.7 824.6L885.7 825.5L885.3 825.8L884.9 827.3L885.3 829.8L884.9 831.0L885.1 830.7L885.0 833.7L885.3 832.9L885.8 835.2L885.3 837.8L885.4 838.8L885.8 840.2L885.6 839.7L885.6 841.9L885.9 843.6L885.8 844.5L886.0 846.9L885.5 846.6L886.3 848.1L886.3 849.7L886.1 852.6L886.2 852.3L886.0 854.0L886.6 855.3L886.4 856.6L886.5 858.4L886.5 858.3L886.7 860.3L886.4 862.5L886.5 862.7L886.8 865.6L887.4 865.5L887.4 867.7L886.8 868.3L886.9 869.2L887.3 870.6L888.0 872.1L887.3 873.5L887.9 873.9L887.7 876.1L887.8 877.3L888.1 879.1L888.1 878.8L888.3 880.6L888.6 882.4L888.7 885.0L888.6 885.4L888.9 885.4L888.7 886.9L888.9 889.0L888.7 890.6L889.0 892.7L888.6 894.3L888.9 894.3L889.3 896.0L889.6 897.4L889.1 898.4L889.4 900.5L889.8 900.6L889.0 901.9L889.9 904.1L889.8 906.2L889.6 907.0L889.3 907.5L890.0 909.3L890.2 910.9L889.8 912.9L889.7 913.7L890.2 915.9L889.9 916.2L890.8 916.6L890.7 919.1L891.3 920.5L891.9 921.6L892.8 922.7L892.8 924.6L893.5 924.5L893.8 926.0L893.6 927.7L894.0 928.6L894.1 930.3L894.4 930.7L894.9 931.9L895.1 934.7L895.5 935.5L895.3 936.1L895.3 938.1L896.2 939.6L895.6 941.2L895.9 942.6L896.5 941.9L896.3 943.7L896.8 945.7L897.0 946.8L897.5 948.3L897.6 949.9L897.6 951.5L897.4 952.3L898.0 952.1L897.9 955.0L898.2 957.0L898.6 957.1L898.9 955.7L899.0 955.7L899.8 952.5L899.9 951.4L900.8 949.5L900.8 949.0L901.5 947.1L901.6 945.5L901.8 944.0L902.6 943.4L902.5 942.5L903.3 943.6L903.1 943.8L903.6 947.5L903.9 946.3L904.6 948.4L904.8 949.7L905.4 951.3L905.5 952.5L905.8 953.1L906.0 955.4L906.1 957.1L906.7 957.1L906.3 958.1L906.6 960.2L907.2 961.0L907.1 962.5L906.8 964.6L907.0 965.5L907.8 967.1L908.2 969.2L907.9 968.6L908.0 971.3L908.3 973.3L908.0 974.5L908.8 974.5L908.8 977.0L909.2 978.3L909.4 978.5L908.9 980.1L909.9 982.4L909.4 983.6L909.4 984.7L909.9 985.2L910.1 986.6L910.3 988.0L910.7 989.8L910.5 989.9L910.8 991.1L911.1 992.9L911.8 995.1L911.3 995.1L911.2 997.0L911.4 998.6L912.1 999.8L912.2 1000.9L912.9 999.3L912.1 997.7L912.6 995.9L913.3 996.2L913.6 993.8L913.2 992.0L913.7 991.7L913.6 991.0L914.2 989.9L914.3 988.0L914.5 985.4L914.2 986.0L914.7 983.1L915.3 981.5L914.9 981.2L915.8 980.0L915.2 977.0L916.3 977.1L916.1 975.6L916.3 973.9L916.6 973.9L916.7 972.1L917.2 971.1L917.1 968.8L917.1 967.5L918.0 965.7L917.3 965.3L917.9 963.7L917.9 962.6L918.3 962.1L918.3 960.6L918.8 959.4L918.9 957.2L919.2 957.0L919.2 954.6L919.3 953.1L919.5 951.8L919.9 949.5L920.4 948.1L920.8 947.0L920.4 946.3L920.6 945.6L920.8 944.7L920.8 944.0L921.8 940.4L921.4 940.8L921.7 939.3L921.8 937.7L922.4 936.5L922.2 936.0L922.7 934.0L922.8 933.5L923.5 932.1L923.2 929.7L923.6 929.8L924.0 927.4L923.9 926.0L924.2 925.0L924.3 923.9L924.3 921.8L925.4 921.5L925.9 920.2L925.3 919.0L926.5 916.6L926.7 914.7L926.3 915.3L927.2 912.4L926.8 912.3L927.3 910.7L927.9 910.3L928.1 906.8L928.9 905.5L929.0 906.5L929.5 902.9L929.6 902.3L929.8 902.4L929.8 899.4L929.9 899.7L931.1 897.5L930.6 896.3L931.1 895.7L931.4 894.8L932.2 893.6L932.2 890.6L932.1 890.0L932.6 890.0L932.6 887.9L933.9 887.5L933.3 885.5L934.0 884.2L934.0 882.4L934.6 881.2L935.4 879.0L935.8 878.9L936.0 877.9L936.3 876.1L936.9 875.1L937.5 873.4L938.0 872.9L938.4 870.7L939.2 868.6L940.1 867.4L941.3 867.1L942.0 865.1L942.6 864.0L942.7 863.5L943.4 863.0L943.9 860.2L945.2 860.8L945.4 860.4L946.3 857.9L947.0 857.5L947.7 855.7L949.2 854.3L949.5 852.8L950.4 853.3L951.3 852.0L952.3 849.6L952.8 849.3L953.3 849.1L954.8 847.6L955.3 846.1L955.7 845.1L957.0 843.3L957.5 845.1L957.5 845.7L957.4 847.7L957.6 849.2L957.7 848.9L957.5 851.8L958.3 852.4L958.5 852.5L958.2 854.7L958.5 856.9L958.3 857.2L959.1 858.8L959.1 861.6L959.2 862.1L958.8 864.0L959.7 863.3L959.5 864.3L960.0 866.6L959.5 868.5L959.9 869.5L960.4 869.8L960.9 872.6L961.0 874.1L961.9 875.4L962.5 873.8L962.2 872.3L963.2 870.7L963.0 871.3L963.3 868.6L964.1 868.7L964.4 867.6L963.9 865.7L964.3 865.1L964.8 863.3L965.4 860.1L965.9 859.4L965.8 858.8L966.5 859.2L966.4 861.0L967.2 861.8L968.2 864.3L968.1 865.9L968.9 865.2L969.2 866.7L969.6 869.0L970.6 869.5L970.3 870.9L970.5 871.7L971.2 873.4L970.8 875.4L970.7 877.4L971.1 876.7L971.3 879.5L971.4 880.1L971.7 881.0L971.6 883.4L971.8 884.2L971.9 885.3L971.9 886.6L971.6 887.6L971.7 889.6L972.0 891.6L972.0 891.2L971.7 893.5L972.3 893.7L972.2 897.3L971.6 897.6L971.9 898.2L972.0 899.0L972.1 901.0L971.9 901.6L972.4 905.2L972.4 904.6L972.5 906.3L972.8 907.2L972.8 910.4L973.0 911.8L972.8 912.1L972.7 913.8L972.9 913.5L973.2 916.8L973.4 916.1L973.1 917.4L973.0 919.1L973.4 920.6L973.7 923.1L973.0 923.9L973.0 924.0L973.2 925.6L973.6 927.9L974.2 928.7L975.4 931.4L976.5 931.8L976.9 933.1L976.7 933.6L976.8 934.6L977.0 938.2L977.2 937.9L977.2 939.7L977.6 941.4L977.9 943.3L977.9 944.8L978.0 945.4L977.5 945.5L977.9 948.5L978.3 947.6L978.0 949.3L978.0 952.6L978.2 953.7L978.4 954.9L978.8 955.6L978.5 957.4L978.6 958.5L979.3 958.8L979.1 959.8L979.3 961.0L979.2 962.5L979.4 965.9L979.2 966.0L979.3 966.7L979.5 968.9L979.6 969.1L980.3 971.9L980.0 972.0L980.4 973.3L980.1 975.4L980.7 975.6L980.9 977.3L980.4 978.3L981.3 979.3L980.6 981.9L981.3 982.7L981.3 984.4L981.9 982.4L981.8 980.5L981.8 980.7L982.4 980.5L982.8 977.0L983.0 975.5L983.2 976.3L982.9 972.9L984.0 973.7L984.3 971.0L983.7 971.1L983.9 970.0L984.4 967.2L984.9 965.7L985.6 964.0L985.6 963.1L986.1 962.2L985.9 961.4L986.2 960.0L986.5 962.0L986.4 962.5L987.1 964.8L987.7 965.2L987.8 966.5L987.6 967.1L987.8 969.6L988.8 971.9L988.8 972.3L989.1 972.7L989.1 974.6L989.4 974.3L989.9 972.2L989.6 970.1L990.4 968.6L991.0 968.5L990.6 966.3L990.9 965.4L991.6 963.7L991.5 963.5L992.2 960.9L992.2 960.6L992.9 959.6L993.6 959.1L993.0 957.0L993.5 955.4L993.6 953.5L994.5 953.3L994.4 950.9L995.0 951.5L995.0 949.5L995.8 948.8L995.9 946.4L996.4 947.6L997.1 948.6L998.7 949.1L999.0 950.0L1000.6 951.8L1000.9 952.5L1001.4 954.6L1002.7 955.7L1002.5 957.2L1002.9 957.9L1003.2 961.0L1003.3 960.5L1003.3 961.9L1004.0 963.2L1003.7 964.7L1004.4 965.2L1004.1 967.2L1005.0 970.0L1004.3 970.5L1005.1 972.6L1004.8 971.8L1005.2 975.3L1005.9 974.9L1005.6 977.1L1005.4 975.0L1006.4 975.0L1005.5 973.7L1005.9 970.6L1006.8 970.9L1006.6 968.2L1006.1 968.3L1006.5 967.6L1007.1 964.9L1007.1 964.0L1007.3 961.4L1007.6 960.3L1007.6 960.6L1008.0 959.0L1007.9 958.1L1007.3 955.6L1007.5 955.9L1008.2 952.1L1008.2 953.3L1007.9 949.9L1008.4 948.5L1008.4 947.6L1009.3 947.7L1008.6 946.6L1008.7 944.6L1009.2 942.6L1009.6 940.9L1009.5 940.1L1010.1 938.1L1010.3 938.2L1010.1 935.1L1011.2 935.7L1011.3 933.0L1011.8 933.0L1011.5 930.1L1012.3 928.6L1012.6 928.1L1012.9 926.3L1013.0 925.3L1013.8 924.8L1014.0 922.5L1013.7 920.8L1013.9 921.2L1015.0 920.3L1015.2 917.4L1015.3 916.8L1016.1 915.9L1015.7 914.2L1015.9 913.9L1016.3 912.7L1017.1 910.1L1016.7 909.7L1017.8 908.1L1017.7 906.1L1018.1 905.5L1018.1 903.5L1018.6 901.7L1019.1 900.8L1019.3 898.7L1019.7 897.7L1019.5 898.1L1019.6 895.0L1020.7 893.9L1020.0 894.2L1020.8 890.8L1021.1 890.7L1021.7 890.4L1022.1 887.3L1021.9 886.8L1022.0 884.7L1022.3 883.5L1022.6 883.1L1023.1 881.7L1023.7 880.1L1025.5 878.6L1026.0 878.6L1027.5 876.9L1028.2 875.6L1028.7 874.7L1029.8 874.9L1030.9 874.5L1031.4 873.5L1032.8 872.0L1033.3 872.6L1034.1 874.2L1034.5 874.3L1035.1 875.4L1036.6 878.0L1036.6 879.0L1037.5 880.1L1038.5 880.4L1038.7 881.5L1039.3 882.0L1040.2 885.5L1040.9 886.1L1041.6 886.6L1041.8 884.7L1042.2 884.0L1042.3 882.8L1042.7 881.1L1043.5 880.1L1044.2 879.9L1044.2 878.6L1045.0 875.7L1044.9 874.0L1045.7 872.5L1046.2 873.0L1046.5 870.2L1046.6 870.3L1047.2 868.3L1047.7 867.1L1047.5 867.0L1048.0 864.7L1048.4 863.3L1049.0 865.7L1048.8 865.7L1049.3 866.8L1049.5 869.0L1049.8 869.9L1049.9 869.9L1050.4 873.0L1050.1 874.6L1051.1 876.2L1051.2 876.7L1050.9 876.9L1051.5 878.3L1051.5 881.3L1052.3 882.7L1051.7 881.7L1052.4 885.5L1053.0 886.3L1052.5 886.3L1053.6 889.1L1053.6 889.2L1054.1 889.5L1054.4 892.4L1054.2 893.4L1054.2 895.2L1054.6 895.2L1054.8 898.2L1054.7 898.7L1054.9 899.0L1055.3 900.7L1055.3 903.6L1055.9 903.1L1055.6 906.2L1056.0 905.9L1055.8 906.6L1056.2 909.1L1056.9 909.6L1056.9 911.6L1057.2 913.3L1057.6 915.3L1057.6 914.5L1057.2 915.6L1057.4 917.5L1057.6 918.5L1058.1 920.7L1058.5 922.8L1058.3 923.3L1058.5 925.2L1058.4 924.8L1058.5 926.4L1058.4 929.7L1058.8 929.3L1058.6 931.5L1058.9 932.1L1058.6 934.8L1059.2 936.0L1059.1 937.4L1058.8 938.0L1059.5 938.1L1059.5 939.7L1059.6 942.7L1059.7 943.2L1060.3 943.4L1059.4 945.0L1059.9 946.5L1060.0 947.2L1060.6 948.1L1060.0 950.6L1060.4 952.0L1060.7 952.9L1060.9 954.3L1060.8 956.4L1060.9 956.2L1061.1 959.6L1060.7 958.4L1061.1 959.6L1061.3 963.2L1061.2 963.9L1061.3 965.4L1061.0 966.9L1061.6 967.3L1061.6 967.6L1061.2 971.1L1061.9 971.9L1062.3 973.6L1062.0 974.3L1062.0 975.2L1062.1 976.5L1062.1 978.1L1062.4 980.0L1062.5 980.3L1062.9 982.4L1062.9 984.0L1062.3 983.8L1062.5 984.8L1062.6 987.2L1063.4 988.4L1063.7 989.6L1063.4 990.8L1063.2 991.8L1063.3 994.0L1063.6 994.2L1064.4 997.0L1063.7 997.0L1064.2 1000.3L1064.7 1001.2L1064.1 1002.2L1064.9 1004.3L1065.1 1003.1L1064.5 1006.1L1064.6 1007.0L1064.9 1009.1L1065.5 1008.6L1064.9 1010.6L1064.9 1012.9L1065.4 1014.0L1066.0 1014.0L1065.2 1016.8L1065.9 1018.7L1065.9 1019.0L1066.4 1018.5L1066.1 1015.5L1066.8 1014.2L1066.8 1014.9L1067.4 1012.9L1067.0 1011.2L1067.8 1009.3L1067.2 1007.5L1067.2 1008.1L1067.9 1005.1L1068.0 1003.9L1068.5 1002.0L1068.3 1000.9L1068.9 999.6L1069.0 998.6L1069.2 996.8L1069.7 996.3L1069.3 994.6L1069.3 995.1L1069.9 992.8L1069.8 990.9L1069.8 990.2L1070.3 987.6L1070.5 987.2L1070.8 986.8L1071.2 985.2L1071.7 984.2L1071.7 982.5L1071.7 981.0L1072.0 982.3L1073.3 984.2L1074.2 983.4L1075.2 985.8L1075.5 986.7L1076.7 989.2L1077.0 990.0L1078.1 990.3L1078.6 991.7L1078.9 991.5L1079.4 989.7L1079.4 988.0L1079.8 986.1L1080.0 986.6L1080.5 983.4L1081.4 983.6L1081.2 981.0L1082.2 980.7L1082.5 979.4L1082.2 978.0L1083.4 977.2L1083.4 975.2L1083.6 973.0L1084.5 973.8L1084.6 972.1L1085.0 969.0L1084.6 969.5L1085.5 968.4L1085.9 967.1L1085.4 963.6L1085.7 964.2L1086.6 961.7L1086.5 961.6L1087.1 959.2L1087.4 959.4L1087.3 956.4L1087.9 954.7L1087.8 954.7L1088.5 953.5L1088.7 951.7L1088.5 950.0L1089.3 948.9L1090.9 948.8L1092.7 949.6L1093.3 948.8L1095.0 949.2L1097.0 949.3L1098.0 947.9L1098.0 945.6L1099.2 944.3L1099.6 944.2L1100.0 942.6L1100.1 940.8L1100.7 941.2L1101.6 938.4L1102.3 939.4L1102.6 937.9L1102.5 934.5L1103.4 934.7L1103.4 934.2L1103.9 932.4L1104.4 931.5L1105.6 929.6L1106.1 929.7L1106.1 928.0L1106.8 926.4L1107.4 924.8L1107.6 923.4L1108.4 923.0L1109.2 922.4L1108.8 920.7L1109.7 918.7L1110.0 917.4L1110.8 916.9L1110.2 914.0L1111.5 914.5L1111.4 911.8L1111.5 910.6L1112.1 910.0L1112.1 909.3L1112.6 907.0L1113.1 908.3L1113.7 910.9L1114.7 912.0L1115.0 911.0L1115.3 912.5L1115.4 915.1L1116.6 916.3L1117.0 917.0L1117.5 918.7L1117.6 917.1L1118.7 915.5L1118.7 915.2L1119.4 914.3L1119.4 912.9L1119.7 911.1L1120.7 908.5L1120.6 907.3L1120.9 908.0L1121.0 906.9L1121.8 903.6L1122.3 903.2L1123.2 904.7L1123.8 906.6L1124.6 905.9L1124.7 906.7L1125.3 909.0L1124.9 909.9L1125.9 910.9L1125.3 914.2L1125.8 915.6L1125.7 914.4L1125.4 916.2L1125.4 918.8L1125.3 919.2L1125.7 920.5L1125.5 921.3L1125.6 923.3L1125.8 926.0L1125.7 925.9L1125.9 928.4L1126.1 927.8L1126.7 931.3L1126.4 931.4L1126.8 931.7L1126.2 934.8L1126.2 936.4L1126.4 936.8L1126.4 938.3L1126.5 939.6L1126.4 939.6L1126.8 942.9L1127.1 943.5L1126.7 944.2L1127.3 945.9L1127.0 948.0L1126.9 949.0L1127.4 951.3L1127.1 952.2L1127.5 952.9L1127.7 954.2L1127.7 954.8L1127.5 956.2L1127.5 957.1L1127.2 960.4L1127.7 959.9L1128.0 962.4L1128.0 963.8L1127.5 964.9L1127.7 966.1L1128.0 966.0L1128.0 969.9L1128.3 970.7L1128.2 971.3L1128.4 971.5L1128.7 975.3L1129.1 974.9L1129.3 977.2L1129.1 979.1L1129.2 979.5L1129.7 980.5L1130.0 981.3L1129.6 983.3L1129.6 985.3L1129.5 986.7L1130.1 987.8L1129.9 987.5L1130.9 986.2L1131.0 984.7L1131.0 981.8L1131.4 980.2L1131.0 980.8L1131.1 978.6L1131.9 977.9L1132.1 975.0L1131.8 975.8L1132.1 974.6L1132.1 971.0L1132.4 971.6L1132.9 970.6L1133.5 967.3L1133.0 966.6L1133.4 964.5L1133.8 964.4L1133.6 963.4L1134.6 960.6L1134.6 960.4L1134.7 960.3L1134.5 958.6L1135.0 956.7L1135.7 957.1L1136.8 960.3L1137.1 959.6L1137.4 960.9L1138.7 962.1L1138.8 963.5L1139.9 963.9L1140.5 965.1L1140.8 967.4L1141.3 965.6L1142.1 963.9L1142.9 965.2L1144.0 962.4L1144.7 961.0L1145.6 961.8L1146.2 958.3L1147.0 959.1L1147.0 957.4L1148.2 956.5L1149.1 954.9L1149.6 953.8L1150.0 954.2L1151.0 956.7L1151.5 958.9L1151.5 958.2L1152.0 960.2L1152.4 960.3L1152.9 963.7L1153.9 964.9L1154.4 965.2L1154.5 966.4L1154.4 966.4L1155.7 964.1L1155.5 962.1L1156.4 960.4L1156.4 960.2L1157.1 959.0L1157.1 957.6L1157.3 956.1L1158.0 956.2L1157.8 953.7L1158.1 952.8L1158.6 951.1L1159.3 949.9L1159.3 948.3L1159.8 946.6L1159.9 945.1L1160.1 945.4L1160.7 944.5L1161.3 941.5L1161.2 940.7L1161.3 938.4L1162.0 939.6L1162.3 937.0L1162.2 934.9L1163.0 935.6L1163.5 932.9L1163.4 931.6L1164.1 931.6L1164.5 929.0L1164.1 927.6L1164.7 927.1L1164.9 925.9L1165.0 925.2L1165.7 923.1L1165.6 923.0L1166.1 920.7L1167.0 919.3L1168.1 918.1L1168.8 918.9L1170.0 916.8L1170.6 916.4L1170.3 914.2L1170.7 911.9L1170.8 912.5L1171.5 909.7L1171.5 908.1L1171.6 908.4L1172.0 905.9L1172.3 904.7L1172.6 904.6L1172.2 903.2L1173.0 900.6L1173.4 900.3L1172.8 898.4L1173.0 896.2L1173.6 896.1L1174.4 893.5L1174.0 892.3L1174.6 892.8L1175.1 890.1L1174.9 889.5L1175.3 888.1L1175.3 886.7L1174.8 886.8L1175.5 884.5L1175.6 884.2L1175.2 881.1L1175.4 880.6L1176.3 878.7L1175.7 877.0L1176.1 877.0L1176.0 876.3L1176.2 874.6L1176.9 873.9L1176.4 870.5L1176.6 870.0L1177.0 869.0L1177.1 866.5L1176.9 867.0L1176.9 864.3L1176.9 863.8L1177.2 861.5L1177.7 861.5L1177.3 859.8L1177.3 858.0L1177.8 858.4L1177.7 856.7L1177.7 853.9L1178.4 852.9L1178.2 852.0L1178.2 849.6L1178.2 850.0L1179.0 849.3L1178.8 846.7L1179.8 844.9L1181.7 844.8L1181.7 846.9L1182.6 847.8L1183.1 848.4L1183.7 848.7L1183.4 852.1L1184.6 852.0L1184.4 853.0L1185.7 855.9L1185.6 856.4L1185.5 859.0L1185.5 858.0L1186.0 859.3L1186.6 862.8L1186.5 862.1L1186.4 864.3L1186.6 864.3L1186.7 866.3L1187.8 869.3L1187.5 869.3L1188.1 870.8L1188.3 871.8L1187.9 874.5L1188.8 874.8L1188.5 875.9L1189.4 874.1L1189.6 873.4L1189.8 871.0L1190.0 871.2L1190.7 870.8L1191.5 868.5L1191.9 866.5L1192.4 866.4L1192.4 864.0L1193.0 863.4L1193.6 861.9L1193.6 861.3L1194.4 859.4L1194.7 859.9L1195.4 862.0L1196.1 864.4L1197.3 864.4L1197.2 865.3L1198.3 867.1L1199.7 865.7L1201.1 865.3L1201.7 864.0L1203.1 864.2L1203.2 865.5L1203.1 866.3L1204.0 868.2L1204.5 869.2L1204.1 871.2L1204.2 871.8L1204.6 872.4L1205.2 874.9L1204.6 875.0L1205.2 878.5L1205.9 879.4L1205.5 879.6L1205.8 882.2L1205.7 882.8L1206.4 884.3L1206.4 884.7L1207.3 887.9L1206.9 887.6L1207.2 889.0L1208.0 890.4L1207.6 890.8L1208.0 893.4L1209.7 893.5L1211.5 893.0L1212.9 893.4L1212.9 894.5L1213.3 897.1L1214.3 897.8L1214.5 897.7L1214.4 900.6L1214.5 902.3L1215.6 902.5L1215.9 903.9L1216.0 904.8L1216.3 906.4L1216.7 908.3L1216.5 909.7L1217.4 910.7L1217.1 912.2L1217.3 913.0L1218.2 915.4L1218.5 914.8L1218.8 916.3L1219.4 918.8L1219.5 920.7L1219.7 920.7L1220.4 921.9L1220.6 922.0L1222.2 925.1L1222.1 926.0L1222.8 926.6L1224.1 926.9L1224.5 928.5L1224.4 930.9L1225.5 931.8L1225.4 932.9L1226.4 933.3L1226.2 934.2L1226.6 936.2L1227.0 936.9L1227.4 938.1L1228.0 939.9L1228.3 940.5L1228.6 942.5L1229.4 944.0L1230.3 943.1L1231.7 943.8L1233.0 942.7L1235.2 942.9L1236.0 942.0L1236.1 941.3L1236.8 938.8L1237.3 939.3L1238.5 937.8L1238.7 936.8L1239.2 934.5L1239.9 933.9L1240.4 932.8L1241.2 931.9L1241.5 929.2L1242.6 927.9L1242.7 926.2L1243.4 926.0L1244.0 923.9L1244.2 922.8L1245.0 922.5L1244.7 920.7L1244.7 921.2L1245.5 919.6L1245.5 918.4L1245.4 916.1L1245.4 914.8L1245.7 912.5L1246.2 912.8L1245.9 911.8L1246.0 908.6L1246.4 907.2L1246.0 907.4L1246.6 905.0L1245.9 904.0L1246.3 903.3L1246.9 900.5L1246.3 899.5L1246.4 899.0L1246.7 897.2L1247.0 897.4L1247.3 894.8L1247.5 894.8L1247.5 891.1L1247.5 891.8L1247.5 890.3L1247.9 887.7L1247.3 887.9L1247.3 885.9L1247.8 883.8L1247.3 882.3L1248.0 882.2L1247.5 881.6L1247.7 878.8L1248.5 879.0L1248.3 875.7L1248.5 875.8L1248.5 874.0L1248.1 872.0L1248.7 870.5L1249.1 869.2L1248.4 868.2L1249.1 867.8L1249.0 866.8L1249.3 865.9L1249.5 864.7L1249.2 861.6L1249.5 860.1L1249.5 859.6L1249.5 858.0L1249.3 856.6L1249.9 855.9L1249.4 854.0L1249.9 853.4L1250.2 851.9L1250.2 851.6L1250.5 849.4L1250.1 848.0L1250.0 845.8L1250.0 844.9L1250.0 843.4L1250.4 841.6L1250.7 841.2L1250.9 840.6L1250.2 839.8L1251.0 837.9L1250.3 835.1L1250.4 833.6L1251.2 834.7L1250.4 831.3L1251.3 829.9L1251.1 829.2L1251.0 828.0L1251.6 827.4L1251.1 824.6L1251.5 825.0L1251.1 823.4L1251.1 820.6L1251.9 820.7L1251.6 819.4L1251.8 817.6L1251.6 817.8L1251.7 815.7L1252.2 813.4L1251.8 811.6L1252.0 812.5L1251.7 809.8L1252.3 808.5L1252.2 808.0L1252.0 807.4L1252.4 804.3L1252.5 804.7L1252.7 803.2L1252.6 799.7L1252.7 799.0L1252.9 799.1L1252.5 796.3L1253.0 794.9L1252.8 795.0L1253.1 793.3L1252.6 791.7L1253.2 791.7L1253.1 789.2L1252.8 787.2L1253.3 785.5L1253.0 786.1L1253.2 783.2L1253.6 782.2L1253.2 780.8L1253.8 779.9L1253.2 779.4L1253.2 776.6L1253.8 776.7L1253.5 774.0L1253.4 774.5L1254.2 772.9L1253.8 771.4L1254.0 769.7L1254.5 769.0L1254.2 767.2L1254.6 766.0L1254.4 765.7L1253.9 763.1L1254.2 761.8L1254.4 761.0L1254.1 758.5L1254.5 758.5L1254.2 757.3L1254.2 755.1L1254.5 753.1L1255.1 752.0L1254.7 750.3L1255.2 748.9L1255.2 747.6L1254.8 746.9L1255.1 745.0L1255.2 743.6L1254.8 743.5L1255.3 742.5L1255.6 739.7L1255.5 740.5L1255.1 739.3L1255.2 735.9L1255.5 736.6L1255.7 733.2L1255.4 733.7L1255.9 732.0L1255.9 730.1L1255.9 729.1L1255.3 728.6L1255.8 725.5L1255.6 724.6L1255.8 722.4L1255.8 723.7L1255.8 720.3L1255.5 720.0L1256.1 717.6L1256.3 716.8L1255.7 714.9L1256.5 715.6L1256.4 713.6L1256.0 711.1L1256.6 710.4L1256.4 709.2L1256.9 706.8L1256.4 705.9L1257.0 706.1L1256.6 703.7L1256.7 703.6L1256.5 700.4L1256.3 699.6L1257.2 697.6L1257.2 698.3L1256.8 695.6L1257.0 694.8L1256.6 694.6L1257.0 692.0L1257.4 691.5L1257.7 690.9L1257.7 688.6L1257.1 687.2L1257.2 685.7L1257.8 685.4L1257.7 682.0L1257.9 682.2L1257.8 679.6L1257.7 678.2L1257.7 677.5L1257.9 676.3L1258.0 674.3L1258.2 672.9L1258.1 671.5L1258.5 670.1L1258.5 671.2L1258.3 668.6L1257.9 668.1L1258.4 665.8L1258.5 664.0L1258.2 663.2L1258.6 662.5L1258.7 660.0L1258.8 658.9L1259.0 657.9L1258.4 657.3L1259.2 655.3L1259.3 654.0L1259.5 654.1L1259.1 652.5L1258.8 650.5L1259.0 648.7L1259.6 648.7L1259.7 647.0L1259.6 645.1L1259.1 643.6L1260.0 642.8L1260.1 641.4L1259.5 639.8L1259.7 637.9L1259.5 637.0L1260.4 635.7L1260.0 634.9L1260.0 634.3L1260.2 631.5L1260.4 630.4L1260.5 629.0L1260.2 628.9L1260.6 626.1L1261.0 625.7L1260.7 625.0L1261.1 622.8L1260.5 621.7L1260.6 619.8L1261.3 619.2L1260.7 617.8L1260.8 615.9L1261.6 615.2L1261.6 612.6L1261.1 610.9L1261.3 611.8L1262.1 609.8L1261.7 608.7L1261.8 606.5L1262.2 604.5L1262.3 604.1L1261.9 602.6L1261.8 600.7L1262.3 600.0L1262.4 599.2L1262.9 597.1L1262.4 595.7L1262.4 594.0L1262.7 592.7L1262.7 591.9L1262.7 591.6L1262.9 589.7L1263.1 589.3L1262.9 587.9L1262.8 584.7L1262.8 585.0L1263.6 582.3L1263.5 580.4L1263.1 579.9L1263.8 580.0L1263.2 576.8L1263.2 576.4L1263.5 576.0L1263.3 573.1L1263.9 572.2L1264.1 570.0L1264.0 569.6L1264.4 568.3L1264.6 568.1L1264.2 565.5L1264.4 564.8L1264.3 563.0L1264.3 560.9L1265.2 560.8L1264.7 560.5L1264.6 557.1L1265.5 555.6L1265.1 554.9L1265.6 553.2L1265.9 551.9L1265.6 551.4L1266.1 548.8L1265.7 548.5L1265.5 547.5L1265.8 547.2L1266.3 545.0L1266.3 543.9L1265.8 541.2L1266.1 540.2L1266.5 539.0L1266.0 537.5L1266.0 536.7L1266.3 536.2L1266.2 535.1L1266.7 533.9L1266.9 531.5L1266.2 531.5L1266.9 529.2L1267.0 527.1L1267.0 526.0L1267.2 524.8L1266.7 524.8L1266.9 521.3L1266.7 521.4L1266.9 521.0L1266.7 518.7L1267.1 517.9L1267.5 515.1L1266.8 514.1L1267.1 513.9L1267.2 512.8L1267.5 510.9L1267.0 510.4L1267.4 507.1L1267.8 505.9L1267.4 505.1L1267.4 503.1L1267.4 502.5L1267.5 500.8L1267.4 500.8L1268.0 498.9L1268.2 496.4L1267.7 497.0L1268.0 495.0L1267.6 492.5L1267.6 493.4L1268.2 491.4L1268.1 490.2L1268.1 488.3L1267.8 487.8L1268.2 485.2L1268.4 484.3L1268.8 482.9L1268.8 481.2L1268.7 479.3L1268.2 478.2L1268.9 477.8L1268.5 475.7L1268.5 476.1L1269.0 474.6L1268.3 473.5L1268.7 471.0L1269.1 470.8L1269.0 469.7L1268.9 467.8L1269.0 467.1L1268.5 464.0L1269.3 463.3L1269.2 461.8L1269.1 460.4L1269.4 460.6L1269.0 458.5L1269.3 456.1L1268.6 454.9L1269.1 455.3L1268.8 453.0L1269.3 452.9L1269.0 451.4L1269.2 449.1L1268.7 446.8L1269.1 446.8L1269.6 446.1L1269.4 444.3L1269.4 441.9L1269.2 441.7L1269.0 439.9L1269.4 439.1L1269.7 436.6L1269.2 436.8L1269.6 433.5L1269.2 434.6L1269.7 432.9L1269.2 431.3L1269.7 429.5L1269.3 427.9L1270.3 428.0L1269.9 426.1L1269.5 424.9L1269.7 424.2L1269.4 421.4L1270.4 419.2L1270.0 418.1L1270.2 418.2L1270.2 416.1L1269.8 415.8L1270.2 413.4L1270.2 412.8L1269.9 409.8L1270.5 409.3L1270.0 408.7L1270.0 407.2L1270.5 407.0L1270.2 405.4L1270.6 402.1L1270.7 401.0L1270.8 401.2L1270.6 399.3L1270.2 396.6L1270.5 396.5L1270.3 394.2L1270.6 394.0L1271.0 392.7L1271.9 390.6L1272.0 391.4L1271.8 389.1L1272.8 387.4L1272.6 385.2L1273.0 385.0L1272.8 385.6L1273.5 386.7L1273.8 388.5L1273.7 389.7L1273.8 391.1L1274.2 391.6L1274.0 393.4L1273.4 394.9L1273.6 396.8L1273.8 398.7L1274.3 398.1L1274.5 400.8L1274.0 402.4L1274.9 404.2L1274.2 405.1L1274.5 405.2L1274.7 408.0L1274.7 408.1L1274.7 410.2L1275.5 410.8L1275.1 411.9L1275.1 413.6L1275.9 415.4L1275.2 415.4L1275.3 417.1L1276.3 419.6L1276.0 420.0L1276.1 421.6L1276.0 422.9L1276.3 424.0L1276.0 426.2L1276.3 425.6L1276.2 426.7L1276.8 429.2L1277.0 430.7L1277.1 432.6L1276.5 434.1L1276.9 433.6L1276.7 436.4L1277.0 437.9L1276.4 439.2L1277.3 440.6L1277.3 440.3L1277.4 441.7L1277.5 444.5L1276.9 443.9L1277.0 446.4L1277.8 447.3L1277.0 450.0L1277.7 449.3L1277.0 451.7L1277.3 454.0L1278.0 453.1L1277.3 456.3L1278.2 457.0L1278.2 459.4L1278.3 460.3L1278.2 460.4L1278.3 462.9L1278.4 463.6L1278.6 465.3L1278.6 467.0L1278.1 466.4L1277.8 468.6L1278.8 469.3L1278.4 472.4L1278.1 472.6L1279.0 473.9L1278.8 474.6L1278.7 477.3L1279.0 477.6L1278.7 478.2L1278.5 479.7L1279.3 481.0L1278.9 483.7L1279.1 483.3L1279.3 485.1L1279.1 487.9L1279.6 487.8L1279.5 490.5L1279.8 490.5L1279.9 491.1L1279.1 494.1L1279.9 494.0L1279.2 497.3L1280.1 497.8L1280.2 499.2L1279.5 501.1L1280.3 500.3L1280.3 502.1L1279.9 505.2L1279.8 506.0L1279.8 506.7L1279.9 508.3L1279.8 509.1L1280.5 511.8L1280.4 511.9L1280.2 512.8L1280.5 515.3L1280.1 516.0L1280.5 516.8L1280.3 519.4L1280.7 518.6L1280.2 520.4L1280.7 521.4L1280.5 523.5L1280.3 525.6L1280.8 525.8L1281.3 527.0L1280.8 528.6L1280.9 531.5L1280.9 530.9L1281.3 534.2L1280.6 533.8L1280.9 536.7L1281.0 535.8L1281.0 538.9L1281.6 540.3L1281.6 541.3L1280.8 542.4L1281.1 543.9L1281.7 545.6L1281.6 546.0L1281.5 546.2L1281.9 549.1L1281.2 548.9L1281.6 552.0L1282.0 552.5L1282.0 552.9L1281.4 554.3L1281.2 557.0L1281.5 558.6L1281.8 560.0L1282.1 559.9L1282.1 563.0L1281.8 562.1L1281.8 563.4L1282.0 565.2L1282.2 568.1L1281.6 569.2L1282.0 569.7L1282.5 571.7L1282.5 571.1L1281.7 573.3L1282.2 575.3L1282.5 577.5L1282.5 577.6L1282.3 580.0L1282.5 579.8L1282.6 582.5L1282.1 583.2L1282.6 584.8L1282.4 586.1L1282.3 585.6L1282.2 588.4L1282.5 589.0L1282.4 589.9L1283.1 592.0L1282.3 594.0L1283.1 594.5L1283.0 594.8L1282.6 597.9L1282.7 597.4L1282.9 600.0L1283.1 600.9L1282.6 601.5L1282.6 604.5L1282.9 605.5L1283.0 606.1L1283.4 607.4L1283.3 610.2L1283.6 611.0L1283.2 610.8L1283.6 611.9L1283.0 615.4L1283.5 615.5L1283.0 617.1L1283.3 618.1L1283.9 619.9L1283.6 619.9L1283.5 622.2L1283.6 622.8L1283.9 623.9L1284.1 625.7L1283.5 626.8L1284.0 628.0L1284.2 631.0L1284.0 631.5L1284.0 632.4L1284.3 633.0L1284.0 635.2L1284.1 635.6L1284.6 637.2L1284.0 638.2L1283.9 639.5L1283.8 641.9L1284.4 643.6L1284.1 645.2L1284.2 646.2L1284.9 647.6L1284.6 647.6L1284.2 650.5L1284.5 649.9L1284.7 652.4L1284.4 654.4L1284.8 655.8L1284.4 655.7L1285.1 657.5L1284.8 659.9L1284.8 660.3L1284.3 662.2L1284.9 663.4L1285.3 664.3L1285.0 664.5L1284.7 668.0L1284.8 668.4L1285.2 670.1L1284.8 669.8L1285.1 671.6L1285.6 674.1L1284.8 674.8L1285.7 675.9L1285.3 676.2L1285.5 678.0L1285.4 679.9L1285.0 680.5L1285.5 681.7L1285.9 683.6L1285.8 684.4L1285.2 687.6L1285.4 687.8L1285.5 688.8L1285.6 691.1L1285.6 693.0L1286.1 692.5L1285.7 693.4L1286.2 695.2L1286.2 697.8L1286.2 697.7L1286.1 700.9L1285.8 699.9L1286.7 702.1L1286.5 704.7L1286.3 704.2L1286.4 705.4L1286.0 708.2L1286.3 708.9L1286.9 710.4L1286.5 712.1L1286.2 713.8L1286.4 713.5L1286.8 715.9L1286.4 717.0L1287.2 717.0L1287.4 719.7L1287.1 720.5L1287.5 721.8L1287.1 722.7L1287.1 725.3L1286.8 725.7L1287.3 728.4L1287.0 728.4L1287.3 729.6L1287.3 730.3L1287.6 732.1L1288.1 732.7L1287.1 736.0L1287.9 736.3L1288.1 736.5L1287.3 740.2L1288.3 739.9L1288.1 741.1L1287.4 743.8L1287.8 744.2L1287.6 746.4L1287.6 747.4L1288.1 748.5L1288.7 750.7L1288.4 751.7L1288.4 751.9L1288.6 753.3L1288.4 754.8L1288.6 757.3L1288.6 756.5L1289.0 758.8L1288.6 759.5L1288.8 761.8L1288.9 762.6L1288.4 763.2L1289.0 765.0L1288.9 767.1L1289.5 767.4L1288.8 770.2L1289.0 771.3L1289.5 770.6L1289.7 773.1L1288.9 774.2L1289.6 775.3L1289.7 776.2L1289.7 777.5L1289.8 778.3L1289.6 780.1L1289.4 783.3L1290.3 782.3L1290.0 785.5L1289.9 786.1L1290.3 787.7L1290.0 787.7L1289.8 789.9L1290.4 790.2L1290.6 793.8L1290.2 793.4L1290.7 796.4L1290.1 796.7L1290.8 796.8L1290.8 798.7L1290.9 799.5L1290.4 801.7L1290.6 802.0L1290.9 804.0L1290.6 806.7L1291.0 806.1L1290.6 807.4L1291.1 809.5L1291.2 811.2L1291.2 811.0L1290.9 812.3L1291.8 815.6L1291.7 817.2L1291.5 817.6L1291.4 818.6L1291.6 820.8L1291.6 822.2L1291.9 821.8L1291.8 824.3L1291.5 824.3L1291.6 826.7L1292.0 828.6L1291.9 829.6L1291.9 831.3L1291.8 832.9L1292.1 833.5L1292.5 835.3L1292.5 836.1L1292.3 837.5L1292.7 837.8L1292.4 838.3L1292.4 839.9L1292.3 841.4L1292.8 843.4L1292.9 844.6L1293.5 846.5L1293.3 847.5L1293.8 849.6L1293.8 849.7L1293.5 851.0L1293.9 851.9L1293.6 853.2L1293.5 855.0L1293.6 857.3L1294.6 856.9L1293.9 859.9L1294.4 859.8L1294.4 860.6L1295.2 862.7L1295.1 863.3L1295.1 865.0L1295.4 865.8L1294.8 869.5L1295.8 871.0L1295.5 870.6L1295.4 871.1L1295.7 872.6L1295.5 874.4L1295.8 875.2L1295.8 876.5L1296.3 879.9L1296.8 879.3L1296.3 880.8L1297.1 881.8L1297.0 884.2L1297.4 885.7L1297.4 888.0L1297.5 888.4L1297.4 889.6L1298.0 890.2L1297.4 892.3L1298.5 893.1L1297.9 894.4L1298.4 897.5L1298.6 897.8L1298.8 898.3L1299.2 901.4L1299.5 902.1L1300.0 902.2L1299.5 905.3L1300.3 904.4L1300.7 906.0L1300.5 908.2L1300.8 909.0L1300.5 910.4L1301.6 912.3L1301.4 914.0L1301.2 915.8L1301.7 915.4L1301.7 916.3L1302.3 919.6L1302.2 920.6L1303.2 922.6L1302.7 922.4L1303.0 923.8L1303.4 925.5L1304.1 926.4L1304.8 928.6L1305.3 929.4L1305.1 930.7L1305.8 930.6L1306.3 931.7L1307.3 934.3L1307.6 935.0L1308.3 936.7L1308.5 937.3L1309.3 938.8L1309.7 939.0L1310.5 941.1L1311.2 941.7L1311.4 944.1L1311.5 944.7L1312.1 945.5L1312.4 947.0L1313.9 947.1L1313.9 949.5L1314.1 947.0L1315.1 946.7L1314.8 945.3L1315.5 944.5L1316.0 944.2L1316.6 940.9L1316.1 941.8L1317.3 940.3L1317.7 939.1L1317.8 936.5L1318.4 936.5L1318.4 934.5L1319.5 933.7L1319.8 932.8L1320.6 932.5L1321.8 929.2L1322.4 928.8L1323.2 929.1L1323.5 927.5L1324.3 926.0L1325.0 925.7L1326.2 923.7L1326.9 921.8L1327.6 921.9L1327.9 921.1L1328.9 919.6L1329.6 919.3L1329.7 916.7L1330.2 915.0L1330.8 914.0L1331.3 912.0L1332.1 911.0L1332.7 909.7L1333.2 908.4L1334.0 908.4L1334.4 907.4L1335.0 906.0L1335.6 904.2L1336.4 903.1L1338.4 902.4L1338.9 903.2L1340.5 904.5L1342.4 904.6L1342.3 904.9L1342.6 906.4L1342.6 908.1L1342.8 910.6L1343.3 912.2L1343.2 913.5L1343.5 913.3L1343.1 916.4L1344.0 916.9L1343.4 917.8L1343.8 920.3L1344.1 921.4L1344.3 920.6L1344.2 922.4L1344.9 925.3L1344.8 925.7L1344.7 927.3L1345.0 928.9L1345.4 930.8L1344.7 931.8L1345.0 932.0L1345.1 932.9L1345.6 935.7L1346.1 936.2L1346.3 938.0L1345.7 937.4L1346.3 939.9L1346.2 942.5L1346.2 941.6L1346.9 942.9L1346.5 945.3L1346.9 946.5L1347.0 945.9L1346.8 943.1L1347.8 943.3L1348.1 941.8L1347.3 941.1L1348.0 937.7L1348.0 937.3L1348.1 935.2L1348.5 935.9L1348.9 933.1L1349.1 932.6L1348.8 931.4L1349.2 928.7L1349.1 928.7L1349.2 927.8L1349.6 924.7L1349.5 923.3L1349.6 922.3L1350.3 921.8L1350.7 919.3L1350.6 918.6L1350.8 918.5L1350.8 915.2L1351.5 914.0L1351.3 913.6L1350.9 911.6L1351.3 910.8L1351.0 910.4L1351.4 907.6L1351.7 906.0L1352.2 906.7L1351.3 904.6L1351.5 903.4L1352.1 901.8L1352.1 901.6L1351.7 898.5L1352.0 898.5L1352.3 896.0L1352.4 895.6L1352.7 892.6L1352.8 892.9L1352.7 891.6L1352.5 889.3L1352.5 889.7L1352.5 888.3L1353.3 885.8L1352.9 885.0L1352.9 882.0L1353.1 881.0L1352.9 881.9L1353.6 880.5L1353.7 877.2L1353.0 877.3L1353.5 874.5L1353.3 875.1L1353.7 873.5L1353.8 870.5L1353.4 869.6L1353.3 868.7L1353.4 868.5L1354.4 867.4L1354.1 865.9L1353.6 864.8L1354.1 861.9L1354.4 860.0L1354.3 859.6L1355.7 860.4L1357.1 858.4L1359.3 860.5L1360.3 859.6L1359.9 858.0L1360.6 858.0L1360.5 854.5L1361.1 854.0L1361.1 853.3L1360.5 851.6L1360.3 850.6L1360.6 849.0L1361.2 847.1L1361.2 846.8L1360.7 845.6L1360.8 843.4L1361.0 843.0L1361.5 840.4L1361.8 839.1L1361.5 838.4L1361.2 838.8L1361.3 837.2L1361.5 835.0L1361.8 833.7L1361.5 833.0L1362.1 831.5L1361.8 829.7L1361.9 828.4L1361.7 827.0L1361.9 826.0L1362.7 824.1L1362.2 822.6L1362.6 822.2L1362.3 821.4L1362.4 818.5L1362.8 816.9L1363.3 817.2L1363.3 814.4L1363.2 813.0L1363.1 811.6L1363.7 812.0L1364.0 809.9L1363.5 807.6L1363.5 807.7L1363.9 805.8L1363.9 803.8L1364.2 802.7L1364.4 801.6L1364.7 800.2L1364.7 800.3L1364.6 798.9L1364.8 796.7" stroke="#3e7b3a" stroke-width="1.8" fill="none" stroke-linejoin="round"/>
<path d="M289 272V1050M1419 272V1050M288 1049H1420M278 273H289M278 337H289M278 401H289M278 467H289M278 531H289M278 595H289M278 661H289M278 725H289M278 789H289M278 855H289M278 919H289M278 983H289M278 1049H289M1419 273H1428M1419 369H1428M1419 467H1428M1419 563H1428M1419 661H1428M1419 757H1428M1419 855H1428M1419 951H1428M1419 1049H1428M289 1049V1058M449 1049V1058M611 1049V1058M773 1049V1058M935 1049V1058M1095 1049V1058M1257 1049V1058M1419 1049V1058" stroke="#1c1c1c" stroke-width="2" fill="none"/>
<g fill="#222" font-size="24"><text x="272.0" y="279.5" text-anchor="end">0.003</text><text x="272.0" y="343.5" text-anchor="end">0.002</text><text x="272.0" y="407.5" text-anchor="end">0.001</text><text x="272.0" y="473.5" text-anchor="end">0</text><text x="272.0" y="537.5" text-anchor="end">-0.001</text><text x="272.0" y="601.5" text-anchor="end">-0.002</text><text x="272.0" y="667.5" text-anchor="end">-0.003</text><text x="272.0" y="731.5" text-anchor="end">-0.004</text><text x="272.0" y="795.5" text-anchor="end">-0.005</text><text x="272.0" y="861.5" text-anchor="end">-0.006</text><text x="272.0" y="925.5" text-anchor="end">-0.007</text><text x="272.0" y="989.5" text-anchor="end">-0.008</text><text x="272.0" y="1055.5" text-anchor="end">-0.009</text><text x="1434.0" y="279.5">4500</text><text x="1434.0" y="375.5">4200</text><text x="1434.0" y="473.5">3900</text><text x="1434.0" y="569.5">3600</text><text x="1434.0" y="667.5">3300</text><text x="1434.0" y="763.5">3000</text><text x="1434.0" y="861.5">2700</text><text x="1434.0" y="957.5">2400</text><text x="1434.0" y="1055.5">2100</text><text x="289" y="1084.0" text-anchor="middle">222</text><text x="449" y="1084.0" text-anchor="middle">224</text><text x="611" y="1084.0" text-anchor="middle">226</text><text x="773" y="1084.0" text-anchor="middle">228</text><text x="935" y="1084.0" text-anchor="middle">230</text><text x="1095" y="1084.0" text-anchor="middle">232</text><text x="1257" y="1084.0" text-anchor="middle">234</text><text x="1419" y="1084.0" text-anchor="middle">236</text></g>
<g fill="#222" font-size="24">
<text x="854" y="1118" text-anchor="middle">LI-8250 DOY Initial Value</text>
<text transform="translate(180,663) rotate(-90)" text-anchor="middle">LI-7810 CH<tspan font-size="12.5" dy="8">4</tspan><tspan dy="-8"> Dry Lin Flux (nmol kg</tspan><tspan font-size="14" dy="-7">-1</tspan><tspan dy="7">s</tspan><tspan font-size="14" dy="-7">-1</tspan><tspan dy="7">)</tspan></text>
<text transform="translate(1556,660) rotate(90)" text-anchor="middle">LI-7810 CH<tspan font-size="12.5" dy="8">4</tspan><tspan dy="-8"> Dry Initial Value (nmol mol</tspan><tspan font-size="14" dy="-7">-1</tspan><tspan dy="7">)</tspan></text>
</g>
<g fill="#222" font-size="24"><circle cx="228.5" cy="227" r="14" fill="#2c64ba"/><text x="264.0" y="235.3">Port 1</text><circle cx="361.5" cy="227" r="14" fill="#b43530"/><text x="397.0" y="235.3">Port 2</text><circle cx="494.5" cy="227" r="14" fill="#75b3ee"/><text x="530.0" y="235.3">Port 3</text><circle cx="627.5" cy="227" r="14" fill="#eca843"/><text x="663.0" y="235.3">Port 5</text><circle cx="760.5" cy="227" r="14" fill="#5a39a8"/><text x="796.0" y="235.3">Port 6</text><circle cx="893.5" cy="227" r="14" fill="#85b052"/><text x="929.0" y="235.3">Port 7</text><circle cx="1026.8" cy="227" r="14" fill="#aa9bd6"/><text x="1062.3" y="235.3">Port 8</text><circle cx="1177.5" cy="227" r="11.2" fill="#3e7b3a"/><text x="1212" y="235.3">LI-7810 CH<tspan font-size="12.5" dy="8">4</tspan><tspan dy="-8"> Dry Initial Value</tspan></text></g>
<g stroke="#000" fill="none" stroke-width="3.2">
<circle cx="1516.3" cy="172.8" r="9.5"/><path d="M1524.2 180.7 L1534 190.5" stroke-width="3.4"/>
<circle cx="1562.4" cy="172.8" r="9.5"/><path d="M1570.3 180.7 L1580.1 190.5" stroke-width="3.4"/>
<path d="M1556 172.8H1569" stroke-width="3"/>
</g>
<g fill="#000">
<path d="M1604.4 161.9H1615V172.8H1622.4L1609.7 184.5L1597 172.8H1604.4Z"/>
<rect x="1597" y="188.4" width="25.4" height="3.6"/>
</g>
</svg>
</body></html>
